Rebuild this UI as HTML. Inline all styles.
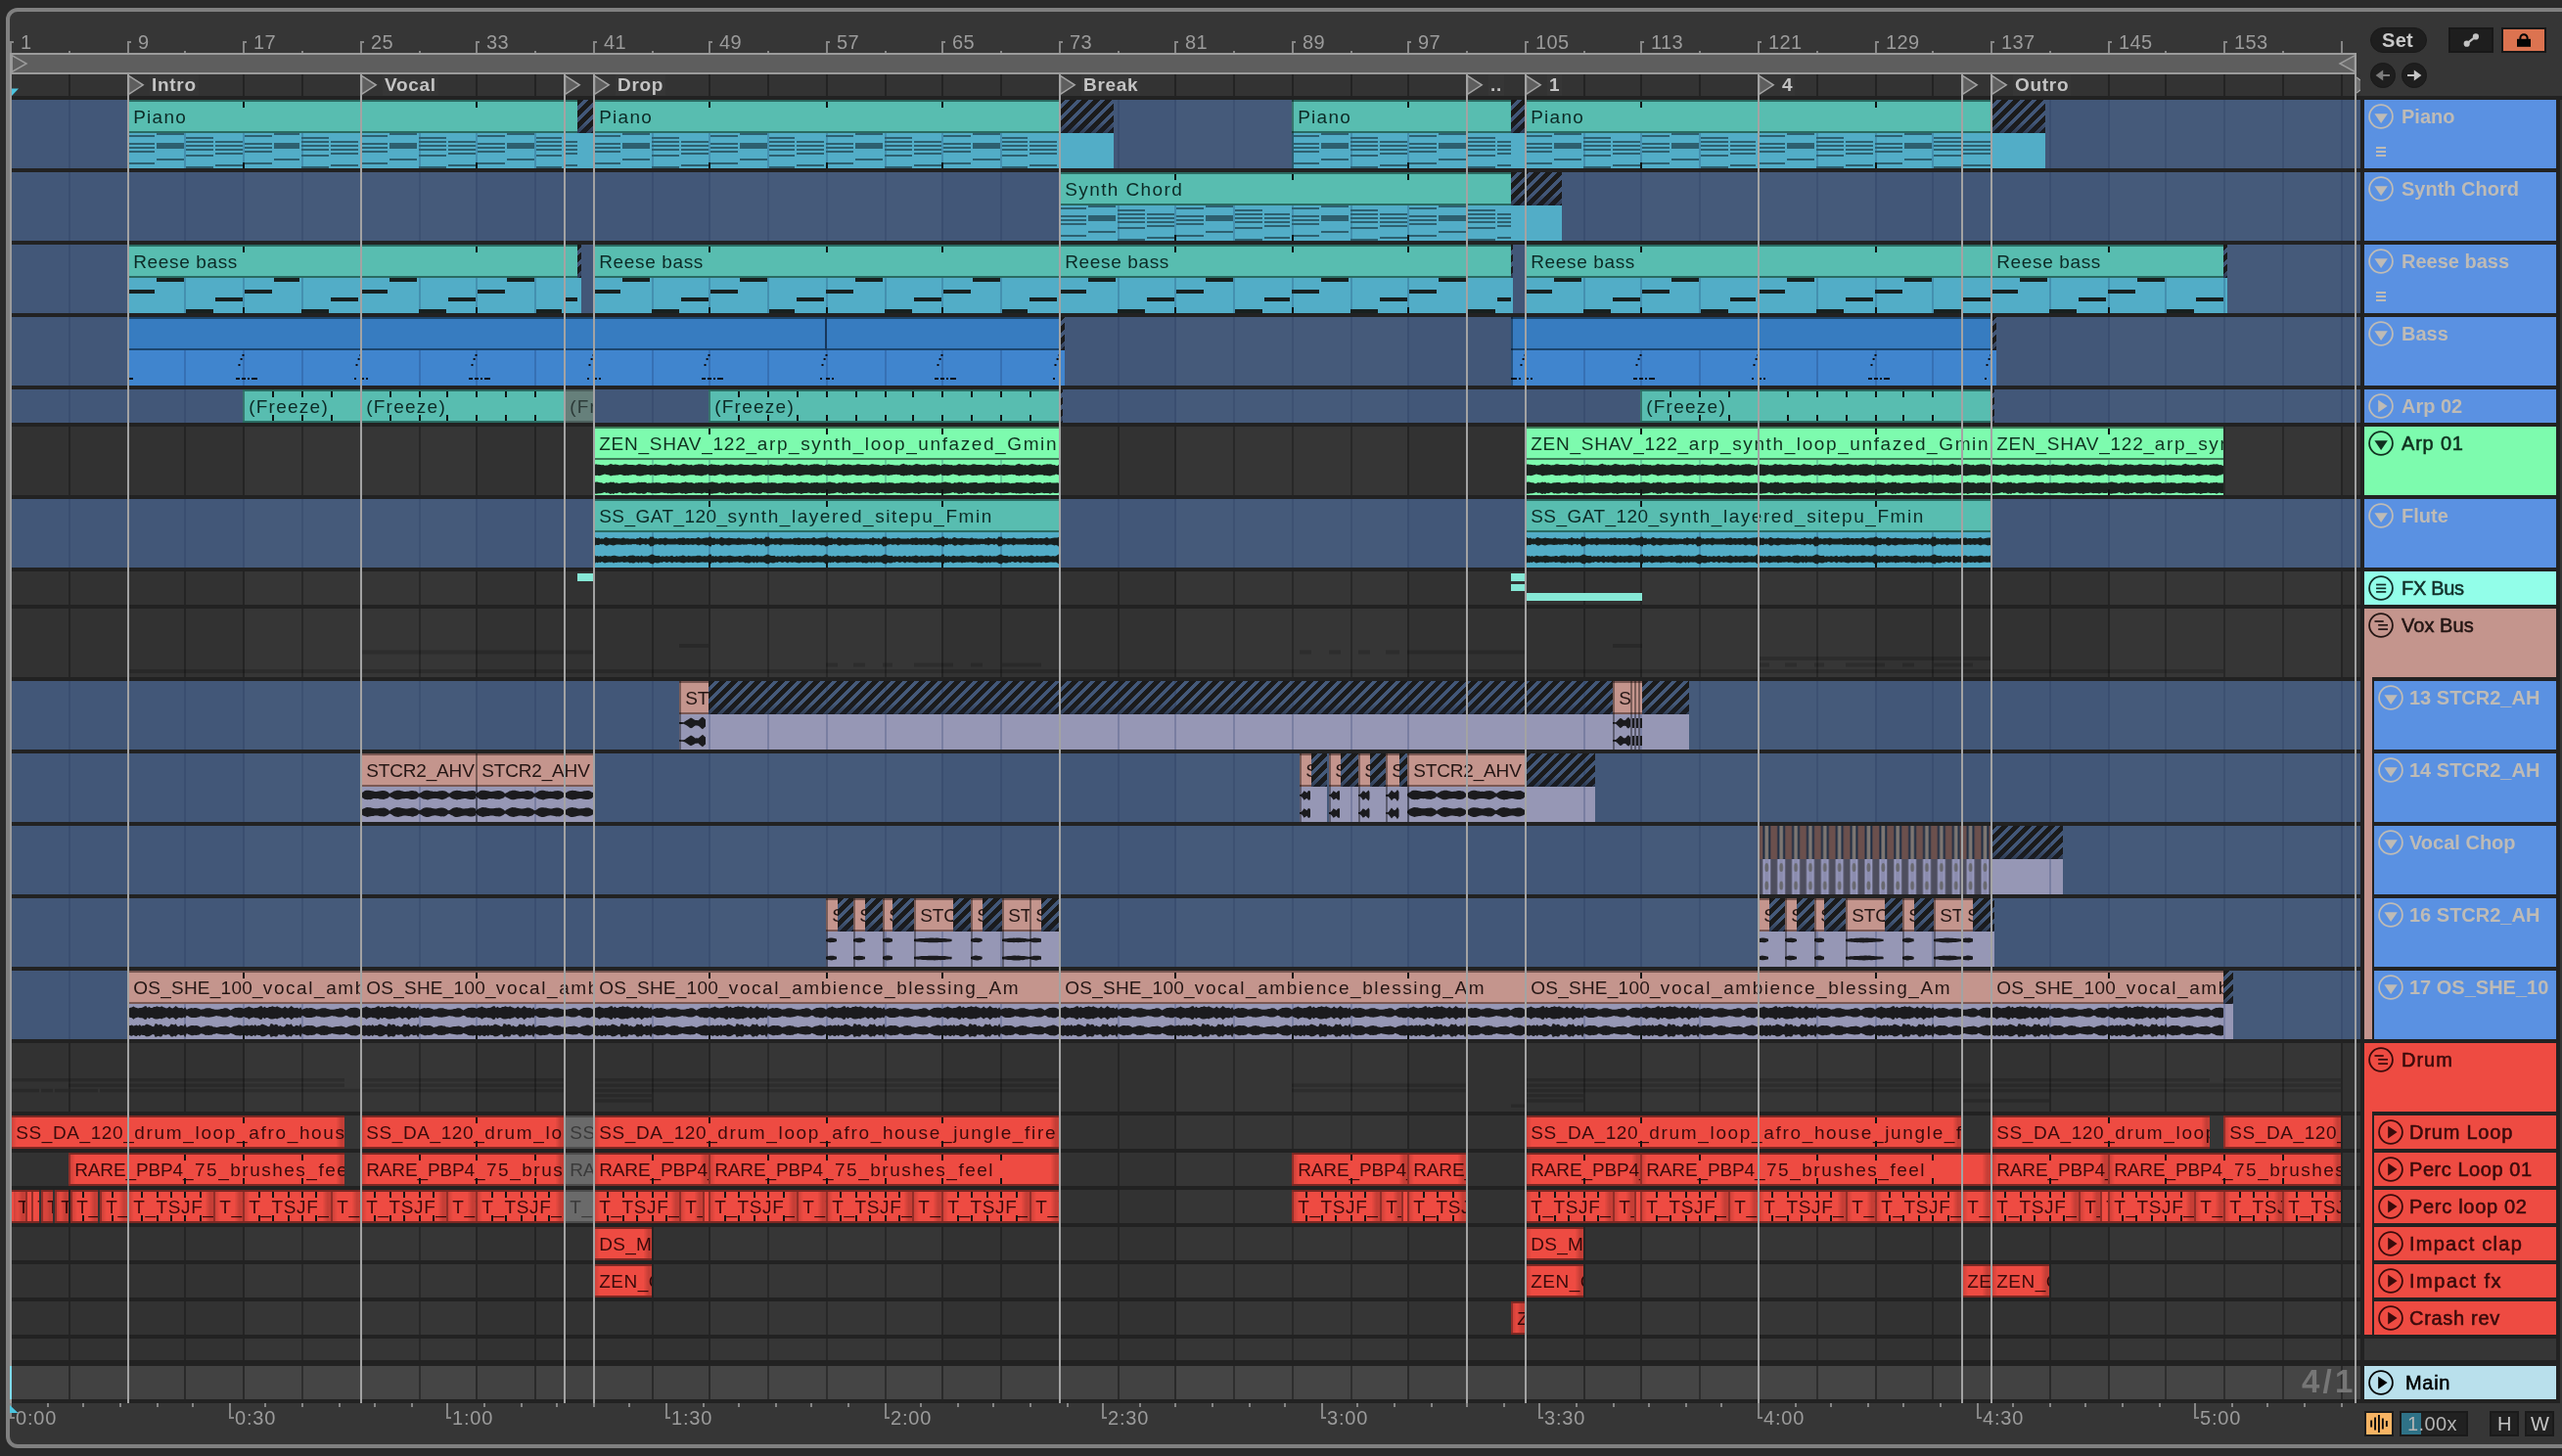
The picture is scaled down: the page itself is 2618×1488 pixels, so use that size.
<!DOCTYPE html><html><head><meta charset="utf-8"><title>Arrangement</title><style>
html,body{margin:0;padding:0}
body{width:2618px;height:1488px;background:#2a2a2a;position:relative;overflow:hidden;font-family:"Liberation Sans",sans-serif}
.a{position:absolute;box-sizing:border-box}
.t{position:absolute;white-space:nowrap}
.t,.n,.hn,.hu,.rl,.ll{will-change:transform}
.c{position:absolute;overflow:hidden;box-sizing:border-box}
.n{position:absolute;left:0;top:1px;white-space:nowrap;font-size:19px;line-height:34px;padding-left:6.2px}
.hn{position:absolute;white-space:nowrap;font-size:20px;font-weight:bold;line-height:34px}
.rl{position:absolute;white-space:nowrap;font-size:20px;line-height:22px;color:#9b9b9b;letter-spacing:.35px}
.hu{position:absolute;white-space:nowrap;font-size:20px;line-height:34px;-webkit-text-stroke:.55px currentColor}
.ll{position:absolute;white-space:nowrap;font-size:19px;font-weight:bold;line-height:22px;color:#c4c4c4;letter-spacing:.7px}
.k{position:absolute;width:2px;background:#0f1413}
svg{position:absolute;overflow:hidden}
</style></head><body>
<div class="a" style="left:6px;top:8px;width:2700px;height:1472px;border:4px solid #808080;border-radius:12px;background:#363636"></div>
<div class="a " style="left:12px;top:98px;width:2604px;height:1336px;background:#222;"></div>
<div class="a " style="left:12px;top:76px;width:2400px;height:22px;background:#333;"></div>
<svg width="0" height="0" style="left:0;top:0"><defs><g id="gl"><rect x="58" y="0" width="2" height="80"/><rect x="118" y="0" width="2" height="80"/><rect x="176" y="0" width="2" height="80"/><rect x="236" y="0" width="2" height="80"/><rect x="296" y="0" width="2" height="80"/><rect x="356" y="0" width="2" height="80"/><rect x="416" y="0" width="2" height="80"/><rect x="474" y="0" width="2" height="80"/><rect x="534" y="0" width="2" height="80"/><rect x="594" y="0" width="2" height="80"/><rect x="654" y="0" width="2" height="80"/><rect x="712" y="0" width="2" height="80"/><rect x="772" y="0" width="2" height="80"/><rect x="832" y="0" width="2" height="80"/><rect x="892" y="0" width="2" height="80"/><rect x="950" y="0" width="2" height="80"/><rect x="1010" y="0" width="2" height="80"/><rect x="1070" y="0" width="2" height="80"/><rect x="1130" y="0" width="2" height="80"/><rect x="1188" y="0" width="2" height="80"/><rect x="1248" y="0" width="2" height="80"/><rect x="1308" y="0" width="2" height="80"/><rect x="1368" y="0" width="2" height="80"/><rect x="1426" y="0" width="2" height="80"/><rect x="1486" y="0" width="2" height="80"/><rect x="1546" y="0" width="2" height="80"/><rect x="1606" y="0" width="2" height="80"/><rect x="1664" y="0" width="2" height="80"/><rect x="1724" y="0" width="2" height="80"/><rect x="1784" y="0" width="2" height="80"/><rect x="1844" y="0" width="2" height="80"/><rect x="1904" y="0" width="2" height="80"/><rect x="1962" y="0" width="2" height="80"/><rect x="2022" y="0" width="2" height="80"/><rect x="2082" y="0" width="2" height="80"/><rect x="2142" y="0" width="2" height="80"/><rect x="2200" y="0" width="2" height="80"/><rect x="2260" y="0" width="2" height="80"/><rect x="2320" y="0" width="2" height="80"/><rect x="2380" y="0" width="2" height="80"/></g></defs></svg>
<svg width="2400" height="1488" style="left:12px;top:0"><svg x="0" y="76" width="2400" height="22"><use href="#gl" fill="#232323"/></svg><rect x="0" y="102" width="2400" height="70" fill="#425778"/><svg x="0" y="102" width="2400" height="70"><use href="#gl" fill="#3a4e70"/></svg><rect x="0" y="176" width="2400" height="70" fill="#425778"/><svg x="0" y="176" width="2400" height="70"><use href="#gl" fill="#3a4e70"/></svg><rect x="0" y="250" width="2400" height="70" fill="#425778"/><svg x="0" y="250" width="2400" height="70"><use href="#gl" fill="#3a4e70"/></svg><rect x="0" y="324" width="2400" height="70" fill="#425778"/><svg x="0" y="324" width="2400" height="70"><use href="#gl" fill="#3a4e70"/></svg><rect x="0" y="398" width="2400" height="34" fill="#425778"/><svg x="0" y="398" width="2400" height="34"><use href="#gl" fill="#3a4e70"/></svg><rect x="0" y="436" width="2400" height="70" fill="#323232"/><svg x="0" y="436" width="2400" height="70"><use href="#gl" fill="#242424"/></svg><rect x="0" y="510" width="2400" height="70" fill="#425778"/><svg x="0" y="510" width="2400" height="70"><use href="#gl" fill="#3a4e70"/></svg><rect x="0" y="584" width="2400" height="34" fill="#323232"/><svg x="0" y="584" width="2400" height="34"><use href="#gl" fill="#242424"/></svg><rect x="0" y="622" width="2400" height="70" fill="#323232"/><svg x="0" y="622" width="2400" height="70"><use href="#gl" fill="#242424"/></svg><rect x="0" y="696" width="2400" height="70" fill="#425778"/><svg x="0" y="696" width="2400" height="70"><use href="#gl" fill="#3a4e70"/></svg><rect x="0" y="770" width="2400" height="70" fill="#425778"/><svg x="0" y="770" width="2400" height="70"><use href="#gl" fill="#3a4e70"/></svg><rect x="0" y="844" width="2400" height="70" fill="#425778"/><svg x="0" y="844" width="2400" height="70"><use href="#gl" fill="#3a4e70"/></svg><rect x="0" y="918" width="2400" height="70" fill="#425778"/><svg x="0" y="918" width="2400" height="70"><use href="#gl" fill="#3a4e70"/></svg><rect x="0" y="992" width="2400" height="70" fill="#425778"/><svg x="0" y="992" width="2400" height="70"><use href="#gl" fill="#3a4e70"/></svg><rect x="0" y="1066" width="2400" height="70" fill="#323232"/><svg x="0" y="1066" width="2400" height="70"><use href="#gl" fill="#242424"/></svg><rect x="0" y="1140" width="2400" height="34" fill="#323232"/><svg x="0" y="1140" width="2400" height="34"><use href="#gl" fill="#242424"/></svg><rect x="0" y="1178" width="2400" height="34" fill="#323232"/><svg x="0" y="1178" width="2400" height="34"><use href="#gl" fill="#242424"/></svg><rect x="0" y="1216" width="2400" height="34" fill="#323232"/><svg x="0" y="1216" width="2400" height="34"><use href="#gl" fill="#242424"/></svg><rect x="0" y="1254" width="2400" height="34" fill="#323232"/><svg x="0" y="1254" width="2400" height="34"><use href="#gl" fill="#242424"/></svg><rect x="0" y="1292" width="2400" height="34" fill="#323232"/><svg x="0" y="1292" width="2400" height="34"><use href="#gl" fill="#242424"/></svg><rect x="0" y="1330" width="2400" height="34" fill="#323232"/><svg x="0" y="1330" width="2400" height="34"><use href="#gl" fill="#242424"/></svg><rect x="0" y="1368" width="2400" height="22" fill="#323232"/><svg x="0" y="1368" width="2400" height="22"><use href="#gl" fill="#242424"/></svg><rect x="0" y="1396" width="2400" height="34" fill="#424242"/><svg x="0" y="1396" width="2400" height="34"><use href="#gl" fill="#2a2a2a"/></svg><rect x="238" y="102" width="236" height="70" fill="#fff" fill-opacity=".02"/><rect x="714" y="102" width="236" height="70" fill="#fff" fill-opacity=".02"/><rect x="1190" y="102" width="236" height="70" fill="#fff" fill-opacity=".02"/><rect x="1666" y="102" width="238" height="70" fill="#fff" fill-opacity=".02"/><rect x="2144" y="102" width="236" height="70" fill="#fff" fill-opacity=".02"/><rect x="238" y="176" width="236" height="70" fill="#fff" fill-opacity=".02"/><rect x="714" y="176" width="236" height="70" fill="#fff" fill-opacity=".02"/><rect x="1190" y="176" width="236" height="70" fill="#fff" fill-opacity=".02"/><rect x="1666" y="176" width="238" height="70" fill="#fff" fill-opacity=".02"/><rect x="2144" y="176" width="236" height="70" fill="#fff" fill-opacity=".02"/><rect x="238" y="250" width="236" height="70" fill="#fff" fill-opacity=".02"/><rect x="714" y="250" width="236" height="70" fill="#fff" fill-opacity=".02"/><rect x="1190" y="250" width="236" height="70" fill="#fff" fill-opacity=".02"/><rect x="1666" y="250" width="238" height="70" fill="#fff" fill-opacity=".02"/><rect x="2144" y="250" width="236" height="70" fill="#fff" fill-opacity=".02"/><rect x="238" y="324" width="236" height="70" fill="#fff" fill-opacity=".02"/><rect x="714" y="324" width="236" height="70" fill="#fff" fill-opacity=".02"/><rect x="1190" y="324" width="236" height="70" fill="#fff" fill-opacity=".02"/><rect x="1666" y="324" width="238" height="70" fill="#fff" fill-opacity=".02"/><rect x="2144" y="324" width="236" height="70" fill="#fff" fill-opacity=".02"/><rect x="238" y="398" width="236" height="34" fill="#fff" fill-opacity=".02"/><rect x="714" y="398" width="236" height="34" fill="#fff" fill-opacity=".02"/><rect x="1190" y="398" width="236" height="34" fill="#fff" fill-opacity=".02"/><rect x="1666" y="398" width="238" height="34" fill="#fff" fill-opacity=".02"/><rect x="2144" y="398" width="236" height="34" fill="#fff" fill-opacity=".02"/><rect x="238" y="436" width="236" height="70" fill="#fff" fill-opacity=".02"/><rect x="714" y="436" width="236" height="70" fill="#fff" fill-opacity=".02"/><rect x="1190" y="436" width="236" height="70" fill="#fff" fill-opacity=".02"/><rect x="1666" y="436" width="238" height="70" fill="#fff" fill-opacity=".02"/><rect x="2144" y="436" width="236" height="70" fill="#fff" fill-opacity=".02"/><rect x="238" y="510" width="236" height="70" fill="#fff" fill-opacity=".02"/><rect x="714" y="510" width="236" height="70" fill="#fff" fill-opacity=".02"/><rect x="1190" y="510" width="236" height="70" fill="#fff" fill-opacity=".02"/><rect x="1666" y="510" width="238" height="70" fill="#fff" fill-opacity=".02"/><rect x="2144" y="510" width="236" height="70" fill="#fff" fill-opacity=".02"/><rect x="238" y="584" width="236" height="34" fill="#fff" fill-opacity=".02"/><rect x="714" y="584" width="236" height="34" fill="#fff" fill-opacity=".02"/><rect x="1190" y="584" width="236" height="34" fill="#fff" fill-opacity=".02"/><rect x="1666" y="584" width="238" height="34" fill="#fff" fill-opacity=".02"/><rect x="2144" y="584" width="236" height="34" fill="#fff" fill-opacity=".02"/><rect x="238" y="622" width="236" height="70" fill="#fff" fill-opacity=".02"/><rect x="714" y="622" width="236" height="70" fill="#fff" fill-opacity=".02"/><rect x="1190" y="622" width="236" height="70" fill="#fff" fill-opacity=".02"/><rect x="1666" y="622" width="238" height="70" fill="#fff" fill-opacity=".02"/><rect x="2144" y="622" width="236" height="70" fill="#fff" fill-opacity=".02"/><rect x="238" y="696" width="236" height="70" fill="#fff" fill-opacity=".02"/><rect x="714" y="696" width="236" height="70" fill="#fff" fill-opacity=".02"/><rect x="1190" y="696" width="236" height="70" fill="#fff" fill-opacity=".02"/><rect x="1666" y="696" width="238" height="70" fill="#fff" fill-opacity=".02"/><rect x="2144" y="696" width="236" height="70" fill="#fff" fill-opacity=".02"/><rect x="238" y="770" width="236" height="70" fill="#fff" fill-opacity=".02"/><rect x="714" y="770" width="236" height="70" fill="#fff" fill-opacity=".02"/><rect x="1190" y="770" width="236" height="70" fill="#fff" fill-opacity=".02"/><rect x="1666" y="770" width="238" height="70" fill="#fff" fill-opacity=".02"/><rect x="2144" y="770" width="236" height="70" fill="#fff" fill-opacity=".02"/><rect x="238" y="844" width="236" height="70" fill="#fff" fill-opacity=".02"/><rect x="714" y="844" width="236" height="70" fill="#fff" fill-opacity=".02"/><rect x="1190" y="844" width="236" height="70" fill="#fff" fill-opacity=".02"/><rect x="1666" y="844" width="238" height="70" fill="#fff" fill-opacity=".02"/><rect x="2144" y="844" width="236" height="70" fill="#fff" fill-opacity=".02"/><rect x="238" y="918" width="236" height="70" fill="#fff" fill-opacity=".02"/><rect x="714" y="918" width="236" height="70" fill="#fff" fill-opacity=".02"/><rect x="1190" y="918" width="236" height="70" fill="#fff" fill-opacity=".02"/><rect x="1666" y="918" width="238" height="70" fill="#fff" fill-opacity=".02"/><rect x="2144" y="918" width="236" height="70" fill="#fff" fill-opacity=".02"/><rect x="238" y="992" width="236" height="70" fill="#fff" fill-opacity=".02"/><rect x="714" y="992" width="236" height="70" fill="#fff" fill-opacity=".02"/><rect x="1190" y="992" width="236" height="70" fill="#fff" fill-opacity=".02"/><rect x="1666" y="992" width="238" height="70" fill="#fff" fill-opacity=".02"/><rect x="2144" y="992" width="236" height="70" fill="#fff" fill-opacity=".02"/><rect x="238" y="1066" width="236" height="70" fill="#fff" fill-opacity=".02"/><rect x="714" y="1066" width="236" height="70" fill="#fff" fill-opacity=".02"/><rect x="1190" y="1066" width="236" height="70" fill="#fff" fill-opacity=".02"/><rect x="1666" y="1066" width="238" height="70" fill="#fff" fill-opacity=".02"/><rect x="2144" y="1066" width="236" height="70" fill="#fff" fill-opacity=".02"/><rect x="238" y="1140" width="236" height="34" fill="#fff" fill-opacity=".02"/><rect x="714" y="1140" width="236" height="34" fill="#fff" fill-opacity=".02"/><rect x="1190" y="1140" width="236" height="34" fill="#fff" fill-opacity=".02"/><rect x="1666" y="1140" width="238" height="34" fill="#fff" fill-opacity=".02"/><rect x="2144" y="1140" width="236" height="34" fill="#fff" fill-opacity=".02"/><rect x="238" y="1178" width="236" height="34" fill="#fff" fill-opacity=".02"/><rect x="714" y="1178" width="236" height="34" fill="#fff" fill-opacity=".02"/><rect x="1190" y="1178" width="236" height="34" fill="#fff" fill-opacity=".02"/><rect x="1666" y="1178" width="238" height="34" fill="#fff" fill-opacity=".02"/><rect x="2144" y="1178" width="236" height="34" fill="#fff" fill-opacity=".02"/><rect x="238" y="1216" width="236" height="34" fill="#fff" fill-opacity=".02"/><rect x="714" y="1216" width="236" height="34" fill="#fff" fill-opacity=".02"/><rect x="1190" y="1216" width="236" height="34" fill="#fff" fill-opacity=".02"/><rect x="1666" y="1216" width="238" height="34" fill="#fff" fill-opacity=".02"/><rect x="2144" y="1216" width="236" height="34" fill="#fff" fill-opacity=".02"/><rect x="238" y="1254" width="236" height="34" fill="#fff" fill-opacity=".02"/><rect x="714" y="1254" width="236" height="34" fill="#fff" fill-opacity=".02"/><rect x="1190" y="1254" width="236" height="34" fill="#fff" fill-opacity=".02"/><rect x="1666" y="1254" width="238" height="34" fill="#fff" fill-opacity=".02"/><rect x="2144" y="1254" width="236" height="34" fill="#fff" fill-opacity=".02"/><rect x="238" y="1292" width="236" height="34" fill="#fff" fill-opacity=".02"/><rect x="714" y="1292" width="236" height="34" fill="#fff" fill-opacity=".02"/><rect x="1190" y="1292" width="236" height="34" fill="#fff" fill-opacity=".02"/><rect x="1666" y="1292" width="238" height="34" fill="#fff" fill-opacity=".02"/><rect x="2144" y="1292" width="236" height="34" fill="#fff" fill-opacity=".02"/><rect x="238" y="1330" width="236" height="34" fill="#fff" fill-opacity=".02"/><rect x="714" y="1330" width="236" height="34" fill="#fff" fill-opacity=".02"/><rect x="1190" y="1330" width="236" height="34" fill="#fff" fill-opacity=".02"/><rect x="1666" y="1330" width="238" height="34" fill="#fff" fill-opacity=".02"/><rect x="2144" y="1330" width="236" height="34" fill="#fff" fill-opacity=".02"/><rect x="238" y="1368" width="236" height="22" fill="#fff" fill-opacity=".02"/><rect x="714" y="1368" width="236" height="22" fill="#fff" fill-opacity=".02"/><rect x="1190" y="1368" width="236" height="22" fill="#fff" fill-opacity=".02"/><rect x="1666" y="1368" width="238" height="22" fill="#fff" fill-opacity=".02"/><rect x="2144" y="1368" width="236" height="22" fill="#fff" fill-opacity=".02"/><rect x="238" y="1396" width="236" height="34" fill="#fff" fill-opacity=".02"/><rect x="714" y="1396" width="236" height="34" fill="#fff" fill-opacity=".02"/><rect x="1190" y="1396" width="236" height="34" fill="#fff" fill-opacity=".02"/><rect x="1666" y="1396" width="238" height="34" fill="#fff" fill-opacity=".02"/><rect x="2144" y="1396" width="236" height="34" fill="#fff" fill-opacity=".02"/></svg>
<svg width="0" height="0" style="left:0;top:0"><defs><g id="bsA" fill="#0d0d10"><rect x="-4.5" y="14.0" width="2.0" height="2.0"/><rect x="-2.4" y="8.0" width="2.0" height="2.0"/><rect x="-0.5" y="4.0" width="2.0" height="2.0"/><rect x="-7.0" y="28.0" width="4.0" height="2.0"/><rect x="-1.0" y="28.0" width="4.0" height="2.0"/><rect x="5.0" y="28.0" width="2.0" height="2.0"/><rect x="9.0" y="28.0" width="6.0" height="2.0"/></g><g id="bsB" fill="#0d0d10"><rect x="-4.5" y="14.0" width="2.0" height="2.0"/><rect x="-2.4" y="8.0" width="2.0" height="2.0"/><rect x="-0.5" y="4.0" width="2.0" height="2.0"/><rect x="-6.0" y="28.0" width="2.0" height="2.0"/><rect x="0.0" y="28.0" width="4.0" height="2.0"/><rect x="6.0" y="28.0" width="2.0" height="2.0"/></g><path id="wz" fill="#1a241f" d="M0.0 5.1L1.5 4.9L3.0 4.2L4.5 4.7L6.0 4.7L7.5 4.9L9.0 5.2L10.5 5.1L12.0 5.7L13.5 5.6L15.0 5.4L16.5 4.8L18.0 4.1L19.5 4.5L21.0 5.1L22.5 4.5L24.0 4.8L25.5 5.1L27.0 5.4L28.5 5.3L30.0 5.3L31.5 4.6L33.0 4.3L34.5 4.6L36.0 4.9L37.5 4.9L39.0 4.9L40.5 5.1L42.0 5.2L43.5 5.5L45.0 4.9L46.5 4.2L48.0 4.2L49.5 4.8L51.0 4.7L52.5 5.0L54.0 5.1L55.5 5.7L57.0 5.7L58.5 4.9L60.0 5.1L61.5 5.4L63.0 4.4L64.5 4.4L66.0 4.9L67.5 4.9L69.0 5.3L70.5 5.5L72.0 5.6L73.5 5.5L75.0 5.8L76.5 4.8L78.0 4.3L79.5 3.8L81.0 4.7L82.5 4.8L84.0 5.6L85.5 5.1L87.0 5.4L88.5 5.6L90.0 5.0L91.5 4.3L93.0 3.9L94.5 4.5L96.0 4.7L97.5 5.3L99.0 5.3L100.5 4.8L102.0 5.8L103.5 5.2L105.0 4.8L106.5 4.7L108.0 4.3L109.5 4.5L111.0 4.3L112.5 4.5L114.0 5.3L115.5 5.0L117.0 5.7L118.5 6.1L120.0 4.7L121.0 4.7L121.0 15.7L120.0 15.6L118.5 15.0L117.0 14.6L115.5 15.6L114.0 15.6L112.5 15.9L111.0 16.6L109.5 16.2L108.0 15.9L106.5 15.7L105.0 15.9L103.5 15.3L102.0 15.2L100.5 15.3L99.0 15.2L97.5 15.6L96.0 15.8L94.5 16.1L93.0 16.5L91.5 16.0L90.0 16.0L88.5 14.9L87.0 15.1L85.5 15.8L84.0 15.4L82.5 15.9L81.0 15.7L79.5 16.6L78.0 16.1L76.5 16.1L75.0 14.9L73.5 15.2L72.0 14.8L70.5 14.9L69.0 15.0L67.5 15.5L66.0 15.5L64.5 16.0L63.0 16.1L61.5 15.2L60.0 15.4L58.5 15.7L57.0 15.1L55.5 15.0L54.0 15.5L52.5 15.6L51.0 16.1L49.5 16.3L48.0 16.4L46.5 16.3L45.0 16.2L43.5 15.3L42.0 15.2L40.5 15.1L39.0 15.6L37.5 15.6L36.0 15.9L34.5 15.8L33.0 16.1L31.5 16.0L30.0 15.4L28.5 15.0L27.0 14.9L25.5 15.5L24.0 15.6L22.5 15.8L21.0 15.8L19.5 16.1L18.0 16.5L16.5 15.6L15.0 15.2L13.5 15.1L12.0 14.6L10.5 15.1L9.0 15.4L7.5 16.1L6.0 16.2L4.5 15.7L3.0 16.0L1.5 15.7L0.0 15.5ZM0.0 23.5L1.5 23.0L3.0 22.5L4.5 22.4L6.0 23.1L7.5 23.3L9.0 23.2L10.5 24.3L12.0 23.9L13.5 23.0L15.0 23.6L16.5 23.2L18.0 22.6L19.5 23.0L21.0 22.4L22.5 23.8L24.0 23.2L25.5 23.8L27.0 24.2L28.5 23.6L30.0 23.2L31.5 23.3L33.0 22.9L34.5 23.1L36.0 22.9L37.5 23.9L39.0 23.8L40.5 23.8L42.0 23.6L43.5 23.5L45.0 23.2L46.5 22.5L48.0 23.3L49.5 22.8L51.0 22.9L52.5 22.7L54.0 23.1L55.5 24.1L57.0 23.6L58.5 23.8L60.0 23.4L61.5 23.3L63.0 23.4L64.5 22.9L66.0 23.3L67.5 23.2L69.0 23.6L70.5 24.2L72.0 23.8L73.5 23.7L75.0 23.7L76.5 22.9L78.0 23.1L79.5 23.2L81.0 23.1L82.5 23.3L84.0 23.5L85.5 23.5L87.0 23.4L88.5 24.1L90.0 23.5L91.5 23.1L93.0 23.1L94.5 22.2L96.0 22.9L97.5 23.3L99.0 23.2L100.5 23.1L102.0 23.6L103.5 24.2L105.0 23.3L106.5 23.5L108.0 23.0L109.5 23.2L111.0 22.7L112.5 23.5L114.0 23.6L115.5 23.4L117.0 23.4L118.5 23.3L120.0 23.8L121.0 23.3L121.0 34.5L120.0 33.5L118.5 34.0L117.0 34.0L115.5 34.0L114.0 33.6L112.5 34.0L111.0 34.8L109.5 34.0L108.0 33.9L106.5 34.0L105.0 34.3L103.5 33.7L102.0 33.6L100.5 34.0L99.0 34.0L97.5 34.1L96.0 34.5L94.5 35.1L93.0 33.9L91.5 34.4L90.0 34.2L88.5 33.5L87.0 33.8L85.5 34.0L84.0 33.9L82.5 34.2L81.0 34.4L79.5 34.4L78.0 34.0L76.5 34.5L75.0 33.8L73.5 33.9L72.0 33.8L70.5 33.2L69.0 33.6L67.5 33.9L66.0 34.1L64.5 34.2L63.0 34.3L61.5 34.1L60.0 34.2L58.5 33.5L57.0 33.6L55.5 33.1L54.0 34.3L52.5 34.8L51.0 34.7L49.5 34.1L48.0 34.4L46.5 34.6L45.0 34.5L43.5 33.4L42.0 33.3L40.5 33.9L39.0 33.6L37.5 33.4L36.0 34.3L34.5 34.4L33.0 34.6L31.5 34.1L30.0 34.4L28.5 33.5L27.0 33.1L25.5 33.8L24.0 34.3L22.5 33.8L21.0 35.0L19.5 34.2L18.0 35.0L16.5 34.2L15.0 33.6L13.5 34.0L12.0 33.1L10.5 33.4L9.0 34.0L7.5 34.3L6.0 34.3L4.5 34.5L3.0 34.8L1.5 34.2L0.0 33.9Z"/><path id="wg" fill="#17201f" d="M0.0 5.0L1.5 4.2L3.0 5.7L4.5 5.9L6.0 5.6L7.5 6.8L9.0 6.2L10.5 6.7L12.0 5.5L13.5 5.1L15.0 5.7L16.5 6.2L18.0 6.3L19.5 6.0L21.0 5.4L22.5 5.9L24.0 5.9L25.5 6.2L27.0 6.2L28.5 6.4L30.0 5.8L31.5 5.6L33.0 6.4L34.5 6.3L36.0 6.2L37.5 6.7L39.0 6.4L40.5 6.4L42.0 6.4L43.5 6.9L45.0 6.1L46.5 6.3L48.0 5.1L49.5 6.1L51.0 6.3L52.5 6.4L54.0 5.8L55.5 6.7L57.0 6.5L58.5 4.4L60.0 4.7L61.5 4.4L63.0 6.4L64.5 6.1L66.0 6.7L67.5 6.3L69.0 6.0L70.5 6.2L72.0 6.2L73.5 5.6L75.0 5.7L76.5 6.6L78.0 6.6L79.5 6.4L81.0 6.6L82.5 6.4L84.0 6.0L85.5 6.9L87.0 6.0L88.5 5.7L90.0 5.9L91.5 5.6L93.0 5.6L94.5 6.6L96.0 5.9L97.5 6.1L99.0 6.4L100.5 6.1L102.0 6.0L103.5 6.2L105.0 6.3L106.5 5.5L108.0 5.1L109.5 6.3L111.0 6.4L112.5 6.1L114.0 5.8L115.5 5.6L117.0 5.5L118.5 5.5L120.0 4.7L121.0 4.7L121.0 14.1L120.0 14.7L118.5 13.4L117.0 13.1L115.5 13.4L114.0 12.9L112.5 12.6L111.0 12.4L109.5 12.7L108.0 13.5L106.5 13.1L105.0 12.2L103.5 12.5L102.0 12.9L100.5 12.6L99.0 12.4L97.5 12.9L96.0 12.5L94.5 12.4L93.0 13.1L91.5 13.1L90.0 12.5L88.5 13.0L87.0 12.4L85.5 12.3L84.0 12.6L82.5 12.6L81.0 12.5L79.5 12.6L78.0 12.4L76.5 12.3L75.0 12.7L73.5 13.4L72.0 12.5L70.5 12.3L69.0 12.7L67.5 12.7L66.0 12.0L64.5 12.4L63.0 12.4L61.5 14.1L60.0 14.3L58.5 14.4L57.0 12.6L55.5 12.1L54.0 12.9L52.5 12.2L51.0 12.1L49.5 12.5L48.0 13.6L46.5 12.4L45.0 12.8L43.5 12.1L42.0 12.2L40.5 12.0L39.0 12.8L37.5 12.4L36.0 12.8L34.5 12.2L33.0 12.8L31.5 12.8L30.0 12.9L28.5 12.7L27.0 12.6L25.5 12.5L24.0 12.5L22.5 13.0L21.0 13.6L19.5 13.2L18.0 12.7L16.5 12.6L15.0 13.4L13.5 13.8L12.0 13.0L10.5 12.0L9.0 12.6L7.5 11.9L6.0 13.1L4.5 13.0L3.0 12.8L1.5 14.3L0.0 13.8ZM0.0 22.8L1.5 22.8L3.0 24.4L4.5 24.1L6.0 24.8L7.5 24.1L9.0 24.7L10.5 24.6L12.0 23.7L13.5 24.0L15.0 24.6L16.5 24.3L18.0 24.4L19.5 23.9L21.0 23.7L22.5 23.7L24.0 24.2L25.5 24.5L27.0 24.7L28.5 24.4L30.0 24.5L31.5 24.0L33.0 24.0L34.5 24.9L36.0 24.3L37.5 23.7L39.0 23.7L40.5 23.5L42.0 23.7L43.5 24.4L45.0 24.2L46.5 24.0L48.0 24.8L49.5 23.4L51.0 24.4L52.5 24.6L54.0 24.3L55.5 24.5L57.0 24.0L58.5 23.3L60.0 22.4L61.5 22.8L63.0 23.8L64.5 24.1L66.0 23.9L67.5 23.7L69.0 25.1L70.5 24.2L72.0 24.5L73.5 24.8L75.0 23.9L76.5 24.5L78.0 24.8L79.5 24.0L81.0 23.8L82.5 24.9L84.0 24.8L85.5 23.9L87.0 24.8L88.5 24.3L90.0 24.2L91.5 23.6L93.0 23.8L94.5 24.6L96.0 24.7L97.5 23.8L99.0 24.2L100.5 24.4L102.0 24.3L103.5 24.3L105.0 24.2L106.5 23.7L108.0 23.7L109.5 23.8L111.0 24.4L112.5 24.6L114.0 24.1L115.5 24.4L117.0 24.2L118.5 23.3L120.0 22.3L121.0 23.1L121.0 31.6L120.0 32.5L118.5 31.3L117.0 30.6L115.5 30.8L114.0 30.8L112.5 30.4L111.0 30.6L109.5 30.8L108.0 31.0L106.5 31.3L105.0 30.6L103.5 30.6L102.0 31.2L100.5 30.6L99.0 30.8L97.5 31.1L96.0 30.4L94.5 30.7L93.0 31.4L91.5 31.2L90.0 31.0L88.5 30.6L87.0 30.6L85.5 31.0L84.0 30.4L82.5 30.2L81.0 31.4L79.5 30.8L78.0 30.0L76.5 30.7L75.0 30.9L73.5 30.2L72.0 30.1L70.5 31.0L69.0 30.5L67.5 31.2L66.0 31.4L64.5 31.2L63.0 30.8L61.5 32.5L60.0 32.3L58.5 31.8L57.0 30.8L55.5 30.5L54.0 30.8L52.5 30.4L51.0 30.4L49.5 31.4L48.0 30.2L46.5 31.4L45.0 30.4L43.5 30.4L42.0 31.4L40.5 31.5L39.0 31.0L37.5 31.5L36.0 30.4L34.5 30.4L33.0 30.7L31.5 31.0L30.0 30.3L28.5 30.6L27.0 30.7L25.5 30.5L24.0 31.0L22.5 30.8L21.0 31.4L19.5 30.6L18.0 30.8L16.5 30.6L15.0 30.7L13.5 31.1L12.0 31.4L10.5 30.8L9.0 30.0L7.5 31.0L6.0 30.4L4.5 31.3L3.0 30.5L1.5 32.6L0.0 31.9Z"/><path id="wo" fill="#1b1b1e" d="M0.0 6.0L1.6 4.4L3.2 3.8L4.8 3.5L6.4 2.4L8.0 3.5L9.6 3.9L11.2 4.4L12.8 4.1L14.4 3.9L16.0 3.4L17.6 2.5L19.2 2.1L20.8 3.9L22.4 2.8L24.0 4.0L25.6 3.9L27.2 3.0L28.8 3.0L30.4 2.2L32.0 3.0L33.6 3.2L35.2 2.2L36.8 3.3L38.4 3.7L40.0 4.6L41.6 4.0L43.2 2.6L44.8 4.1L46.4 4.4L48.0 3.4L49.6 2.1L51.2 3.2L52.8 4.3L54.4 3.9L56.0 3.7L57.6 4.9L59.2 3.3L60.8 6.0L62.4 5.1L64.0 4.6L65.6 3.9L67.2 4.4L68.8 4.0L70.4 4.0L72.0 4.5L73.6 5.0L75.2 5.8L76.8 5.6L78.4 5.3L80.0 4.6L81.6 4.2L83.2 4.3L84.8 4.3L86.4 4.9L88.0 5.2L89.6 5.8L91.2 5.7L92.8 5.7L94.4 5.5L96.0 5.1L97.6 5.1L99.2 4.3L100.8 4.2L102.4 4.6L104.0 5.4L105.6 6.5L107.2 5.4L108.8 4.8L110.4 4.1L112.0 4.1L113.6 3.7L115.2 3.7L116.8 4.1L118.4 4.5L120.0 5.7L121.0 6.4L121.0 11.7L120.0 12.5L118.4 13.3L116.8 14.2L115.2 14.2L113.6 14.3L112.0 13.6L110.4 13.8L108.8 13.4L107.2 12.2L105.6 11.8L104.0 12.6L102.4 13.3L100.8 13.4L99.2 13.4L97.6 13.4L96.0 13.1L94.4 12.5L92.8 12.5L91.2 12.0L89.6 12.4L88.0 12.9L86.4 13.3L84.8 13.5L83.2 13.8L81.6 13.6L80.0 13.5L78.4 12.8L76.8 12.7L75.2 12.2L73.6 13.2L72.0 13.6L70.4 14.0L68.8 14.1L67.2 13.9L65.6 14.1L64.0 13.5L62.4 12.6L60.8 11.7L59.2 14.4L57.6 13.4L56.0 14.5L54.4 14.2L52.8 13.7L51.2 14.9L49.6 16.2L48.0 14.6L46.4 13.7L44.8 14.2L43.2 15.6L41.6 14.3L40.0 13.2L38.4 14.3L36.8 14.5L35.2 15.4L33.6 14.7L32.0 15.3L30.4 15.6L28.8 15.4L27.2 15.1L25.6 14.0L24.0 14.1L22.4 15.3L20.8 13.8L19.2 15.9L17.6 15.7L16.0 14.4L14.4 14.2L12.8 14.3L11.2 13.5L9.6 14.1L8.0 14.6L6.4 15.7L4.8 14.2L3.2 13.9L1.6 13.3L0.0 11.9ZM0.0 22.9L1.6 22.3L3.2 21.9L4.8 21.5L6.4 22.4L8.0 21.9L9.6 21.4L11.2 22.4L12.8 21.1L14.4 22.7L16.0 22.0L17.6 22.3L19.2 20.7L20.8 20.8L22.4 21.4L24.0 21.9L25.6 23.0L27.2 23.3L28.8 20.0L30.4 20.6L32.0 21.8L33.6 20.8L35.2 21.0L36.8 22.9L38.4 22.1L40.0 22.9L41.6 23.5L43.2 22.7L44.8 20.4L46.4 21.0L48.0 21.5L49.6 20.3L51.2 22.7L52.8 23.2L54.4 21.8L56.0 22.1L57.6 22.8L59.2 20.1L60.8 24.1L62.4 23.3L64.0 22.5L65.6 22.1L67.2 22.1L68.8 22.3L70.4 22.1L72.0 22.2L73.6 23.0L75.2 23.9L76.8 23.6L78.4 23.3L80.0 22.6L81.6 22.3L83.2 22.1L84.8 22.6L86.4 22.6L88.0 23.5L89.6 23.6L91.2 24.0L92.8 23.8L94.4 23.2L96.0 23.1L97.6 23.0L99.2 22.8L100.8 22.5L102.4 23.0L104.0 23.5L105.6 24.3L107.2 23.6L108.8 22.8L110.4 22.4L112.0 22.2L113.6 21.6L115.2 21.6L116.8 22.2L118.4 22.7L120.0 23.8L121.0 24.6L121.0 29.9L120.0 30.6L118.4 31.5L116.8 32.2L115.2 32.4L113.6 32.3L112.0 32.2L110.4 32.0L108.8 31.0L107.2 30.4L105.6 29.7L104.0 30.9L102.4 31.2L100.8 31.3L99.2 31.5L97.6 31.2L96.0 31.1L94.4 30.7L92.8 30.6L91.2 30.1L89.6 30.8L88.0 30.7L86.4 31.7L84.8 31.7L83.2 32.0L81.6 31.8L80.0 32.0L78.4 30.9L76.8 30.5L75.2 30.3L73.6 31.4L72.0 31.7L70.4 32.0L68.8 31.8L67.2 32.2L65.6 32.2L64.0 31.4L62.4 30.9L60.8 30.1L59.2 34.2L57.6 31.6L56.0 32.1L54.4 32.2L52.8 31.0L51.2 31.6L49.6 33.5L48.0 32.4L46.4 33.6L44.8 33.6L43.2 31.4L41.6 31.1L40.0 31.7L38.4 31.8L36.8 31.0L35.2 33.2L33.6 33.4L32.0 32.7L30.4 33.3L28.8 33.9L27.2 30.9L25.6 31.3L24.0 32.2L22.4 32.9L20.8 33.3L19.2 33.3L17.6 32.0L16.0 32.0L14.4 31.4L12.8 33.0L11.2 31.8L9.6 33.0L8.0 32.7L6.4 31.8L4.8 32.8L3.2 32.4L1.6 31.5L0.0 30.8Z"/><path id="ws" fill="#1b1b1e" d="M0.0 7.6L1.5 6.1L3.0 5.4L4.5 4.3L6.0 3.8L7.5 3.7L9.0 3.8L10.5 4.1L12.0 4.2L13.5 4.6L15.0 5.0L16.5 4.9L18.0 4.7L19.5 4.5L21.0 4.2L22.5 4.0L24.0 3.9L25.5 4.3L27.0 4.8L28.5 5.6L30.0 7.0L31.5 6.2L33.0 5.5L34.5 4.4L36.0 4.2L37.5 3.8L39.0 3.7L40.5 3.7L42.0 4.3L43.5 4.6L45.0 5.0L46.5 5.1L48.0 4.7L49.5 4.8L51.0 4.2L52.5 4.1L54.0 4.1L55.5 4.4L57.0 4.6L58.5 5.5L60.0 6.9L61.5 6.3L63.0 5.5L64.5 4.6L66.0 4.1L67.5 3.7L69.0 3.7L70.5 3.9L72.0 4.4L73.5 4.5L75.0 5.0L76.5 4.8L78.0 5.0L79.5 4.8L81.0 4.2L82.5 4.2L84.0 4.1L85.5 4.3L87.0 4.6L88.5 5.3L90.0 6.6L91.5 6.8L93.0 5.7L94.5 4.7L96.0 4.3L97.5 3.9L99.0 3.8L100.5 4.0L102.0 4.0L103.5 4.4L105.0 4.7L106.5 4.9L108.0 4.9L109.5 4.8L111.0 4.2L112.5 4.2L114.0 3.9L115.5 4.0L117.0 4.5L118.5 5.4L120.0 6.1L121.0 7.3L121.0 9.7L120.0 10.5L118.5 11.9L117.0 12.5L115.5 12.9L114.0 13.1L112.5 13.0L111.0 12.8L109.5 12.5L108.0 11.9L106.5 12.1L105.0 12.2L103.5 12.4L102.0 12.9L100.5 13.0L99.0 13.5L97.5 13.1L96.0 12.8L94.5 12.2L93.0 11.5L91.5 10.3L90.0 10.5L88.5 11.5L87.0 12.3L85.5 12.8L84.0 13.2L82.5 12.9L81.0 12.5L79.5 12.2L78.0 11.9L76.5 12.0L75.0 11.9L73.5 12.3L72.0 12.6L70.5 12.9L69.0 13.5L67.5 13.1L66.0 12.8L64.5 12.5L63.0 11.7L61.5 10.7L60.0 10.2L58.5 11.6L57.0 12.4L55.5 12.8L54.0 13.0L52.5 12.9L51.0 12.8L49.5 12.3L48.0 12.0L46.5 12.0L45.0 12.2L43.5 12.2L42.0 12.6L40.5 12.9L39.0 13.2L37.5 13.3L36.0 13.1L34.5 12.3L33.0 11.6L31.5 10.7L30.0 10.0L28.5 11.4L27.0 12.1L25.5 12.6L24.0 13.1L22.5 12.8L21.0 12.7L19.5 12.5L18.0 12.0L16.5 12.2L15.0 12.1L13.5 12.1L12.0 12.8L10.5 13.2L9.0 13.1L7.5 13.2L6.0 13.0L4.5 12.7L3.0 11.8L1.5 10.8L0.0 9.3ZM0.0 24.9L1.5 23.4L3.0 22.5L4.5 22.1L6.0 21.3L7.5 21.1L9.0 21.3L10.5 21.3L12.0 21.7L13.5 22.1L15.0 22.3L16.5 22.3L18.0 22.3L19.5 21.9L21.0 21.7L22.5 21.7L24.0 21.5L25.5 21.7L27.0 22.6L28.5 23.2L30.0 24.7L31.5 23.6L33.0 22.8L34.5 21.9L36.0 21.6L37.5 21.0L39.0 21.3L40.5 21.3L42.0 21.8L43.5 22.1L45.0 22.3L46.5 22.6L48.0 22.4L49.5 22.2L51.0 21.9L52.5 21.5L54.0 21.5L55.5 21.7L57.0 22.4L58.5 23.1L60.0 24.2L61.5 24.1L63.0 23.0L64.5 22.0L66.0 21.5L67.5 21.3L69.0 21.2L70.5 21.5L72.0 21.6L73.5 22.1L75.0 22.3L76.5 22.4L78.0 22.6L79.5 22.0L81.0 21.7L82.5 21.5L84.0 21.4L85.5 21.7L87.0 22.3L88.5 23.0L90.0 24.2L91.5 24.0L93.0 23.0L94.5 22.1L96.0 21.6L97.5 21.2L99.0 21.1L100.5 21.5L102.0 21.6L103.5 22.0L105.0 22.4L106.5 22.5L108.0 22.3L109.5 22.3L111.0 21.9L112.5 21.4L114.0 21.5L115.5 21.5L117.0 22.1L118.5 22.9L120.0 23.7L121.0 25.1L121.0 27.2L120.0 28.3L118.5 29.2L117.0 29.7L115.5 30.3L114.0 30.5L112.5 30.6L111.0 30.2L109.5 29.7L108.0 29.6L106.5 29.5L105.0 29.8L103.5 30.1L102.0 30.4L100.5 30.7L99.0 31.0L97.5 30.9L96.0 30.4L94.5 29.6L93.0 29.0L91.5 28.0L90.0 27.8L88.5 29.0L87.0 29.9L85.5 30.5L84.0 30.3L82.5 30.4L81.0 30.1L79.5 29.7L78.0 29.5L76.5 29.3L75.0 29.5L73.5 29.7L72.0 30.3L70.5 30.8L69.0 31.0L67.5 30.9L66.0 30.5L64.5 29.9L63.0 29.1L61.5 28.2L60.0 27.6L58.5 29.0L57.0 29.7L55.5 30.0L54.0 30.7L52.5 30.4L51.0 30.1L49.5 30.1L48.0 29.8L46.5 29.6L45.0 29.4L43.5 29.7L42.0 30.3L40.5 30.6L39.0 30.9L37.5 30.7L36.0 30.5L34.5 29.9L33.0 29.1L31.5 28.1L30.0 27.6L28.5 28.7L27.0 29.5L25.5 30.2L24.0 30.5L22.5 30.3L21.0 30.3L19.5 30.1L18.0 29.6L16.5 29.4L15.0 29.6L13.5 29.9L12.0 30.0L10.5 30.3L9.0 30.6L7.5 31.0L6.0 30.6L4.5 29.9L3.0 29.4L1.5 28.3L0.0 26.8Z"/></defs></svg>
<div class="c" style="left:130px;top:102px;width:460px;height:70px"><div class="a" style="left:0;top:0;width:100%;height:34px;background:#58bdb0;border-top:2px solid #2a6b62;border-bottom:2px solid #2a6b62"></div><div class="a" style="left:0;top:34px;width:100%;height:36px;background:#52adc7"></div><svg width="460" height="36" style="left:0;top:34px"><use href="#gl" x="-118" fill="rgba(20,40,90,.22)"/></svg><svg width="460" height="36" style="left:0;top:34px" fill="#2d6070"><rect x="2" y="2" width="26" height="2"/><rect x="2" y="10" width="26" height="2"/><rect x="2" y="14" width="26" height="2"/><rect x="2" y="18" width="26" height="2"/><rect x="2" y="30" width="26" height="2"/><rect x="30" y="0" width="28" height="2"/><rect x="30" y="26" width="28" height="2"/><rect x="30" y="10" width="28" height="6"/><rect x="60" y="4" width="28" height="2"/><rect x="60" y="8" width="28" height="2"/><rect x="60" y="12" width="28" height="2"/><rect x="60" y="16" width="28" height="2"/><rect x="60" y="22" width="28" height="2"/><rect x="60" y="34" width="28" height="2"/><rect x="90" y="8" width="28" height="2"/><rect x="90" y="12" width="28" height="2"/><rect x="90" y="16" width="28" height="2"/><rect x="90" y="20" width="28" height="2"/><rect x="90" y="32" width="28" height="2"/><rect x="120" y="2" width="28" height="2"/><rect x="120" y="10" width="28" height="2"/><rect x="120" y="14" width="28" height="2"/><rect x="120" y="18" width="28" height="2"/><rect x="120" y="30" width="28" height="2"/><rect x="150" y="0" width="26" height="2"/><rect x="150" y="26" width="26" height="2"/><rect x="150" y="10" width="26" height="6"/><rect x="178" y="4" width="28" height="2"/><rect x="178" y="8" width="28" height="2"/><rect x="178" y="12" width="28" height="2"/><rect x="178" y="16" width="28" height="2"/><rect x="178" y="22" width="28" height="2"/><rect x="178" y="34" width="28" height="2"/><rect x="208" y="8" width="28" height="2"/><rect x="208" y="12" width="28" height="2"/><rect x="208" y="16" width="28" height="2"/><rect x="208" y="20" width="28" height="2"/><rect x="208" y="32" width="28" height="2"/><rect x="238" y="2" width="28" height="2"/><rect x="238" y="10" width="28" height="2"/><rect x="238" y="14" width="28" height="2"/><rect x="238" y="18" width="28" height="2"/><rect x="238" y="30" width="28" height="2"/><rect x="268" y="0" width="28" height="2"/><rect x="268" y="26" width="28" height="2"/><rect x="268" y="10" width="28" height="6"/><rect x="298" y="4" width="28" height="2"/><rect x="298" y="8" width="28" height="2"/><rect x="298" y="12" width="28" height="2"/><rect x="298" y="16" width="28" height="2"/><rect x="298" y="22" width="28" height="2"/><rect x="298" y="34" width="28" height="2"/><rect x="328" y="8" width="28" height="2"/><rect x="328" y="12" width="28" height="2"/><rect x="328" y="16" width="28" height="2"/><rect x="328" y="20" width="28" height="2"/><rect x="328" y="32" width="28" height="2"/><rect x="358" y="2" width="28" height="2"/><rect x="358" y="10" width="28" height="2"/><rect x="358" y="14" width="28" height="2"/><rect x="358" y="18" width="28" height="2"/><rect x="358" y="30" width="28" height="2"/><rect x="388" y="0" width="28" height="2"/><rect x="388" y="26" width="28" height="2"/><rect x="388" y="10" width="28" height="6"/><rect x="418" y="4" width="26" height="2"/><rect x="418" y="8" width="26" height="2"/><rect x="418" y="12" width="26" height="2"/><rect x="418" y="16" width="26" height="2"/><rect x="418" y="22" width="26" height="2"/><rect x="418" y="34" width="26" height="2"/><rect x="446" y="8" width="28" height="2"/><rect x="446" y="12" width="28" height="2"/><rect x="446" y="16" width="28" height="2"/><rect x="446" y="20" width="28" height="2"/><rect x="446" y="32" width="28" height="2"/></svg><div class="n" style="color:#0c2a26"><span style="letter-spacing:1.25px">Piano</span></div><div class="k" style="left:118px;top:2px;height:6px"></div><div class="k" style="left:118px;top:64px;height:6px"></div><div class="k" style="left:238px;top:2px;height:6px"></div><div class="k" style="left:238px;top:64px;height:6px"></div><div class="k" style="left:356px;top:2px;height:6px"></div><div class="k" style="left:356px;top:64px;height:6px"></div><div class="a" style="left:0;top:0;width:2px;height:70px;background:rgba(0,0,0,.38)"></div></div>
<div class="c" style="left:590px;top:102px;width:16px;height:70px"><div class="a" style="left:0;top:0;width:100%;height:23.5px;background:repeating-linear-gradient(135deg,#1b1b1b 0,#1b1b1b 4.75px,transparent 4.75px,transparent 8.485px)"></div><div class="a" style="left:0;top:23.5px;width:100%;height:10.5px;background:repeating-linear-gradient(135deg,#1b1b1b 0,#1b1b1b 4.75px,transparent 4.75px,transparent 8.485px)"></div><div class="a" style="left:0;top:23.5px;width:100%;height:10.5px;background:linear-gradient(rgba(25,30,45,.05),rgba(25,30,45,.5))"></div><div class="a" style="left:0;top:34px;width:100%;height:36px;background:#52adc7"></div><svg width="16" height="36" style="left:0;top:34px"><use href="#gl" x="-578" fill="rgba(20,40,90,.22)"/></svg></div>
<div class="c" style="left:606px;top:102px;width:476px;height:70px"><div class="a" style="left:0;top:0;width:100%;height:34px;background:#58bdb0;border-top:2px solid #2a6b62;border-bottom:2px solid #2a6b62"></div><div class="a" style="left:0;top:34px;width:100%;height:36px;background:#52adc7"></div><svg width="476" height="36" style="left:0;top:34px"><use href="#gl" x="-594" fill="rgba(20,40,90,.22)"/></svg><svg width="476" height="36" style="left:0;top:34px" fill="#2d6070"><rect x="2" y="2" width="26" height="2"/><rect x="2" y="10" width="26" height="2"/><rect x="2" y="14" width="26" height="2"/><rect x="2" y="18" width="26" height="2"/><rect x="2" y="30" width="26" height="2"/><rect x="30" y="0" width="28" height="2"/><rect x="30" y="26" width="28" height="2"/><rect x="30" y="10" width="28" height="6"/><rect x="60" y="4" width="28" height="2"/><rect x="60" y="8" width="28" height="2"/><rect x="60" y="12" width="28" height="2"/><rect x="60" y="16" width="28" height="2"/><rect x="60" y="22" width="28" height="2"/><rect x="60" y="34" width="28" height="2"/><rect x="90" y="8" width="28" height="2"/><rect x="90" y="12" width="28" height="2"/><rect x="90" y="16" width="28" height="2"/><rect x="90" y="20" width="28" height="2"/><rect x="90" y="32" width="28" height="2"/><rect x="120" y="2" width="28" height="2"/><rect x="120" y="10" width="28" height="2"/><rect x="120" y="14" width="28" height="2"/><rect x="120" y="18" width="28" height="2"/><rect x="120" y="30" width="28" height="2"/><rect x="150" y="0" width="28" height="2"/><rect x="150" y="26" width="28" height="2"/><rect x="150" y="10" width="28" height="6"/><rect x="180" y="4" width="26" height="2"/><rect x="180" y="8" width="26" height="2"/><rect x="180" y="12" width="26" height="2"/><rect x="180" y="16" width="26" height="2"/><rect x="180" y="22" width="26" height="2"/><rect x="180" y="34" width="26" height="2"/><rect x="208" y="8" width="28" height="2"/><rect x="208" y="12" width="28" height="2"/><rect x="208" y="16" width="28" height="2"/><rect x="208" y="20" width="28" height="2"/><rect x="208" y="32" width="28" height="2"/><rect x="238" y="2" width="28" height="2"/><rect x="238" y="10" width="28" height="2"/><rect x="238" y="14" width="28" height="2"/><rect x="238" y="18" width="28" height="2"/><rect x="238" y="30" width="28" height="2"/><rect x="268" y="0" width="28" height="2"/><rect x="268" y="26" width="28" height="2"/><rect x="268" y="10" width="28" height="6"/><rect x="298" y="4" width="28" height="2"/><rect x="298" y="8" width="28" height="2"/><rect x="298" y="12" width="28" height="2"/><rect x="298" y="16" width="28" height="2"/><rect x="298" y="22" width="28" height="2"/><rect x="298" y="34" width="28" height="2"/><rect x="328" y="8" width="28" height="2"/><rect x="328" y="12" width="28" height="2"/><rect x="328" y="16" width="28" height="2"/><rect x="328" y="20" width="28" height="2"/><rect x="328" y="32" width="28" height="2"/><rect x="358" y="2" width="28" height="2"/><rect x="358" y="10" width="28" height="2"/><rect x="358" y="14" width="28" height="2"/><rect x="358" y="18" width="28" height="2"/><rect x="358" y="30" width="28" height="2"/><rect x="388" y="0" width="28" height="2"/><rect x="388" y="26" width="28" height="2"/><rect x="388" y="10" width="28" height="6"/><rect x="418" y="4" width="26" height="2"/><rect x="418" y="8" width="26" height="2"/><rect x="418" y="12" width="26" height="2"/><rect x="418" y="16" width="26" height="2"/><rect x="418" y="22" width="26" height="2"/><rect x="418" y="34" width="26" height="2"/><rect x="446" y="8" width="28" height="2"/><rect x="446" y="12" width="28" height="2"/><rect x="446" y="16" width="28" height="2"/><rect x="446" y="20" width="28" height="2"/><rect x="446" y="32" width="28" height="2"/></svg><div class="n" style="color:#0c2a26"><span style="letter-spacing:1.25px">Piano</span></div><div class="k" style="left:118px;top:2px;height:6px"></div><div class="k" style="left:118px;top:64px;height:6px"></div><div class="k" style="left:238px;top:2px;height:6px"></div><div class="k" style="left:238px;top:64px;height:6px"></div><div class="k" style="left:356px;top:2px;height:6px"></div><div class="k" style="left:356px;top:64px;height:6px"></div><div class="a" style="left:0;top:0;width:2px;height:70px;background:rgba(0,0,0,.38)"></div></div>
<div class="c" style="left:1082px;top:102px;width:56px;height:70px"><div class="a" style="left:0;top:0;width:100%;height:23.5px;background:repeating-linear-gradient(135deg,#1b1b1b 0,#1b1b1b 4.75px,transparent 4.75px,transparent 8.485px)"></div><div class="a" style="left:0;top:23.5px;width:100%;height:10.5px;background:repeating-linear-gradient(135deg,#1b1b1b 0,#1b1b1b 4.75px,transparent 4.75px,transparent 8.485px)"></div><div class="a" style="left:0;top:23.5px;width:100%;height:10.5px;background:linear-gradient(rgba(25,30,45,.05),rgba(25,30,45,.5))"></div><div class="a" style="left:0;top:34px;width:100%;height:36px;background:#52adc7"></div><svg width="56" height="36" style="left:0;top:34px"><use href="#gl" x="-1070" fill="rgba(20,40,90,.22)"/></svg></div>
<div class="c" style="left:1320px;top:102px;width:224px;height:70px"><div class="a" style="left:0;top:0;width:100%;height:34px;background:#58bdb0;border-top:2px solid #2a6b62;border-bottom:2px solid #2a6b62"></div><div class="a" style="left:0;top:34px;width:100%;height:36px;background:#52adc7"></div><svg width="224" height="36" style="left:0;top:34px"><use href="#gl" x="-1308" fill="rgba(20,40,90,.22)"/></svg><svg width="224" height="36" style="left:0;top:34px" fill="#2d6070"><rect x="2" y="2" width="26" height="2"/><rect x="2" y="10" width="26" height="2"/><rect x="2" y="14" width="26" height="2"/><rect x="2" y="18" width="26" height="2"/><rect x="2" y="30" width="26" height="2"/><rect x="30" y="0" width="28" height="2"/><rect x="30" y="26" width="28" height="2"/><rect x="30" y="10" width="28" height="6"/><rect x="60" y="4" width="28" height="2"/><rect x="60" y="8" width="28" height="2"/><rect x="60" y="12" width="28" height="2"/><rect x="60" y="16" width="28" height="2"/><rect x="60" y="22" width="28" height="2"/><rect x="60" y="34" width="28" height="2"/><rect x="90" y="8" width="28" height="2"/><rect x="90" y="12" width="28" height="2"/><rect x="90" y="16" width="28" height="2"/><rect x="90" y="20" width="28" height="2"/><rect x="90" y="32" width="28" height="2"/><rect x="120" y="2" width="28" height="2"/><rect x="120" y="10" width="28" height="2"/><rect x="120" y="14" width="28" height="2"/><rect x="120" y="18" width="28" height="2"/><rect x="120" y="30" width="28" height="2"/><rect x="150" y="0" width="28" height="2"/><rect x="150" y="26" width="28" height="2"/><rect x="150" y="10" width="28" height="6"/><rect x="180" y="4" width="28" height="2"/><rect x="180" y="8" width="28" height="2"/><rect x="180" y="12" width="28" height="2"/><rect x="180" y="16" width="28" height="2"/><rect x="180" y="22" width="28" height="2"/><rect x="180" y="34" width="28" height="2"/><rect x="210" y="8" width="26" height="2"/><rect x="210" y="12" width="26" height="2"/><rect x="210" y="16" width="26" height="2"/><rect x="210" y="20" width="26" height="2"/><rect x="210" y="32" width="26" height="2"/></svg><div class="n" style="color:#0c2a26"><span style="letter-spacing:1.25px">Piano</span></div><div class="k" style="left:118px;top:2px;height:6px"></div><div class="k" style="left:118px;top:64px;height:6px"></div><div class="a" style="left:0;top:0;width:2px;height:70px;background:rgba(0,0,0,.38)"></div></div>
<div class="c" style="left:1544px;top:102px;width:14px;height:70px"><div class="a" style="left:0;top:0;width:100%;height:23.5px;background:repeating-linear-gradient(135deg,#1b1b1b 0,#1b1b1b 4.75px,transparent 4.75px,transparent 8.485px)"></div><div class="a" style="left:0;top:23.5px;width:100%;height:10.5px;background:repeating-linear-gradient(135deg,#1b1b1b 0,#1b1b1b 4.75px,transparent 4.75px,transparent 8.485px)"></div><div class="a" style="left:0;top:23.5px;width:100%;height:10.5px;background:linear-gradient(rgba(25,30,45,.05),rgba(25,30,45,.5))"></div><div class="a" style="left:0;top:34px;width:100%;height:36px;background:#52adc7"></div><svg width="14" height="36" style="left:0;top:34px"><use href="#gl" x="-1532" fill="rgba(20,40,90,.22)"/></svg></div>
<div class="c" style="left:1558px;top:102px;width:476px;height:70px"><div class="a" style="left:0;top:0;width:100%;height:34px;background:#58bdb0;border-top:2px solid #2a6b62;border-bottom:2px solid #2a6b62"></div><div class="a" style="left:0;top:34px;width:100%;height:36px;background:#52adc7"></div><svg width="476" height="36" style="left:0;top:34px"><use href="#gl" x="-1546" fill="rgba(20,40,90,.22)"/></svg><svg width="476" height="36" style="left:0;top:34px" fill="#2d6070"><rect x="2" y="2" width="26" height="2"/><rect x="2" y="10" width="26" height="2"/><rect x="2" y="14" width="26" height="2"/><rect x="2" y="18" width="26" height="2"/><rect x="2" y="30" width="26" height="2"/><rect x="30" y="0" width="28" height="2"/><rect x="30" y="26" width="28" height="2"/><rect x="30" y="10" width="28" height="6"/><rect x="60" y="4" width="28" height="2"/><rect x="60" y="8" width="28" height="2"/><rect x="60" y="12" width="28" height="2"/><rect x="60" y="16" width="28" height="2"/><rect x="60" y="22" width="28" height="2"/><rect x="60" y="34" width="28" height="2"/><rect x="90" y="8" width="28" height="2"/><rect x="90" y="12" width="28" height="2"/><rect x="90" y="16" width="28" height="2"/><rect x="90" y="20" width="28" height="2"/><rect x="90" y="32" width="28" height="2"/><rect x="120" y="2" width="28" height="2"/><rect x="120" y="10" width="28" height="2"/><rect x="120" y="14" width="28" height="2"/><rect x="120" y="18" width="28" height="2"/><rect x="120" y="30" width="28" height="2"/><rect x="150" y="0" width="28" height="2"/><rect x="150" y="26" width="28" height="2"/><rect x="150" y="10" width="28" height="6"/><rect x="180" y="4" width="28" height="2"/><rect x="180" y="8" width="28" height="2"/><rect x="180" y="12" width="28" height="2"/><rect x="180" y="16" width="28" height="2"/><rect x="180" y="22" width="28" height="2"/><rect x="180" y="34" width="28" height="2"/><rect x="210" y="8" width="26" height="2"/><rect x="210" y="12" width="26" height="2"/><rect x="210" y="16" width="26" height="2"/><rect x="210" y="20" width="26" height="2"/><rect x="210" y="32" width="26" height="2"/><rect x="238" y="2" width="28" height="2"/><rect x="238" y="10" width="28" height="2"/><rect x="238" y="14" width="28" height="2"/><rect x="238" y="18" width="28" height="2"/><rect x="238" y="30" width="28" height="2"/><rect x="268" y="0" width="28" height="2"/><rect x="268" y="26" width="28" height="2"/><rect x="268" y="10" width="28" height="6"/><rect x="298" y="4" width="28" height="2"/><rect x="298" y="8" width="28" height="2"/><rect x="298" y="12" width="28" height="2"/><rect x="298" y="16" width="28" height="2"/><rect x="298" y="22" width="28" height="2"/><rect x="298" y="34" width="28" height="2"/><rect x="328" y="8" width="28" height="2"/><rect x="328" y="12" width="28" height="2"/><rect x="328" y="16" width="28" height="2"/><rect x="328" y="20" width="28" height="2"/><rect x="328" y="32" width="28" height="2"/><rect x="358" y="2" width="28" height="2"/><rect x="358" y="10" width="28" height="2"/><rect x="358" y="14" width="28" height="2"/><rect x="358" y="18" width="28" height="2"/><rect x="358" y="30" width="28" height="2"/><rect x="388" y="0" width="28" height="2"/><rect x="388" y="26" width="28" height="2"/><rect x="388" y="10" width="28" height="6"/><rect x="418" y="4" width="28" height="2"/><rect x="418" y="8" width="28" height="2"/><rect x="418" y="12" width="28" height="2"/><rect x="418" y="16" width="28" height="2"/><rect x="418" y="22" width="28" height="2"/><rect x="418" y="34" width="28" height="2"/><rect x="448" y="8" width="28" height="2"/><rect x="448" y="12" width="28" height="2"/><rect x="448" y="16" width="28" height="2"/><rect x="448" y="20" width="28" height="2"/><rect x="448" y="32" width="28" height="2"/></svg><div class="n" style="color:#0c2a26"><span style="letter-spacing:1.25px">Piano</span></div><div class="k" style="left:118px;top:2px;height:6px"></div><div class="k" style="left:118px;top:64px;height:6px"></div><div class="k" style="left:238px;top:2px;height:6px"></div><div class="k" style="left:238px;top:64px;height:6px"></div><div class="k" style="left:358px;top:2px;height:6px"></div><div class="k" style="left:358px;top:64px;height:6px"></div><div class="a" style="left:0;top:0;width:2px;height:70px;background:rgba(0,0,0,.38)"></div></div>
<div class="c" style="left:2034px;top:102px;width:56px;height:70px"><div class="a" style="left:0;top:0;width:100%;height:23.5px;background:repeating-linear-gradient(135deg,#1b1b1b 0,#1b1b1b 4.75px,transparent 4.75px,transparent 8.485px)"></div><div class="a" style="left:0;top:23.5px;width:100%;height:10.5px;background:repeating-linear-gradient(135deg,#1b1b1b 0,#1b1b1b 4.75px,transparent 4.75px,transparent 8.485px)"></div><div class="a" style="left:0;top:23.5px;width:100%;height:10.5px;background:linear-gradient(rgba(25,30,45,.05),rgba(25,30,45,.5))"></div><div class="a" style="left:0;top:34px;width:100%;height:36px;background:#52adc7"></div><svg width="56" height="36" style="left:0;top:34px"><use href="#gl" x="-2022" fill="rgba(20,40,90,.22)"/></svg></div>
<div class="c" style="left:1082px;top:176px;width:462px;height:70px"><div class="a" style="left:0;top:0;width:100%;height:34px;background:#58bdb0;border-top:2px solid #2a6b62;border-bottom:2px solid #2a6b62"></div><div class="a" style="left:0;top:34px;width:100%;height:36px;background:#52adc7"></div><svg width="462" height="36" style="left:0;top:34px"><use href="#gl" x="-1070" fill="rgba(20,40,90,.22)"/></svg><svg width="462" height="36" style="left:0;top:34px" fill="#2d6070"><rect x="2" y="2" width="26" height="2"/><rect x="2" y="10" width="26" height="2"/><rect x="2" y="14" width="26" height="2"/><rect x="2" y="18" width="26" height="2"/><rect x="2" y="30" width="26" height="2"/><rect x="30" y="0" width="28" height="2"/><rect x="30" y="26" width="28" height="2"/><rect x="30" y="10" width="28" height="6"/><rect x="60" y="4" width="28" height="2"/><rect x="60" y="8" width="28" height="2"/><rect x="60" y="12" width="28" height="2"/><rect x="60" y="16" width="28" height="2"/><rect x="60" y="22" width="28" height="2"/><rect x="60" y="34" width="28" height="2"/><rect x="90" y="8" width="28" height="2"/><rect x="90" y="12" width="28" height="2"/><rect x="90" y="16" width="28" height="2"/><rect x="90" y="20" width="28" height="2"/><rect x="90" y="32" width="28" height="2"/><rect x="120" y="2" width="28" height="2"/><rect x="120" y="10" width="28" height="2"/><rect x="120" y="14" width="28" height="2"/><rect x="120" y="18" width="28" height="2"/><rect x="120" y="30" width="28" height="2"/><rect x="150" y="0" width="28" height="2"/><rect x="150" y="26" width="28" height="2"/><rect x="150" y="10" width="28" height="6"/><rect x="180" y="4" width="28" height="2"/><rect x="180" y="8" width="28" height="2"/><rect x="180" y="12" width="28" height="2"/><rect x="180" y="16" width="28" height="2"/><rect x="180" y="22" width="28" height="2"/><rect x="180" y="34" width="28" height="2"/><rect x="210" y="8" width="26" height="2"/><rect x="210" y="12" width="26" height="2"/><rect x="210" y="16" width="26" height="2"/><rect x="210" y="20" width="26" height="2"/><rect x="210" y="32" width="26" height="2"/><rect x="238" y="2" width="28" height="2"/><rect x="238" y="10" width="28" height="2"/><rect x="238" y="14" width="28" height="2"/><rect x="238" y="18" width="28" height="2"/><rect x="238" y="30" width="28" height="2"/><rect x="268" y="0" width="28" height="2"/><rect x="268" y="26" width="28" height="2"/><rect x="268" y="10" width="28" height="6"/><rect x="298" y="4" width="28" height="2"/><rect x="298" y="8" width="28" height="2"/><rect x="298" y="12" width="28" height="2"/><rect x="298" y="16" width="28" height="2"/><rect x="298" y="22" width="28" height="2"/><rect x="298" y="34" width="28" height="2"/><rect x="328" y="8" width="28" height="2"/><rect x="328" y="12" width="28" height="2"/><rect x="328" y="16" width="28" height="2"/><rect x="328" y="20" width="28" height="2"/><rect x="328" y="32" width="28" height="2"/><rect x="358" y="2" width="28" height="2"/><rect x="358" y="10" width="28" height="2"/><rect x="358" y="14" width="28" height="2"/><rect x="358" y="18" width="28" height="2"/><rect x="358" y="30" width="28" height="2"/><rect x="388" y="0" width="28" height="2"/><rect x="388" y="26" width="28" height="2"/><rect x="388" y="10" width="28" height="6"/><rect x="418" y="4" width="28" height="2"/><rect x="418" y="8" width="28" height="2"/><rect x="418" y="12" width="28" height="2"/><rect x="418" y="16" width="28" height="2"/><rect x="418" y="22" width="28" height="2"/><rect x="418" y="34" width="28" height="2"/><rect x="448" y="8" width="26" height="2"/><rect x="448" y="12" width="26" height="2"/><rect x="448" y="16" width="26" height="2"/><rect x="448" y="20" width="26" height="2"/><rect x="448" y="32" width="26" height="2"/></svg><div class="n" style="color:#0c2a26"><span style="letter-spacing:1.4px">Synth Chord</span></div><div class="k" style="left:118px;top:2px;height:6px"></div><div class="k" style="left:118px;top:64px;height:6px"></div><div class="k" style="left:238px;top:2px;height:6px"></div><div class="k" style="left:238px;top:64px;height:6px"></div><div class="k" style="left:356px;top:2px;height:6px"></div><div class="k" style="left:356px;top:64px;height:6px"></div><div class="a" style="left:0;top:0;width:2px;height:70px;background:rgba(0,0,0,.38)"></div></div>
<div class="c" style="left:1544px;top:176px;width:52px;height:70px"><div class="a" style="left:0;top:0;width:100%;height:23.5px;background:repeating-linear-gradient(135deg,#1b1b1b 0,#1b1b1b 4.75px,transparent 4.75px,transparent 8.485px)"></div><div class="a" style="left:0;top:23.5px;width:100%;height:10.5px;background:repeating-linear-gradient(135deg,#1b1b1b 0,#1b1b1b 4.75px,transparent 4.75px,transparent 8.485px)"></div><div class="a" style="left:0;top:23.5px;width:100%;height:10.5px;background:linear-gradient(rgba(25,30,45,.05),rgba(25,30,45,.5))"></div><div class="a" style="left:0;top:34px;width:100%;height:36px;background:#52adc7"></div><svg width="52" height="36" style="left:0;top:34px"><use href="#gl" x="-1532" fill="rgba(20,40,90,.22)"/></svg></div>
<div class="c" style="left:130px;top:250px;width:460px;height:70px"><div class="a" style="left:0;top:0;width:100%;height:34px;background:#58bdb0;border-top:2px solid #2a6b62;border-bottom:2px solid #2a6b62"></div><div class="a" style="left:0;top:34px;width:100%;height:36px;background:#52adc7"></div><svg width="460" height="36" style="left:0;top:34px"><use href="#gl" x="-118" fill="rgba(20,40,90,.22)"/></svg><svg width="460" height="36" style="left:0;top:34px" fill="#17201f"><rect x="2" y="12" width="26" height="4"/><rect x="30" y="0" width="28" height="4"/><rect x="60" y="32" width="28" height="4"/><rect x="90" y="20" width="28" height="4"/><rect x="120" y="12" width="28" height="4"/><rect x="150" y="0" width="26" height="4"/><rect x="178" y="32" width="28" height="4"/><rect x="208" y="20" width="28" height="4"/><rect x="238" y="12" width="28" height="4"/><rect x="268" y="0" width="28" height="4"/><rect x="298" y="32" width="28" height="4"/><rect x="328" y="20" width="28" height="4"/><rect x="358" y="12" width="28" height="4"/><rect x="388" y="0" width="28" height="4"/><rect x="418" y="32" width="26" height="4"/><rect x="446" y="20" width="28" height="4"/></svg><div class="n" style="color:#0c2a26"><span style="letter-spacing:0.65px">Reese bass</span></div><div class="k" style="left:118px;top:2px;height:6px"></div><div class="k" style="left:118px;top:64px;height:6px"></div><div class="k" style="left:238px;top:2px;height:6px"></div><div class="k" style="left:238px;top:64px;height:6px"></div><div class="k" style="left:356px;top:2px;height:6px"></div><div class="k" style="left:356px;top:64px;height:6px"></div><div class="a" style="left:0;top:0;width:2px;height:70px;background:rgba(0,0,0,.38)"></div></div>
<div class="c" style="left:590px;top:250px;width:4px;height:70px"><div class="a" style="left:0;top:0;width:100%;height:23.5px;background:repeating-linear-gradient(135deg,#1b1b1b 0,#1b1b1b 4.75px,transparent 4.75px,transparent 8.485px)"></div><div class="a" style="left:0;top:23.5px;width:100%;height:10.5px;background:repeating-linear-gradient(135deg,#1b1b1b 0,#1b1b1b 4.75px,transparent 4.75px,transparent 8.485px)"></div><div class="a" style="left:0;top:23.5px;width:100%;height:10.5px;background:linear-gradient(rgba(25,30,45,.05),rgba(25,30,45,.5))"></div><div class="a" style="left:0;top:34px;width:100%;height:36px;background:#52adc7"></div><svg width="4" height="36" style="left:0;top:34px"><use href="#gl" x="-578" fill="rgba(20,40,90,.22)"/></svg></div>
<div class="c" style="left:606px;top:250px;width:476px;height:70px"><div class="a" style="left:0;top:0;width:100%;height:34px;background:#58bdb0;border-top:2px solid #2a6b62;border-bottom:2px solid #2a6b62"></div><div class="a" style="left:0;top:34px;width:100%;height:36px;background:#52adc7"></div><svg width="476" height="36" style="left:0;top:34px"><use href="#gl" x="-594" fill="rgba(20,40,90,.22)"/></svg><svg width="476" height="36" style="left:0;top:34px" fill="#17201f"><rect x="2" y="12" width="26" height="4"/><rect x="30" y="0" width="28" height="4"/><rect x="60" y="32" width="28" height="4"/><rect x="90" y="20" width="28" height="4"/><rect x="120" y="12" width="28" height="4"/><rect x="150" y="0" width="28" height="4"/><rect x="180" y="32" width="26" height="4"/><rect x="208" y="20" width="28" height="4"/><rect x="238" y="12" width="28" height="4"/><rect x="268" y="0" width="28" height="4"/><rect x="298" y="32" width="28" height="4"/><rect x="328" y="20" width="28" height="4"/><rect x="358" y="12" width="28" height="4"/><rect x="388" y="0" width="28" height="4"/><rect x="418" y="32" width="26" height="4"/><rect x="446" y="20" width="28" height="4"/></svg><div class="n" style="color:#0c2a26"><span style="letter-spacing:0.65px">Reese bass</span></div><div class="k" style="left:118px;top:2px;height:6px"></div><div class="k" style="left:118px;top:64px;height:6px"></div><div class="k" style="left:238px;top:2px;height:6px"></div><div class="k" style="left:238px;top:64px;height:6px"></div><div class="k" style="left:356px;top:2px;height:6px"></div><div class="k" style="left:356px;top:64px;height:6px"></div><div class="a" style="left:0;top:0;width:2px;height:70px;background:rgba(0,0,0,.38)"></div></div>
<div class="c" style="left:1082px;top:250px;width:462px;height:70px"><div class="a" style="left:0;top:0;width:100%;height:34px;background:#58bdb0;border-top:2px solid #2a6b62;border-bottom:2px solid #2a6b62"></div><div class="a" style="left:0;top:34px;width:100%;height:36px;background:#52adc7"></div><svg width="462" height="36" style="left:0;top:34px"><use href="#gl" x="-1070" fill="rgba(20,40,90,.22)"/></svg><svg width="462" height="36" style="left:0;top:34px" fill="#17201f"><rect x="2" y="12" width="26" height="4"/><rect x="30" y="0" width="28" height="4"/><rect x="60" y="32" width="28" height="4"/><rect x="90" y="20" width="28" height="4"/><rect x="120" y="12" width="28" height="4"/><rect x="150" y="0" width="28" height="4"/><rect x="180" y="32" width="28" height="4"/><rect x="210" y="20" width="26" height="4"/><rect x="238" y="12" width="28" height="4"/><rect x="268" y="0" width="28" height="4"/><rect x="298" y="32" width="28" height="4"/><rect x="328" y="20" width="28" height="4"/><rect x="358" y="12" width="28" height="4"/><rect x="388" y="0" width="28" height="4"/><rect x="418" y="32" width="28" height="4"/><rect x="448" y="20" width="26" height="4"/></svg><div class="n" style="color:#0c2a26"><span style="letter-spacing:0.65px">Reese bass</span></div><div class="k" style="left:118px;top:2px;height:6px"></div><div class="k" style="left:118px;top:64px;height:6px"></div><div class="k" style="left:238px;top:2px;height:6px"></div><div class="k" style="left:238px;top:64px;height:6px"></div><div class="k" style="left:356px;top:2px;height:6px"></div><div class="k" style="left:356px;top:64px;height:6px"></div><div class="a" style="left:0;top:0;width:2px;height:70px;background:rgba(0,0,0,.38)"></div></div>
<div class="c" style="left:1544px;top:250px;width:2px;height:70px"><div class="a" style="left:0;top:0;width:100%;height:23.5px;background:repeating-linear-gradient(135deg,#1b1b1b 0,#1b1b1b 4.75px,transparent 4.75px,transparent 8.485px)"></div><div class="a" style="left:0;top:23.5px;width:100%;height:10.5px;background:repeating-linear-gradient(135deg,#1b1b1b 0,#1b1b1b 4.75px,transparent 4.75px,transparent 8.485px)"></div><div class="a" style="left:0;top:23.5px;width:100%;height:10.5px;background:linear-gradient(rgba(25,30,45,.05),rgba(25,30,45,.5))"></div><div class="a" style="left:0;top:34px;width:100%;height:36px;background:#52adc7"></div><svg width="2" height="36" style="left:0;top:34px"><use href="#gl" x="-1532" fill="rgba(20,40,90,.22)"/></svg></div>
<div class="c" style="left:1558px;top:250px;width:476px;height:70px"><div class="a" style="left:0;top:0;width:100%;height:34px;background:#58bdb0;border-top:2px solid #2a6b62;border-bottom:2px solid #2a6b62"></div><div class="a" style="left:0;top:34px;width:100%;height:36px;background:#52adc7"></div><svg width="476" height="36" style="left:0;top:34px"><use href="#gl" x="-1546" fill="rgba(20,40,90,.22)"/></svg><svg width="476" height="36" style="left:0;top:34px" fill="#17201f"><rect x="2" y="12" width="26" height="4"/><rect x="30" y="0" width="28" height="4"/><rect x="60" y="32" width="28" height="4"/><rect x="90" y="20" width="28" height="4"/><rect x="120" y="12" width="28" height="4"/><rect x="150" y="0" width="28" height="4"/><rect x="180" y="32" width="28" height="4"/><rect x="210" y="20" width="26" height="4"/><rect x="238" y="12" width="28" height="4"/><rect x="268" y="0" width="28" height="4"/><rect x="298" y="32" width="28" height="4"/><rect x="328" y="20" width="28" height="4"/><rect x="358" y="12" width="28" height="4"/><rect x="388" y="0" width="28" height="4"/><rect x="418" y="32" width="28" height="4"/><rect x="448" y="20" width="28" height="4"/></svg><div class="n" style="color:#0c2a26"><span style="letter-spacing:0.65px">Reese bass</span></div><div class="k" style="left:118px;top:2px;height:6px"></div><div class="k" style="left:118px;top:64px;height:6px"></div><div class="k" style="left:238px;top:2px;height:6px"></div><div class="k" style="left:238px;top:64px;height:6px"></div><div class="k" style="left:358px;top:2px;height:6px"></div><div class="k" style="left:358px;top:64px;height:6px"></div><div class="a" style="left:0;top:0;width:2px;height:70px;background:rgba(0,0,0,.38)"></div></div>
<div class="c" style="left:2034px;top:250px;width:238px;height:70px"><div class="a" style="left:0;top:0;width:100%;height:34px;background:#58bdb0;border-top:2px solid #2a6b62;border-bottom:2px solid #2a6b62"></div><div class="a" style="left:0;top:34px;width:100%;height:36px;background:#52adc7"></div><svg width="238" height="36" style="left:0;top:34px"><use href="#gl" x="-2022" fill="rgba(20,40,90,.22)"/></svg><svg width="238" height="36" style="left:0;top:34px" fill="#17201f"><rect x="2" y="12" width="26" height="4"/><rect x="30" y="0" width="28" height="4"/><rect x="60" y="32" width="28" height="4"/><rect x="90" y="20" width="28" height="4"/><rect x="120" y="12" width="28" height="4"/><rect x="150" y="0" width="28" height="4"/><rect x="180" y="32" width="28" height="4"/><rect x="210" y="20" width="28" height="4"/></svg><div class="n" style="color:#0c2a26"><span style="letter-spacing:0.65px">Reese bass</span></div><div class="k" style="left:120px;top:2px;height:6px"></div><div class="k" style="left:120px;top:64px;height:6px"></div><div class="a" style="left:0;top:0;width:2px;height:70px;background:rgba(0,0,0,.38)"></div></div>
<div class="c" style="left:2272px;top:250px;width:4px;height:70px"><div class="a" style="left:0;top:0;width:100%;height:23.5px;background:repeating-linear-gradient(135deg,#1b1b1b 0,#1b1b1b 4.75px,transparent 4.75px,transparent 8.485px)"></div><div class="a" style="left:0;top:23.5px;width:100%;height:10.5px;background:repeating-linear-gradient(135deg,#1b1b1b 0,#1b1b1b 4.75px,transparent 4.75px,transparent 8.485px)"></div><div class="a" style="left:0;top:23.5px;width:100%;height:10.5px;background:linear-gradient(rgba(25,30,45,.05),rgba(25,30,45,.5))"></div><div class="a" style="left:0;top:34px;width:100%;height:36px;background:#52adc7"></div><svg width="4" height="36" style="left:0;top:34px"><use href="#gl" x="-2260" fill="rgba(20,40,90,.22)"/></svg></div>
<div class="c" style="left:130px;top:324px;width:952px;height:70px"><div class="a" style="left:0;top:0;width:100%;height:34px;background:#377cc0;border-top:2px solid #1b456e;border-bottom:2px solid #1b456e"></div><div class="a" style="left:0;top:34px;width:100%;height:36px;background:#4085ce"></div><svg width="952" height="36" style="left:0;top:34px"><use href="#gl" x="-118" fill="rgba(20,40,90,.22)"/></svg><svg width="952.0" height="36" style="left:0;top:34px"><rect x="0.0" y="28.0" width="6.0" height="2.0" fill="#0d0d10"/><use href="#bsA" x="118.00"/><use href="#bsB" x="238.00"/><use href="#bsA" x="356.00"/><use href="#bsB" x="476.00"/><use href="#bsA" x="594.00"/><use href="#bsB" x="714.00"/><use href="#bsA" x="832.00"/><use href="#bsB" x="952.00"/></svg><div class="a" style="left:713.0px;top:0;width:2px;height:34px;background:#17375c"></div><div class="a" style="left:0;top:0;width:2px;height:70px;background:rgba(0,0,0,.38)"></div></div>
<div class="c" style="left:1082px;top:324px;width:6px;height:70px"><div class="a" style="left:0;top:0;width:100%;height:23.5px;background:repeating-linear-gradient(135deg,#1b1b1b 0,#1b1b1b 4.75px,transparent 4.75px,transparent 8.485px)"></div><div class="a" style="left:0;top:23.5px;width:100%;height:10.5px;background:repeating-linear-gradient(135deg,#1b1b1b 0,#1b1b1b 4.75px,transparent 4.75px,transparent 8.485px)"></div><div class="a" style="left:0;top:23.5px;width:100%;height:10.5px;background:linear-gradient(rgba(25,30,45,.05),rgba(25,30,45,.5))"></div><div class="a" style="left:0;top:34px;width:100%;height:36px;background:#4085ce"></div><svg width="6" height="36" style="left:0;top:34px"><use href="#gl" x="-1070" fill="rgba(20,40,90,.22)"/></svg></div>
<div class="c" style="left:1544px;top:324px;width:490px;height:70px"><div class="a" style="left:0;top:0;width:100%;height:34px;background:#377cc0;border-top:2px solid #1b456e;border-bottom:2px solid #1b456e"></div><div class="a" style="left:0;top:34px;width:100%;height:36px;background:#4085ce"></div><svg width="490" height="36" style="left:0;top:34px"><use href="#gl" x="-1532" fill="rgba(20,40,90,.22)"/></svg><svg width="490.0" height="36" style="left:0;top:34px"><rect x="0.0" y="28.0" width="6.0" height="2.0" fill="#0d0d10"/><use href="#bsB" x="14.00"/><use href="#bsA" x="132.00"/><use href="#bsB" x="252.00"/><use href="#bsA" x="372.00"/><use href="#bsB" x="490.00"/></svg><div class="a" style="left:0;top:0;width:2px;height:70px;background:rgba(0,0,0,.38)"></div></div>
<div class="c" style="left:2034px;top:324px;width:6px;height:70px"><div class="a" style="left:0;top:0;width:100%;height:23.5px;background:repeating-linear-gradient(135deg,#1b1b1b 0,#1b1b1b 4.75px,transparent 4.75px,transparent 8.485px)"></div><div class="a" style="left:0;top:23.5px;width:100%;height:10.5px;background:repeating-linear-gradient(135deg,#1b1b1b 0,#1b1b1b 4.75px,transparent 4.75px,transparent 8.485px)"></div><div class="a" style="left:0;top:23.5px;width:100%;height:10.5px;background:linear-gradient(rgba(25,30,45,.05),rgba(25,30,45,.5))"></div><div class="a" style="left:0;top:34px;width:100%;height:36px;background:#4085ce"></div><svg width="6" height="36" style="left:0;top:34px"><use href="#gl" x="-2022" fill="rgba(20,40,90,.22)"/></svg></div>
<div class="c" style="left:248px;top:398px;width:120px;height:34px;background:#58bdb0;border-top:2px solid #2a6b62;border-bottom:2px solid #2a6b62"><div class="a" style="left:0;top:-2px;width:100%;height:34px"><div class="n" style="color:#0c2a26"><span style="letter-spacing:1.25px">(Freeze)</span></div><div class="k" style="left:30px;top:2px;height:6px"></div><div class="k" style="left:30px;top:26px;height:6px"></div><div class="k" style="left:60px;top:2px;height:6px"></div><div class="k" style="left:60px;top:26px;height:6px"></div><div class="k" style="left:90px;top:2px;height:6px"></div><div class="k" style="left:90px;top:26px;height:6px"></div><div class="a" style="left:0;top:0;width:2px;height:34px;background:rgba(0,0,0,.38)"></div></div></div>
<div class="c" style="left:368px;top:398px;width:208px;height:34px;background:#58bdb0;border-top:2px solid #2a6b62;border-bottom:2px solid #2a6b62"><div class="a" style="left:0;top:-2px;width:100%;height:34px"><div class="n" style="color:#0c2a26"><span style="letter-spacing:1.25px">(Freeze)</span></div><div class="k" style="left:30px;top:2px;height:6px"></div><div class="k" style="left:30px;top:26px;height:6px"></div><div class="k" style="left:60px;top:2px;height:6px"></div><div class="k" style="left:60px;top:26px;height:6px"></div><div class="k" style="left:88px;top:2px;height:6px"></div><div class="k" style="left:88px;top:26px;height:6px"></div><div class="k" style="left:118px;top:2px;height:6px"></div><div class="k" style="left:118px;top:26px;height:6px"></div><div class="k" style="left:148px;top:2px;height:6px"></div><div class="k" style="left:148px;top:26px;height:6px"></div><div class="k" style="left:178px;top:2px;height:6px"></div><div class="k" style="left:178px;top:26px;height:6px"></div><div class="a" style="left:0;top:0;width:2px;height:34px;background:rgba(0,0,0,.38)"></div></div></div>
<div class="c" style="left:576px;top:398px;width:30px;height:34px;background:#66807b;border-top:2px solid #4c5f5c;border-bottom:2px solid #4c5f5c"><div class="a" style="left:0;top:-2px;width:100%;height:34px"><div class="n" style="color:#2c3a38"><span style="letter-spacing:1.25px">(Freeze)</span></div><div class="a" style="left:0;top:0;width:2px;height:34px;background:rgba(0,0,0,.38)"></div></div></div>
<div class="c" style="left:724px;top:398px;width:358px;height:34px;background:#58bdb0;border-top:2px solid #2a6b62;border-bottom:2px solid #2a6b62"><div class="a" style="left:0;top:-2px;width:100%;height:34px"><div class="n" style="color:#0c2a26"><span style="letter-spacing:1.25px">(Freeze)</span></div><div class="k" style="left:30px;top:2px;height:6px"></div><div class="k" style="left:30px;top:26px;height:6px"></div><div class="k" style="left:60px;top:2px;height:6px"></div><div class="k" style="left:60px;top:26px;height:6px"></div><div class="k" style="left:90px;top:2px;height:6px"></div><div class="k" style="left:90px;top:26px;height:6px"></div><div class="k" style="left:120px;top:2px;height:6px"></div><div class="k" style="left:120px;top:26px;height:6px"></div><div class="k" style="left:150px;top:2px;height:6px"></div><div class="k" style="left:150px;top:26px;height:6px"></div><div class="k" style="left:180px;top:2px;height:6px"></div><div class="k" style="left:180px;top:26px;height:6px"></div><div class="k" style="left:208px;top:2px;height:6px"></div><div class="k" style="left:208px;top:26px;height:6px"></div><div class="k" style="left:238px;top:2px;height:6px"></div><div class="k" style="left:238px;top:26px;height:6px"></div><div class="k" style="left:268px;top:2px;height:6px"></div><div class="k" style="left:268px;top:26px;height:6px"></div><div class="k" style="left:298px;top:2px;height:6px"></div><div class="k" style="left:298px;top:26px;height:6px"></div><div class="k" style="left:328px;top:2px;height:6px"></div><div class="k" style="left:328px;top:26px;height:6px"></div><div class="a" style="left:0;top:0;width:2px;height:34px;background:rgba(0,0,0,.38)"></div></div></div>
<div class="c" style="left:1082px;top:398px;width:4px;height:34px"><div class="a" style="left:0;top:0;width:100%;height:23.5px;background:repeating-linear-gradient(135deg,#1b1b1b 0,#1b1b1b 4.75px,transparent 4.75px,transparent 8.485px)"></div><div class="a" style="left:0;top:23.5px;width:100%;height:10.5px;background:repeating-linear-gradient(135deg,#1b1b1b 0,#1b1b1b 4.75px,transparent 4.75px,transparent 8.485px)"></div><div class="a" style="left:0;top:23.5px;width:100%;height:10.5px;background:linear-gradient(rgba(25,30,45,.05),rgba(25,30,45,.5))"></div></div>
<div class="c" style="left:1676px;top:398px;width:358px;height:34px;background:#58bdb0;border-top:2px solid #2a6b62;border-bottom:2px solid #2a6b62"><div class="a" style="left:0;top:-2px;width:100%;height:34px"><div class="n" style="color:#0c2a26"><span style="letter-spacing:1.25px">(Freeze)</span></div><div class="k" style="left:30px;top:2px;height:6px"></div><div class="k" style="left:30px;top:26px;height:6px"></div><div class="k" style="left:60px;top:2px;height:6px"></div><div class="k" style="left:60px;top:26px;height:6px"></div><div class="k" style="left:90px;top:2px;height:6px"></div><div class="k" style="left:90px;top:26px;height:6px"></div><div class="k" style="left:120px;top:2px;height:6px"></div><div class="k" style="left:120px;top:26px;height:6px"></div><div class="k" style="left:150px;top:2px;height:6px"></div><div class="k" style="left:150px;top:26px;height:6px"></div><div class="k" style="left:180px;top:2px;height:6px"></div><div class="k" style="left:180px;top:26px;height:6px"></div><div class="k" style="left:210px;top:2px;height:6px"></div><div class="k" style="left:210px;top:26px;height:6px"></div><div class="k" style="left:240px;top:2px;height:6px"></div><div class="k" style="left:240px;top:26px;height:6px"></div><div class="k" style="left:268px;top:2px;height:6px"></div><div class="k" style="left:268px;top:26px;height:6px"></div><div class="k" style="left:298px;top:2px;height:6px"></div><div class="k" style="left:298px;top:26px;height:6px"></div><div class="k" style="left:328px;top:2px;height:6px"></div><div class="k" style="left:328px;top:26px;height:6px"></div><div class="a" style="left:0;top:0;width:2px;height:34px;background:rgba(0,0,0,.38)"></div></div></div>
<div class="c" style="left:2034px;top:398px;width:4px;height:34px"><div class="a" style="left:0;top:0;width:100%;height:23.5px;background:repeating-linear-gradient(135deg,#1b1b1b 0,#1b1b1b 4.75px,transparent 4.75px,transparent 8.485px)"></div><div class="a" style="left:0;top:23.5px;width:100%;height:10.5px;background:repeating-linear-gradient(135deg,#1b1b1b 0,#1b1b1b 4.75px,transparent 4.75px,transparent 8.485px)"></div><div class="a" style="left:0;top:23.5px;width:100%;height:10.5px;background:linear-gradient(rgba(25,30,45,.05),rgba(25,30,45,.5))"></div></div>
<div class="c" style="left:606px;top:436px;width:476px;height:70px"><div class="a" style="left:0;top:0;width:100%;height:34px;background:#7dfbae;border-top:2px solid #3d7d58;border-bottom:2px solid #3d7d58"></div><div class="a" style="left:0;top:34px;width:100%;height:36px;background:#7dfbae"></div><svg width="476" height="36" style="left:0;top:34px"><use href="#gl" x="-594" fill="rgba(20,40,90,.22)"/></svg><svg width="476.0" height="36" style="left:0;top:34px"><use href="#wz" x="0.00"/><use href="#wz" x="118.00"/><use href="#wz" x="238.00"/><use href="#wz" x="356.00"/></svg><div class="n" style="color:#10311f"><span style="letter-spacing:0.76px">ZEN_SHAV_122_</span><span style="letter-spacing:1.6px">arp_synth_loop_unfazed_Gmin</span></div><div class="k" style="left:118px;top:2px;height:6px"></div><div class="k" style="left:118px;top:64px;height:6px"></div><div class="k" style="left:238px;top:2px;height:6px"></div><div class="k" style="left:238px;top:64px;height:6px"></div><div class="k" style="left:356px;top:2px;height:6px"></div><div class="k" style="left:356px;top:64px;height:6px"></div><div class="a" style="left:0;top:0;width:2px;height:70px;background:rgba(0,0,0,.38)"></div></div>
<div class="c" style="left:1558px;top:436px;width:476px;height:70px"><div class="a" style="left:0;top:0;width:100%;height:34px;background:#7dfbae;border-top:2px solid #3d7d58;border-bottom:2px solid #3d7d58"></div><div class="a" style="left:0;top:34px;width:100%;height:36px;background:#7dfbae"></div><svg width="476" height="36" style="left:0;top:34px"><use href="#gl" x="-1546" fill="rgba(20,40,90,.22)"/></svg><svg width="476.0" height="36" style="left:0;top:34px"><use href="#wz" x="0.00"/><use href="#wz" x="118.00"/><use href="#wz" x="238.00"/><use href="#wz" x="358.00"/></svg><div class="n" style="color:#10311f"><span style="letter-spacing:0.76px">ZEN_SHAV_122_</span><span style="letter-spacing:1.6px">arp_synth_loop_unfazed_Gmin</span></div><div class="k" style="left:118px;top:2px;height:6px"></div><div class="k" style="left:118px;top:64px;height:6px"></div><div class="k" style="left:238px;top:2px;height:6px"></div><div class="k" style="left:238px;top:64px;height:6px"></div><div class="k" style="left:358px;top:2px;height:6px"></div><div class="k" style="left:358px;top:64px;height:6px"></div><div class="a" style="left:0;top:0;width:2px;height:70px;background:rgba(0,0,0,.38)"></div></div>
<div class="c" style="left:2034px;top:436px;width:238px;height:70px"><div class="a" style="left:0;top:0;width:100%;height:34px;background:#7dfbae;border-top:2px solid #3d7d58;border-bottom:2px solid #3d7d58"></div><div class="a" style="left:0;top:34px;width:100%;height:36px;background:#7dfbae"></div><svg width="238" height="36" style="left:0;top:34px"><use href="#gl" x="-2022" fill="rgba(20,40,90,.22)"/></svg><svg width="238.0" height="36" style="left:0;top:34px"><use href="#wz" x="0.00"/><use href="#wz" x="120.00"/></svg><div class="n" style="color:#10311f"><span style="letter-spacing:0.76px">ZEN_SHAV_122_</span><span style="letter-spacing:1.6px">arp_synth_loop_unfazed_Gmin</span></div><div class="k" style="left:120px;top:2px;height:6px"></div><div class="k" style="left:120px;top:64px;height:6px"></div><div class="a" style="left:0;top:0;width:2px;height:70px;background:rgba(0,0,0,.38)"></div></div>
<div class="c" style="left:606px;top:510px;width:476px;height:70px"><div class="a" style="left:0;top:0;width:100%;height:34px;background:#58bdb0;border-top:2px solid #2a6b62;border-bottom:2px solid #2a6b62"></div><div class="a" style="left:0;top:34px;width:100%;height:36px;background:#52adc7"></div><svg width="476" height="36" style="left:0;top:34px"><use href="#gl" x="-594" fill="rgba(20,40,90,.22)"/></svg><svg width="476.0" height="36" style="left:0;top:34px"><use href="#wg" x="0.00"/><use href="#wg" x="118.00"/><use href="#wg" x="238.00"/><use href="#wg" x="356.00"/></svg><div class="n" style="color:#0c2a26"><span style="letter-spacing:0.45px">SS_GAT_120_</span><span style="letter-spacing:1.56px">synth_layered_sitepu_Fmin</span></div><div class="k" style="left:118px;top:2px;height:6px"></div><div class="k" style="left:118px;top:64px;height:6px"></div><div class="k" style="left:238px;top:2px;height:6px"></div><div class="k" style="left:238px;top:64px;height:6px"></div><div class="k" style="left:356px;top:2px;height:6px"></div><div class="k" style="left:356px;top:64px;height:6px"></div><div class="a" style="left:0;top:0;width:2px;height:70px;background:rgba(0,0,0,.38)"></div></div>
<div class="c" style="left:1558px;top:510px;width:476px;height:70px"><div class="a" style="left:0;top:0;width:100%;height:34px;background:#58bdb0;border-top:2px solid #2a6b62;border-bottom:2px solid #2a6b62"></div><div class="a" style="left:0;top:34px;width:100%;height:36px;background:#52adc7"></div><svg width="476" height="36" style="left:0;top:34px"><use href="#gl" x="-1546" fill="rgba(20,40,90,.22)"/></svg><svg width="476.0" height="36" style="left:0;top:34px"><use href="#wg" x="0.00"/><use href="#wg" x="118.00"/><use href="#wg" x="238.00"/><use href="#wg" x="358.00"/></svg><div class="n" style="color:#0c2a26"><span style="letter-spacing:0.45px">SS_GAT_120_</span><span style="letter-spacing:1.56px">synth_layered_sitepu_Fmin</span></div><div class="k" style="left:118px;top:2px;height:6px"></div><div class="k" style="left:118px;top:64px;height:6px"></div><div class="k" style="left:238px;top:2px;height:6px"></div><div class="k" style="left:238px;top:64px;height:6px"></div><div class="k" style="left:358px;top:2px;height:6px"></div><div class="k" style="left:358px;top:64px;height:6px"></div><div class="a" style="left:0;top:0;width:2px;height:70px;background:rgba(0,0,0,.38)"></div></div>
<div class="a " style="left:590px;top:586px;width:16px;height:8px;background:#86e8d6;"></div>
<div class="a " style="left:1544px;top:586px;width:14px;height:7.5px;background:#86e8d6;"></div>
<div class="a " style="left:1544px;top:596.5px;width:14px;height:7.5px;background:#86e8d6;"></div>
<div class="a " style="left:1558px;top:606px;width:120px;height:8px;background:#86e8d6;"></div>
<div class="c" style="left:694px;top:696px;width:30px;height:70px"><div class="a" style="left:0;top:0;width:100%;height:34px;background:#c4958d;border-top:2px solid #7a5853;border-bottom:2px solid #7a5853"></div><div class="a" style="left:0;top:34px;width:100%;height:36px;background:#9697b5"></div><svg width="30" height="36" style="left:0;top:34px"><use href="#gl" x="-682" fill="rgba(20,40,90,.22)"/></svg><svg width="27.0" height="36" style="left:0;top:34px"><path fill="#1b1b1e" d="M0.0 8.0L1.5 8.0L3.0 8.0L4.5 8.2L6.0 7.3L7.5 6.3L9.0 5.5L10.5 4.4L12.0 3.6L13.5 4.3L15.0 5.2L16.5 6.1L18.0 6.1L19.5 6.3L21.0 5.1L22.5 3.5L24.0 2.8L25.5 4.1L27.0 5.5L27.0 5.4L27.0 12.5L27.0 12.5L25.5 13.8L24.0 15.2L22.5 14.2L21.0 12.7L19.5 11.8L18.0 11.5L16.5 11.5L15.0 12.4L13.5 13.7L12.0 14.3L10.5 13.4L9.0 12.3L7.5 11.2L6.0 10.4L4.5 9.7L3.0 9.9L1.5 9.9L0.0 9.8ZM0.0 26.0L1.5 26.2L3.0 26.3L4.5 26.2L6.0 25.7L7.5 24.6L9.0 23.5L10.5 22.6L12.0 21.5L13.5 22.2L15.0 23.3L16.5 24.4L18.0 24.3L19.5 24.4L21.0 23.2L22.5 21.9L24.0 20.7L25.5 22.2L27.0 23.5L27.0 23.6L27.0 30.6L27.0 30.6L25.5 31.8L24.0 33.3L22.5 32.3L21.0 31.0L19.5 29.6L18.0 29.8L16.5 29.8L15.0 30.8L13.5 31.5L12.0 32.3L10.5 31.4L9.0 30.4L7.5 29.4L6.0 28.5L4.5 27.9L3.0 27.7L1.5 27.7L0.0 27.8Z"/></svg><div class="n" style="color:#241614"><span style="letter-spacing:-0.16px">STCR2_AHV</span></div><div class="a" style="left:0;top:0;width:2px;height:70px;background:rgba(0,0,0,.38)"></div></div>
<div class="c" style="left:724px;top:696px;width:924px;height:70px"><div class="a" style="left:0;top:0;width:100%;height:23.5px;background:repeating-linear-gradient(135deg,#1b1b1b 0,#1b1b1b 4.75px,transparent 4.75px,transparent 8.485px)"></div><div class="a" style="left:0;top:23.5px;width:100%;height:10.5px;background:repeating-linear-gradient(135deg,#1b1b1b 0,#1b1b1b 4.75px,transparent 4.75px,transparent 8.485px)"></div><div class="a" style="left:0;top:23.5px;width:100%;height:10.5px;background:linear-gradient(rgba(25,30,45,.05),rgba(25,30,45,.5))"></div><div class="a" style="left:0;top:34px;width:100%;height:36px;background:#9697b5"></div><svg width="924" height="36" style="left:0;top:34px"><use href="#gl" x="-712" fill="rgba(20,40,90,.22)"/></svg></div>
<div class="c" style="left:1648px;top:696px;width:18px;height:70px"><div class="a" style="left:0;top:0;width:100%;height:34px;background:#c4958d;border-top:2px solid #7a5853;border-bottom:2px solid #7a5853"></div><div class="a" style="left:0;top:34px;width:100%;height:36px;background:#9697b5"></div><svg width="18" height="36" style="left:0;top:34px"><use href="#gl" x="-1636" fill="rgba(20,40,90,.22)"/></svg><svg width="18.0" height="36" style="left:0;top:34px"><path fill="#1b1b1e" d="M0.0 8.0L1.5 8.1L3.0 8.2L4.5 7.0L6.0 5.5L7.5 4.0L9.0 4.2L10.5 5.7L12.0 6.2L13.5 5.6L15.0 3.6L16.5 3.3L18.0 5.5L18.0 5.3L18.0 12.4L18.0 12.5L16.5 14.3L15.0 14.2L13.5 12.1L12.0 11.7L10.5 12.1L9.0 13.5L7.5 13.9L6.0 12.4L4.5 10.9L3.0 9.8L1.5 9.7L0.0 9.8ZM0.0 26.3L1.5 26.1L3.0 26.0L4.5 25.1L6.0 23.6L7.5 21.9L9.0 22.3L10.5 23.8L12.0 24.4L13.5 23.7L15.0 21.7L16.5 21.4L18.0 23.6L18.0 23.6L18.0 30.4L18.0 30.5L16.5 32.5L15.0 32.1L13.5 30.2L12.0 29.7L10.5 30.3L9.0 31.7L7.5 32.0L6.0 30.6L4.5 29.0L3.0 27.9L1.5 27.8L0.0 27.8Z"/></svg><div class="n" style="color:#241614"><span style="letter-spacing:-0.16px">STCR2_AHV</span></div><div class="a" style="left:0;top:0;width:2px;height:70px;background:rgba(0,0,0,.38)"></div></div>
<div class="c" style="left:1666px;top:696px;width:4px;height:70px"><div class="a" style="left:0;top:0;width:100%;height:34px;background:#c4958d;border-top:2px solid #7a5853;border-bottom:2px solid #7a5853"></div><div class="a" style="left:0;top:34px;width:100%;height:36px;background:#9697b5"></div><svg width="4" height="36" style="left:0;top:34px"><use href="#gl" x="-1654" fill="rgba(20,40,90,.22)"/></svg><div class="a" style="left:2px;top:38px;width:3px;height:10px;background:#1b1b1e"></div><div class="a" style="left:2px;top:56px;width:3px;height:10px;background:#1b1b1e"></div><div class="a" style="left:0;top:0;width:2px;height:70px;background:rgba(0,0,0,.38)"></div></div>
<div class="c" style="left:1670px;top:696px;width:4px;height:70px"><div class="a" style="left:0;top:0;width:100%;height:34px;background:#c4958d;border-top:2px solid #7a5853;border-bottom:2px solid #7a5853"></div><div class="a" style="left:0;top:34px;width:100%;height:36px;background:#9697b5"></div><svg width="4" height="36" style="left:0;top:34px"><use href="#gl" x="-1658" fill="rgba(20,40,90,.22)"/></svg><div class="a" style="left:2px;top:38px;width:3px;height:10px;background:#1b1b1e"></div><div class="a" style="left:2px;top:56px;width:3px;height:10px;background:#1b1b1e"></div><div class="a" style="left:0;top:0;width:2px;height:70px;background:rgba(0,0,0,.38)"></div></div>
<div class="c" style="left:1674px;top:696px;width:4px;height:70px"><div class="a" style="left:0;top:0;width:100%;height:34px;background:#c4958d;border-top:2px solid #7a5853;border-bottom:2px solid #7a5853"></div><div class="a" style="left:0;top:34px;width:100%;height:36px;background:#9697b5"></div><svg width="4" height="36" style="left:0;top:34px"><use href="#gl" x="-1662" fill="rgba(20,40,90,.22)"/></svg><div class="a" style="left:2px;top:38px;width:3px;height:10px;background:#1b1b1e"></div><div class="a" style="left:2px;top:56px;width:3px;height:10px;background:#1b1b1e"></div><div class="a" style="left:0;top:0;width:2px;height:70px;background:rgba(0,0,0,.38)"></div></div>
<div class="c" style="left:1678px;top:696px;width:48px;height:70px"><div class="a" style="left:0;top:0;width:100%;height:23.5px;background:repeating-linear-gradient(135deg,#1b1b1b 0,#1b1b1b 4.75px,transparent 4.75px,transparent 8.485px)"></div><div class="a" style="left:0;top:23.5px;width:100%;height:10.5px;background:repeating-linear-gradient(135deg,#1b1b1b 0,#1b1b1b 4.75px,transparent 4.75px,transparent 8.485px)"></div><div class="a" style="left:0;top:23.5px;width:100%;height:10.5px;background:linear-gradient(rgba(25,30,45,.05),rgba(25,30,45,.5))"></div><div class="a" style="left:0;top:34px;width:100%;height:36px;background:#9697b5"></div><svg width="48" height="36" style="left:0;top:34px"><use href="#gl" x="-1666" fill="rgba(20,40,90,.22)"/></svg></div>
<div class="c" style="left:368px;top:770px;width:118px;height:70px"><div class="a" style="left:0;top:0;width:100%;height:34px;background:#c4958d;border-top:2px solid #7a5853;border-bottom:2px solid #7a5853"></div><div class="a" style="left:0;top:34px;width:100%;height:36px;background:#9697b5"></div><svg width="118" height="36" style="left:0;top:34px"><use href="#gl" x="-356" fill="rgba(20,40,90,.22)"/></svg><svg width="118.0" height="36" style="left:0;top:34px"><use href="#ws"/></svg><div class="n" style="color:#241614"><span style="letter-spacing:-0.16px">STCR2_AHV</span></div><div class="a" style="left:0;top:0;width:2px;height:70px;background:rgba(0,0,0,.38)"></div></div>
<div class="c" style="left:486px;top:770px;width:120px;height:70px"><div class="a" style="left:0;top:0;width:100%;height:34px;background:#c4958d;border-top:2px solid #7a5853;border-bottom:2px solid #7a5853"></div><div class="a" style="left:0;top:34px;width:100%;height:36px;background:#9697b5"></div><svg width="120" height="36" style="left:0;top:34px"><use href="#gl" x="-474" fill="rgba(20,40,90,.22)"/></svg><svg width="120.0" height="36" style="left:0;top:34px"><use href="#ws"/></svg><div class="n" style="color:#241614"><span style="letter-spacing:-0.16px">STCR2_AHV</span></div><div class="a" style="left:0;top:0;width:2px;height:70px;background:rgba(0,0,0,.38)"></div></div>
<div class="c" style="left:1328px;top:770px;width:12px;height:70px"><div class="a" style="left:0;top:0;width:100%;height:34px;background:#c4958d;border-top:2px solid #7a5853;border-bottom:2px solid #7a5853"></div><div class="a" style="left:0;top:34px;width:100%;height:36px;background:#9697b5"></div><svg width="12" height="36" style="left:0;top:34px"><use href="#gl" x="-1316" fill="rgba(20,40,90,.22)"/></svg><svg width="11.0" height="36" style="left:0;top:34px"><path fill="#1b1b1e" d="M0.0 8.1L1.5 8.1L3.0 6.5L4.5 4.2L6.0 5.1L7.5 6.3L9.0 4.1L10.5 4.2L11.0 5.3L11.0 12.3L10.5 13.4L9.0 13.8L7.5 11.7L6.0 12.8L4.5 13.8L3.0 11.3L1.5 9.8L0.0 9.6ZM0.0 26.0L1.5 26.1L3.0 24.6L4.5 22.2L6.0 23.3L7.5 24.3L9.0 22.0L10.5 22.4L11.0 23.4L11.0 30.5L10.5 31.5L9.0 32.0L7.5 29.7L6.0 30.8L4.5 31.7L3.0 29.3L1.5 27.8L0.0 27.9Z"/></svg><div class="n" style="color:#241614"><span style="letter-spacing:-0.16px">STCR2_AHV</span></div><div class="a" style="left:0;top:0;width:2px;height:70px;background:rgba(0,0,0,.38)"></div></div>
<div class="c" style="left:1340px;top:770px;width:16px;height:70px"><div class="a" style="left:0;top:0;width:100%;height:23.5px;background:repeating-linear-gradient(135deg,#1b1b1b 0,#1b1b1b 4.75px,transparent 4.75px,transparent 8.485px)"></div><div class="a" style="left:0;top:23.5px;width:100%;height:10.5px;background:repeating-linear-gradient(135deg,#1b1b1b 0,#1b1b1b 4.75px,transparent 4.75px,transparent 8.485px)"></div><div class="a" style="left:0;top:23.5px;width:100%;height:10.5px;background:linear-gradient(rgba(25,30,45,.05),rgba(25,30,45,.5))"></div><div class="a" style="left:0;top:34px;width:100%;height:36px;background:#9697b5"></div><svg width="16" height="36" style="left:0;top:34px"><use href="#gl" x="-1328" fill="rgba(20,40,90,.22)"/></svg></div>
<div class="c" style="left:1358px;top:770px;width:12px;height:70px"><div class="a" style="left:0;top:0;width:100%;height:34px;background:#c4958d;border-top:2px solid #7a5853;border-bottom:2px solid #7a5853"></div><div class="a" style="left:0;top:34px;width:100%;height:36px;background:#9697b5"></div><svg width="12" height="36" style="left:0;top:34px"><use href="#gl" x="-1346" fill="rgba(20,40,90,.22)"/></svg><svg width="11.2" height="36" style="left:0;top:34px"><path fill="#1b1b1e" d="M0.0 8.2L1.5 8.0L3.0 6.5L4.5 4.2L6.0 5.0L7.5 6.2L9.0 4.4L10.5 3.9L11.2 5.4L11.2 12.4L10.5 13.8L9.0 13.5L7.5 11.8L6.0 12.8L4.5 13.5L3.0 11.3L1.5 9.8L0.0 9.6ZM0.0 26.1L1.5 26.0L3.0 24.7L4.5 22.3L6.0 22.9L7.5 24.3L9.0 22.6L10.5 22.0L11.2 23.5L11.2 30.4L10.5 32.1L9.0 31.6L7.5 29.8L6.0 30.9L4.5 31.8L3.0 29.4L1.5 27.9L0.0 28.0Z"/></svg><div class="n" style="color:#241614"><span style="letter-spacing:-0.16px">STCR2_AHV</span></div><div class="a" style="left:0;top:0;width:2px;height:70px;background:rgba(0,0,0,.38)"></div></div>
<div class="c" style="left:1370px;top:770px;width:18px;height:70px"><div class="a" style="left:0;top:0;width:100%;height:23.5px;background:repeating-linear-gradient(135deg,#1b1b1b 0,#1b1b1b 4.75px,transparent 4.75px,transparent 8.485px)"></div><div class="a" style="left:0;top:23.5px;width:100%;height:10.5px;background:repeating-linear-gradient(135deg,#1b1b1b 0,#1b1b1b 4.75px,transparent 4.75px,transparent 8.485px)"></div><div class="a" style="left:0;top:23.5px;width:100%;height:10.5px;background:linear-gradient(rgba(25,30,45,.05),rgba(25,30,45,.5))"></div><div class="a" style="left:0;top:34px;width:100%;height:36px;background:#9697b5"></div><svg width="18" height="36" style="left:0;top:34px"><use href="#gl" x="-1358" fill="rgba(20,40,90,.22)"/></svg></div>
<div class="c" style="left:1388px;top:770px;width:12px;height:70px"><div class="a" style="left:0;top:0;width:100%;height:34px;background:#c4958d;border-top:2px solid #7a5853;border-bottom:2px solid #7a5853"></div><div class="a" style="left:0;top:34px;width:100%;height:36px;background:#9697b5"></div><svg width="12" height="36" style="left:0;top:34px"><use href="#gl" x="-1376" fill="rgba(20,40,90,.22)"/></svg><svg width="11.5" height="36" style="left:0;top:34px"><path fill="#1b1b1e" d="M0.0 8.0L1.5 7.9L3.0 6.7L4.5 4.4L6.0 4.5L7.5 6.2L9.0 5.0L10.5 3.4L11.5 5.5L11.5 12.3L10.5 14.4L9.0 13.0L7.5 11.6L6.0 13.3L4.5 13.5L3.0 10.9L1.5 9.7L0.0 9.8ZM0.0 26.1L1.5 26.1L3.0 24.7L4.5 22.6L6.0 22.7L7.5 24.2L9.0 23.1L10.5 21.4L11.5 23.4L11.5 30.4L10.5 32.4L9.0 31.0L7.5 29.7L6.0 31.3L4.5 31.6L3.0 29.2L1.5 27.9L0.0 27.8Z"/></svg><div class="n" style="color:#241614"><span style="letter-spacing:-0.16px">STCR2_AHV</span></div><div class="a" style="left:0;top:0;width:2px;height:70px;background:rgba(0,0,0,.38)"></div></div>
<div class="c" style="left:1400px;top:770px;width:16px;height:70px"><div class="a" style="left:0;top:0;width:100%;height:23.5px;background:repeating-linear-gradient(135deg,#1b1b1b 0,#1b1b1b 4.75px,transparent 4.75px,transparent 8.485px)"></div><div class="a" style="left:0;top:23.5px;width:100%;height:10.5px;background:repeating-linear-gradient(135deg,#1b1b1b 0,#1b1b1b 4.75px,transparent 4.75px,transparent 8.485px)"></div><div class="a" style="left:0;top:23.5px;width:100%;height:10.5px;background:linear-gradient(rgba(25,30,45,.05),rgba(25,30,45,.5))"></div><div class="a" style="left:0;top:34px;width:100%;height:36px;background:#9697b5"></div><svg width="16" height="36" style="left:0;top:34px"><use href="#gl" x="-1388" fill="rgba(20,40,90,.22)"/></svg></div>
<div class="c" style="left:1416px;top:770px;width:14px;height:70px"><div class="a" style="left:0;top:0;width:100%;height:34px;background:#c4958d;border-top:2px solid #7a5853;border-bottom:2px solid #7a5853"></div><div class="a" style="left:0;top:34px;width:100%;height:36px;background:#9697b5"></div><svg width="14" height="36" style="left:0;top:34px"><use href="#gl" x="-1404" fill="rgba(20,40,90,.22)"/></svg><svg width="13.5" height="36" style="left:0;top:34px"><path fill="#1b1b1e" d="M0.0 8.2L1.5 8.1L3.0 7.4L4.5 5.4L6.0 3.4L7.5 5.1L9.0 6.0L10.5 5.1L12.0 2.9L13.5 5.3L13.5 5.4L13.5 12.3L13.5 12.3L12.0 14.9L10.5 12.7L9.0 11.7L7.5 12.5L6.0 14.2L4.5 12.2L3.0 10.3L1.5 9.9L0.0 9.8ZM0.0 26.3L1.5 26.2L3.0 25.7L4.5 23.5L6.0 21.5L7.5 23.3L9.0 24.2L10.5 23.2L12.0 20.7L13.5 23.6L13.5 23.6L13.5 30.5L13.5 30.6L12.0 33.2L10.5 31.0L9.0 29.7L7.5 30.7L6.0 32.5L4.5 30.6L3.0 28.4L1.5 27.8L0.0 27.7Z"/></svg><div class="n" style="color:#241614"><span style="letter-spacing:-0.16px">STCR2_AHV</span></div><div class="a" style="left:0;top:0;width:2px;height:70px;background:rgba(0,0,0,.38)"></div></div>
<div class="c" style="left:1430px;top:770px;width:10px;height:70px"><div class="a" style="left:0;top:0;width:100%;height:23.5px;background:repeating-linear-gradient(135deg,#1b1b1b 0,#1b1b1b 4.75px,transparent 4.75px,transparent 8.485px)"></div><div class="a" style="left:0;top:23.5px;width:100%;height:10.5px;background:repeating-linear-gradient(135deg,#1b1b1b 0,#1b1b1b 4.75px,transparent 4.75px,transparent 8.485px)"></div><div class="a" style="left:0;top:23.5px;width:100%;height:10.5px;background:linear-gradient(rgba(25,30,45,.05),rgba(25,30,45,.5))"></div><div class="a" style="left:0;top:34px;width:100%;height:36px;background:#9697b5"></div><svg width="10" height="36" style="left:0;top:34px"><use href="#gl" x="-1418" fill="rgba(20,40,90,.22)"/></svg></div>
<div class="c" style="left:1438px;top:770px;width:120px;height:70px"><div class="a" style="left:0;top:0;width:100%;height:34px;background:#c4958d;border-top:2px solid #7a5853;border-bottom:2px solid #7a5853"></div><div class="a" style="left:0;top:34px;width:100%;height:36px;background:#9697b5"></div><svg width="120" height="36" style="left:0;top:34px"><use href="#gl" x="-1426" fill="rgba(20,40,90,.22)"/></svg><svg width="120.0" height="36" style="left:0;top:34px"><use href="#ws"/></svg><div class="n" style="color:#241614"><span style="letter-spacing:-0.16px">STCR2_AHV</span></div><div class="a" style="left:0;top:0;width:2px;height:70px;background:rgba(0,0,0,.38)"></div></div>
<div class="c" style="left:1558px;top:770px;width:72px;height:70px"><div class="a" style="left:0;top:0;width:100%;height:23.5px;background:repeating-linear-gradient(135deg,#1b1b1b 0,#1b1b1b 4.75px,transparent 4.75px,transparent 8.485px)"></div><div class="a" style="left:0;top:23.5px;width:100%;height:10.5px;background:repeating-linear-gradient(135deg,#1b1b1b 0,#1b1b1b 4.75px,transparent 4.75px,transparent 8.485px)"></div><div class="a" style="left:0;top:23.5px;width:100%;height:10.5px;background:linear-gradient(rgba(25,30,45,.05),rgba(25,30,45,.5))"></div><div class="a" style="left:0;top:34px;width:100%;height:36px;background:#9697b5"></div><svg width="72" height="36" style="left:0;top:34px"><use href="#gl" x="-1546" fill="rgba(20,40,90,.22)"/></svg></div>
<svg width="238.0" height="70" style="left:1796.0px;top:844px"><defs><pattern id="vc" x="0" y="0" width="14.88" height="70" patternUnits="userSpaceOnUse"><rect x="0" y="0" width="14.88" height="34" fill="#6b504d"/><rect x="5.4" y="0" width="7.8" height="34" fill="#1c2b42"/><rect x="7.4" y="0" width="3.8" height="34" fill="#7d7672"/><rect x="0" y="34" width="14.88" height="36" fill="#4e4e5e"/><rect x="5.4" y="34" width="7.8" height="36" fill="#9a9bc0"/><rect x="7.2" y="34" width="4.2" height="36" fill="#8b8cae"/><ellipse cx="9.3" cy="42.5" rx="1.9" ry="4.6" fill="#68686e"/><ellipse cx="9.3" cy="61" rx="1.9" ry="4.6" fill="#68686e"/></pattern></defs><rect width="238.0" height="70" fill="url(#vc)"/></svg>
<div class="c" style="left:2034.0px;top:844px;width:73.8px;height:70px"><div class="a" style="left:0;top:0;width:100%;height:23.5px;background:repeating-linear-gradient(135deg,#1b1b1b 0,#1b1b1b 4.75px,transparent 4.75px,transparent 8.485px)"></div><div class="a" style="left:0;top:23.5px;width:100%;height:10.5px;background:repeating-linear-gradient(135deg,#1b1b1b 0,#1b1b1b 4.75px,transparent 4.75px,transparent 8.485px)"></div><div class="a" style="left:0;top:23.5px;width:100%;height:10.5px;background:linear-gradient(rgba(25,30,45,.05),rgba(25,30,45,.5))"></div><div class="a" style="left:0;top:34px;width:100%;height:36px;background:#9697b5"></div><svg width="73.8" height="36" style="left:0;top:34px"><use href="#gl" x="-2022" fill="rgba(20,40,90,.22)"/></svg></div>
<div class="c" style="left:844px;top:918px;width:12px;height:70px"><div class="a" style="left:0;top:0;width:100%;height:34px;background:#c4958d;border-top:2px solid #7a5853;border-bottom:2px solid #7a5853"></div><div class="a" style="left:0;top:34px;width:100%;height:36px;background:#9697b5"></div><svg width="12" height="36" style="left:0;top:34px"><use href="#gl" x="-832" fill="rgba(20,40,90,.22)"/></svg><svg width="11.0" height="36" style="left:0;top:34px"><path fill="#1b1b1e" d="M0.0 7.9L1.5 7.4L3.0 6.7L4.5 6.5L6.0 6.4L7.5 6.7L9.0 7.1L10.5 7.4L11.0 7.7L11.0 10.1L10.5 10.3L9.0 10.7L7.5 11.1L6.0 11.1L4.5 11.2L3.0 10.9L1.5 10.6L0.0 10.1ZM0.0 25.8L1.5 25.3L3.0 25.1L4.5 24.8L6.0 24.7L7.5 24.8L9.0 25.2L10.5 25.5L11.0 25.9L11.0 28.1L10.5 28.4L9.0 28.7L7.5 29.1L6.0 29.4L4.5 29.3L3.0 29.1L1.5 28.7L0.0 28.2Z"/></svg><div class="n" style="color:#241614"><span style="letter-spacing:-0.16px">STCR2_AHV</span></div><div class="a" style="left:0;top:0;width:2px;height:70px;background:rgba(0,0,0,.38)"></div></div>
<div class="c" style="left:856px;top:918px;width:16px;height:70px"><div class="a" style="left:0;top:0;width:100%;height:23.5px;background:repeating-linear-gradient(135deg,#1b1b1b 0,#1b1b1b 4.75px,transparent 4.75px,transparent 8.485px)"></div><div class="a" style="left:0;top:23.5px;width:100%;height:10.5px;background:repeating-linear-gradient(135deg,#1b1b1b 0,#1b1b1b 4.75px,transparent 4.75px,transparent 8.485px)"></div><div class="a" style="left:0;top:23.5px;width:100%;height:10.5px;background:linear-gradient(rgba(25,30,45,.05),rgba(25,30,45,.5))"></div><div class="a" style="left:0;top:34px;width:100%;height:36px;background:#9697b5"></div><svg width="16" height="36" style="left:0;top:34px"><use href="#gl" x="-844" fill="rgba(20,40,90,.22)"/></svg></div>
<div class="c" style="left:872px;top:918px;width:12px;height:70px"><div class="a" style="left:0;top:0;width:100%;height:34px;background:#c4958d;border-top:2px solid #7a5853;border-bottom:2px solid #7a5853"></div><div class="a" style="left:0;top:34px;width:100%;height:36px;background:#9697b5"></div><svg width="12" height="36" style="left:0;top:34px"><use href="#gl" x="-860" fill="rgba(20,40,90,.22)"/></svg><svg width="12.0" height="36" style="left:0;top:34px"><path fill="#1b1b1e" d="M0.0 7.7L1.5 7.4L3.0 6.8L4.5 6.7L6.0 6.5L7.5 6.6L9.0 6.8L10.5 7.3L12.0 7.7L12.0 7.9L12.0 10.2L12.0 10.1L10.5 10.6L9.0 10.8L7.5 11.2L6.0 11.3L4.5 11.2L3.0 10.8L1.5 10.4L0.0 10.2ZM0.0 26.0L1.5 25.5L3.0 24.9L4.5 24.9L6.0 24.7L7.5 24.9L9.0 24.9L10.5 25.4L12.0 25.8L12.0 25.8L12.0 28.1L12.0 28.3L10.5 28.5L9.0 29.0L7.5 29.1L6.0 29.3L4.5 29.2L3.0 29.0L1.5 28.6L0.0 28.2Z"/></svg><div class="n" style="color:#241614"><span style="letter-spacing:-0.16px">STCR2_AHV</span></div><div class="a" style="left:0;top:0;width:2px;height:70px;background:rgba(0,0,0,.38)"></div></div>
<div class="c" style="left:884px;top:918px;width:18px;height:70px"><div class="a" style="left:0;top:0;width:100%;height:23.5px;background:repeating-linear-gradient(135deg,#1b1b1b 0,#1b1b1b 4.75px,transparent 4.75px,transparent 8.485px)"></div><div class="a" style="left:0;top:23.5px;width:100%;height:10.5px;background:repeating-linear-gradient(135deg,#1b1b1b 0,#1b1b1b 4.75px,transparent 4.75px,transparent 8.485px)"></div><div class="a" style="left:0;top:23.5px;width:100%;height:10.5px;background:linear-gradient(rgba(25,30,45,.05),rgba(25,30,45,.5))"></div><div class="a" style="left:0;top:34px;width:100%;height:36px;background:#9697b5"></div><svg width="18" height="36" style="left:0;top:34px"><use href="#gl" x="-872" fill="rgba(20,40,90,.22)"/></svg></div>
<div class="c" style="left:902px;top:918px;width:10px;height:70px"><div class="a" style="left:0;top:0;width:100%;height:34px;background:#c4958d;border-top:2px solid #7a5853;border-bottom:2px solid #7a5853"></div><div class="a" style="left:0;top:34px;width:100%;height:36px;background:#9697b5"></div><svg width="10" height="36" style="left:0;top:34px"><use href="#gl" x="-890" fill="rgba(20,40,90,.22)"/></svg><svg width="10.5" height="36" style="left:0;top:34px"><path fill="#1b1b1e" d="M0.0 7.6L1.5 7.3L3.0 6.7L4.5 6.4L6.0 6.5L7.5 6.8L9.0 7.3L10.5 7.6L10.5 7.6L10.5 10.1L10.5 10.1L9.0 10.4L7.5 11.0L6.0 11.3L4.5 11.3L3.0 11.1L1.5 10.5L0.0 10.0ZM0.0 25.8L1.5 25.2L3.0 24.8L4.5 24.6L6.0 24.6L7.5 24.8L9.0 25.3L10.5 25.7L10.5 25.8L10.5 28.1L10.5 28.2L9.0 28.8L7.5 29.1L6.0 29.3L4.5 29.4L3.0 29.2L1.5 28.7L0.0 28.0Z"/></svg><div class="n" style="color:#241614"><span style="letter-spacing:-0.16px">STCR2_AHV</span></div><div class="a" style="left:0;top:0;width:2px;height:70px;background:rgba(0,0,0,.38)"></div></div>
<div class="c" style="left:912px;top:918px;width:22px;height:70px"><div class="a" style="left:0;top:0;width:100%;height:23.5px;background:repeating-linear-gradient(135deg,#1b1b1b 0,#1b1b1b 4.75px,transparent 4.75px,transparent 8.485px)"></div><div class="a" style="left:0;top:23.5px;width:100%;height:10.5px;background:repeating-linear-gradient(135deg,#1b1b1b 0,#1b1b1b 4.75px,transparent 4.75px,transparent 8.485px)"></div><div class="a" style="left:0;top:23.5px;width:100%;height:10.5px;background:linear-gradient(rgba(25,30,45,.05),rgba(25,30,45,.5))"></div><div class="a" style="left:0;top:34px;width:100%;height:36px;background:#9697b5"></div><svg width="22" height="36" style="left:0;top:34px"><use href="#gl" x="-900" fill="rgba(20,40,90,.22)"/></svg></div>
<div class="c" style="left:934px;top:918px;width:40px;height:70px"><div class="a" style="left:0;top:0;width:100%;height:34px;background:#c4958d;border-top:2px solid #7a5853;border-bottom:2px solid #7a5853"></div><div class="a" style="left:0;top:34px;width:100%;height:36px;background:#9697b5"></div><svg width="40" height="36" style="left:0;top:34px"><use href="#gl" x="-922" fill="rgba(20,40,90,.22)"/></svg><svg width="38.6" height="36" style="left:0;top:34px"><path fill="#1b1b1e" d="M0.0 7.7L1.5 7.5L3.0 7.5L4.5 7.2L6.0 7.1L7.5 7.0L9.0 7.0L10.5 6.9L12.0 6.8L13.5 6.8L15.0 6.8L16.5 6.5L18.0 6.6L19.5 6.6L21.0 6.7L22.5 6.5L24.0 6.6L25.5 6.8L27.0 6.9L28.5 7.0L30.0 7.1L31.5 7.0L33.0 7.3L34.5 7.4L36.0 7.6L37.5 7.7L38.6 7.7L38.6 9.9L37.5 10.3L36.0 10.4L34.5 10.6L33.0 10.7L31.5 10.8L30.0 10.8L28.5 11.0L27.0 10.9L25.5 11.1L24.0 11.2L22.5 11.2L21.0 11.3L19.5 11.3L18.0 11.2L16.5 11.3L15.0 11.3L13.5 11.0L12.0 11.1L10.5 10.9L9.0 10.7L7.5 10.8L6.0 10.6L4.5 10.6L3.0 10.4L1.5 10.2L0.0 9.9ZM0.0 25.8L1.5 25.7L3.0 25.6L4.5 25.4L6.0 25.3L7.5 25.1L9.0 25.1L10.5 24.9L12.0 24.9L13.5 24.9L15.0 24.8L16.5 24.8L18.0 24.7L19.5 24.8L21.0 24.8L22.5 24.7L24.0 24.8L25.5 24.9L27.0 24.9L28.5 24.9L30.0 25.1L31.5 25.1L33.0 25.3L34.5 25.5L36.0 25.7L37.5 25.8L38.6 25.7L38.6 28.1L37.5 28.4L36.0 28.3L34.5 28.5L33.0 28.6L31.5 28.9L30.0 29.0L28.5 29.0L27.0 29.2L25.5 29.1L24.0 29.3L22.5 29.2L21.0 29.4L19.5 29.3L18.0 29.3L16.5 29.2L15.0 29.3L13.5 29.2L12.0 29.1L10.5 29.1L9.0 28.9L7.5 28.8L6.0 28.6L4.5 28.7L3.0 28.5L1.5 28.3L0.0 28.2Z"/></svg><div class="n" style="color:#241614"><span style="letter-spacing:-0.16px">STCR2_AHV</span></div><div class="a" style="left:0;top:0;width:2px;height:70px;background:rgba(0,0,0,.38)"></div></div>
<div class="c" style="left:974px;top:918px;width:18px;height:70px"><div class="a" style="left:0;top:0;width:100%;height:23.5px;background:repeating-linear-gradient(135deg,#1b1b1b 0,#1b1b1b 4.75px,transparent 4.75px,transparent 8.485px)"></div><div class="a" style="left:0;top:23.5px;width:100%;height:10.5px;background:repeating-linear-gradient(135deg,#1b1b1b 0,#1b1b1b 4.75px,transparent 4.75px,transparent 8.485px)"></div><div class="a" style="left:0;top:23.5px;width:100%;height:10.5px;background:linear-gradient(rgba(25,30,45,.05),rgba(25,30,45,.5))"></div><div class="a" style="left:0;top:34px;width:100%;height:36px;background:#9697b5"></div><svg width="18" height="36" style="left:0;top:34px"><use href="#gl" x="-962" fill="rgba(20,40,90,.22)"/></svg></div>
<div class="c" style="left:992px;top:918px;width:12px;height:70px"><div class="a" style="left:0;top:0;width:100%;height:34px;background:#c4958d;border-top:2px solid #7a5853;border-bottom:2px solid #7a5853"></div><div class="a" style="left:0;top:34px;width:100%;height:36px;background:#9697b5"></div><svg width="12" height="36" style="left:0;top:34px"><use href="#gl" x="-980" fill="rgba(20,40,90,.22)"/></svg><svg width="11.7" height="36" style="left:0;top:34px"><path fill="#1b1b1e" d="M0.0 7.8L1.5 7.3L3.0 6.9L4.5 6.6L6.0 6.4L7.5 6.8L9.0 6.8L10.5 7.3L11.7 7.8L11.7 10.0L10.5 10.3L9.0 11.0L7.5 11.2L6.0 11.1L4.5 11.1L3.0 10.9L1.5 10.4L0.0 9.9ZM0.0 25.9L1.5 25.4L3.0 25.0L4.5 24.6L6.0 24.6L7.5 24.9L9.0 25.0L10.5 25.5L11.7 25.8L11.7 28.1L10.5 28.7L9.0 28.9L7.5 29.4L6.0 29.4L4.5 29.2L3.0 29.1L1.5 28.6L0.0 28.1Z"/></svg><div class="n" style="color:#241614"><span style="letter-spacing:-0.16px">STCR2_AHV</span></div><div class="a" style="left:0;top:0;width:2px;height:70px;background:rgba(0,0,0,.38)"></div></div>
<div class="c" style="left:1004px;top:918px;width:20px;height:70px"><div class="a" style="left:0;top:0;width:100%;height:23.5px;background:repeating-linear-gradient(135deg,#1b1b1b 0,#1b1b1b 4.75px,transparent 4.75px,transparent 8.485px)"></div><div class="a" style="left:0;top:23.5px;width:100%;height:10.5px;background:repeating-linear-gradient(135deg,#1b1b1b 0,#1b1b1b 4.75px,transparent 4.75px,transparent 8.485px)"></div><div class="a" style="left:0;top:23.5px;width:100%;height:10.5px;background:linear-gradient(rgba(25,30,45,.05),rgba(25,30,45,.5))"></div><div class="a" style="left:0;top:34px;width:100%;height:36px;background:#9697b5"></div><svg width="20" height="36" style="left:0;top:34px"><use href="#gl" x="-992" fill="rgba(20,40,90,.22)"/></svg></div>
<div class="c" style="left:1024px;top:918px;width:28px;height:70px"><div class="a" style="left:0;top:0;width:100%;height:34px;background:#c4958d;border-top:2px solid #7a5853;border-bottom:2px solid #7a5853"></div><div class="a" style="left:0;top:34px;width:100%;height:36px;background:#9697b5"></div><svg width="28" height="36" style="left:0;top:34px"><use href="#gl" x="-1012" fill="rgba(20,40,90,.22)"/></svg><svg width="28.5" height="36" style="left:0;top:34px"><path fill="#1b1b1e" d="M0.0 7.7L1.5 7.5L3.0 7.3L4.5 7.2L6.0 7.0L7.5 6.8L9.0 6.8L10.5 6.7L12.0 6.5L13.5 6.7L15.0 6.5L16.5 6.5L18.0 6.5L19.5 6.8L21.0 6.8L22.5 7.0L24.0 7.0L25.5 7.4L27.0 7.5L28.5 7.7L28.5 7.9L28.5 10.1L28.5 9.9L27.0 10.4L25.5 10.5L24.0 10.6L22.5 10.9L21.0 10.8L19.5 11.0L18.0 11.1L16.5 11.2L15.0 11.1L13.5 11.1L12.0 11.2L10.5 11.0L9.0 10.9L7.5 11.0L6.0 10.9L4.5 10.5L3.0 10.5L1.5 10.1L0.0 10.0ZM0.0 25.8L1.5 25.7L3.0 25.4L4.5 25.2L6.0 25.0L7.5 25.0L9.0 24.9L10.5 24.7L12.0 24.6L13.5 24.6L15.0 24.7L16.5 24.6L18.0 24.7L19.5 24.9L21.0 25.1L22.5 25.0L24.0 25.3L25.5 25.4L27.0 25.7L28.5 25.8L28.5 25.9L28.5 28.0L28.5 28.0L27.0 28.3L25.5 28.4L24.0 28.6L22.5 28.9L21.0 29.2L19.5 29.1L18.0 29.4L16.5 29.4L15.0 29.4L13.5 29.4L12.0 29.4L10.5 29.3L9.0 29.0L7.5 29.0L6.0 29.0L4.5 28.7L3.0 28.6L1.5 28.5L0.0 28.2Z"/></svg><div class="n" style="color:#241614"><span style="letter-spacing:-0.16px">STCR2_AHV</span></div><div class="a" style="left:0;top:0;width:2px;height:70px;background:rgba(0,0,0,.38)"></div></div>
<div class="c" style="left:1052px;top:918px;width:12px;height:70px"><div class="a" style="left:0;top:0;width:100%;height:34px;background:#c4958d;border-top:2px solid #7a5853;border-bottom:2px solid #7a5853"></div><div class="a" style="left:0;top:34px;width:100%;height:36px;background:#9697b5"></div><svg width="12" height="36" style="left:0;top:34px"><use href="#gl" x="-1040" fill="rgba(20,40,90,.22)"/></svg><svg width="13.5" height="36" style="left:0;top:34px"><path fill="#1b1b1e" d="M0.0 7.7L1.5 7.3L3.0 7.0L4.5 6.6L6.0 6.5L7.5 6.7L9.0 6.7L10.5 6.9L12.0 7.4L13.5 7.9L13.5 7.8L13.5 9.9L13.5 10.0L12.0 10.5L10.5 11.0L9.0 11.1L7.5 11.3L6.0 11.3L4.5 11.2L3.0 10.9L1.5 10.5L0.0 10.1ZM0.0 26.0L1.5 25.4L3.0 25.2L4.5 24.7L6.0 24.7L7.5 24.7L9.0 24.8L10.5 25.0L12.0 25.6L13.5 26.0L13.5 26.0L13.5 28.2L13.5 28.1L12.0 28.7L10.5 28.8L9.0 29.1L7.5 29.4L6.0 29.5L4.5 29.1L3.0 28.9L1.5 28.6L0.0 28.0Z"/></svg><div class="n" style="color:#241614"><span style="letter-spacing:-0.16px">STCR2_AHV</span></div><div class="a" style="left:0;top:0;width:2px;height:70px;background:rgba(0,0,0,.38)"></div></div>
<div class="c" style="left:1064px;top:918px;width:18px;height:70px"><div class="a" style="left:0;top:0;width:100%;height:23.5px;background:repeating-linear-gradient(135deg,#1b1b1b 0,#1b1b1b 4.75px,transparent 4.75px,transparent 8.485px)"></div><div class="a" style="left:0;top:23.5px;width:100%;height:10.5px;background:repeating-linear-gradient(135deg,#1b1b1b 0,#1b1b1b 4.75px,transparent 4.75px,transparent 8.485px)"></div><div class="a" style="left:0;top:23.5px;width:100%;height:10.5px;background:linear-gradient(rgba(25,30,45,.05),rgba(25,30,45,.5))"></div><div class="a" style="left:0;top:34px;width:100%;height:36px;background:#9697b5"></div><svg width="18" height="36" style="left:0;top:34px"><use href="#gl" x="-1052" fill="rgba(20,40,90,.22)"/></svg></div>
<div class="c" style="left:1796px;top:918px;width:12px;height:70px"><div class="a" style="left:0;top:0;width:100%;height:34px;background:#c4958d;border-top:2px solid #7a5853;border-bottom:2px solid #7a5853"></div><div class="a" style="left:0;top:34px;width:100%;height:36px;background:#9697b5"></div><svg width="12" height="36" style="left:0;top:34px"><use href="#gl" x="-1784" fill="rgba(20,40,90,.22)"/></svg><svg width="11.0" height="36" style="left:0;top:34px"><path fill="#1b1b1e" d="M0.0 7.9L1.5 7.3L3.0 6.8L4.5 6.5L6.0 6.5L7.5 6.7L9.0 7.0L10.5 7.5L11.0 7.8L11.0 10.2L10.5 10.1L9.0 10.7L7.5 11.2L6.0 11.2L4.5 11.1L3.0 11.0L1.5 10.7L0.0 10.1ZM0.0 25.8L1.5 25.4L3.0 25.0L4.5 24.6L6.0 24.7L7.5 24.9L9.0 25.3L10.5 25.7L11.0 25.7L11.0 28.0L10.5 28.4L9.0 28.7L7.5 29.1L6.0 29.2L4.5 29.3L3.0 28.9L1.5 28.6L0.0 28.1Z"/></svg><div class="n" style="color:#241614"><span style="letter-spacing:-0.16px">STCR2_AHV</span></div><div class="a" style="left:0;top:0;width:2px;height:70px;background:rgba(0,0,0,.38)"></div></div>
<div class="c" style="left:1808px;top:918px;width:16px;height:70px"><div class="a" style="left:0;top:0;width:100%;height:23.5px;background:repeating-linear-gradient(135deg,#1b1b1b 0,#1b1b1b 4.75px,transparent 4.75px,transparent 8.485px)"></div><div class="a" style="left:0;top:23.5px;width:100%;height:10.5px;background:repeating-linear-gradient(135deg,#1b1b1b 0,#1b1b1b 4.75px,transparent 4.75px,transparent 8.485px)"></div><div class="a" style="left:0;top:23.5px;width:100%;height:10.5px;background:linear-gradient(rgba(25,30,45,.05),rgba(25,30,45,.5))"></div><div class="a" style="left:0;top:34px;width:100%;height:36px;background:#9697b5"></div><svg width="16" height="36" style="left:0;top:34px"><use href="#gl" x="-1796" fill="rgba(20,40,90,.22)"/></svg></div>
<div class="c" style="left:1824px;top:918px;width:12px;height:70px"><div class="a" style="left:0;top:0;width:100%;height:34px;background:#c4958d;border-top:2px solid #7a5853;border-bottom:2px solid #7a5853"></div><div class="a" style="left:0;top:34px;width:100%;height:36px;background:#9697b5"></div><svg width="12" height="36" style="left:0;top:34px"><use href="#gl" x="-1812" fill="rgba(20,40,90,.22)"/></svg><svg width="12.0" height="36" style="left:0;top:34px"><path fill="#1b1b1e" d="M0.0 7.8L1.5 7.1L3.0 6.8L4.5 6.7L6.0 6.6L7.5 6.7L9.0 6.9L10.5 7.3L12.0 7.9L12.0 7.7L12.0 9.9L12.0 10.0L10.5 10.5L9.0 11.0L7.5 11.3L6.0 11.1L4.5 11.0L3.0 11.0L1.5 10.4L0.0 10.1ZM0.0 25.8L1.5 25.4L3.0 25.0L4.5 24.6L6.0 24.7L7.5 24.8L9.0 25.0L10.5 25.4L12.0 25.8L12.0 25.9L12.0 28.2L12.0 28.2L10.5 28.6L9.0 29.1L7.5 29.1L6.0 29.5L4.5 29.2L3.0 29.1L1.5 28.6L0.0 28.3Z"/></svg><div class="n" style="color:#241614"><span style="letter-spacing:-0.16px">STCR2_AHV</span></div><div class="a" style="left:0;top:0;width:2px;height:70px;background:rgba(0,0,0,.38)"></div></div>
<div class="c" style="left:1836px;top:918px;width:18px;height:70px"><div class="a" style="left:0;top:0;width:100%;height:23.5px;background:repeating-linear-gradient(135deg,#1b1b1b 0,#1b1b1b 4.75px,transparent 4.75px,transparent 8.485px)"></div><div class="a" style="left:0;top:23.5px;width:100%;height:10.5px;background:repeating-linear-gradient(135deg,#1b1b1b 0,#1b1b1b 4.75px,transparent 4.75px,transparent 8.485px)"></div><div class="a" style="left:0;top:23.5px;width:100%;height:10.5px;background:linear-gradient(rgba(25,30,45,.05),rgba(25,30,45,.5))"></div><div class="a" style="left:0;top:34px;width:100%;height:36px;background:#9697b5"></div><svg width="18" height="36" style="left:0;top:34px"><use href="#gl" x="-1824" fill="rgba(20,40,90,.22)"/></svg></div>
<div class="c" style="left:1854px;top:918px;width:10px;height:70px"><div class="a" style="left:0;top:0;width:100%;height:34px;background:#c4958d;border-top:2px solid #7a5853;border-bottom:2px solid #7a5853"></div><div class="a" style="left:0;top:34px;width:100%;height:36px;background:#9697b5"></div><svg width="10" height="36" style="left:0;top:34px"><use href="#gl" x="-1842" fill="rgba(20,40,90,.22)"/></svg><svg width="10.5" height="36" style="left:0;top:34px"><path fill="#1b1b1e" d="M0.0 7.6L1.5 7.1L3.0 6.8L4.5 6.7L6.0 6.4L7.5 6.8L9.0 7.2L10.5 7.9L10.5 7.7L10.5 10.1L10.5 10.2L9.0 10.6L7.5 10.9L6.0 11.1L4.5 11.3L3.0 11.0L1.5 10.4L0.0 10.0ZM0.0 26.0L1.5 25.4L3.0 24.8L4.5 24.6L6.0 24.6L7.5 25.1L9.0 25.5L10.5 25.8L10.5 26.0L10.5 28.2L10.5 28.3L9.0 28.7L7.5 29.2L6.0 29.3L4.5 29.2L3.0 29.0L1.5 28.8L0.0 28.1Z"/></svg><div class="n" style="color:#241614"><span style="letter-spacing:-0.16px">STCR2_AHV</span></div><div class="a" style="left:0;top:0;width:2px;height:70px;background:rgba(0,0,0,.38)"></div></div>
<div class="c" style="left:1864px;top:918px;width:22px;height:70px"><div class="a" style="left:0;top:0;width:100%;height:23.5px;background:repeating-linear-gradient(135deg,#1b1b1b 0,#1b1b1b 4.75px,transparent 4.75px,transparent 8.485px)"></div><div class="a" style="left:0;top:23.5px;width:100%;height:10.5px;background:repeating-linear-gradient(135deg,#1b1b1b 0,#1b1b1b 4.75px,transparent 4.75px,transparent 8.485px)"></div><div class="a" style="left:0;top:23.5px;width:100%;height:10.5px;background:linear-gradient(rgba(25,30,45,.05),rgba(25,30,45,.5))"></div><div class="a" style="left:0;top:34px;width:100%;height:36px;background:#9697b5"></div><svg width="22" height="36" style="left:0;top:34px"><use href="#gl" x="-1852" fill="rgba(20,40,90,.22)"/></svg></div>
<div class="c" style="left:1886px;top:918px;width:40px;height:70px"><div class="a" style="left:0;top:0;width:100%;height:34px;background:#c4958d;border-top:2px solid #7a5853;border-bottom:2px solid #7a5853"></div><div class="a" style="left:0;top:34px;width:100%;height:36px;background:#9697b5"></div><svg width="40" height="36" style="left:0;top:34px"><use href="#gl" x="-1874" fill="rgba(20,40,90,.22)"/></svg><svg width="38.6" height="36" style="left:0;top:34px"><path fill="#1b1b1e" d="M0.0 7.7L1.5 7.7L3.0 7.4L4.5 7.2L6.0 7.1L7.5 7.2L9.0 6.9L10.5 6.7L12.0 6.7L13.5 6.8L15.0 6.6L16.5 6.4L18.0 6.5L19.5 6.7L21.0 6.4L22.5 6.5L24.0 6.8L25.5 6.8L27.0 6.8L28.5 6.8L30.0 7.1L31.5 7.2L33.0 7.2L34.5 7.3L36.0 7.6L37.5 7.7L38.6 7.8L38.6 10.0L37.5 10.1L36.0 10.3L34.5 10.6L33.0 10.6L31.5 10.6L30.0 10.8L28.5 10.8L27.0 10.9L25.5 11.0L24.0 11.1L22.5 11.2L21.0 11.3L19.5 11.2L18.0 11.4L16.5 11.3L15.0 11.2L13.5 11.0L12.0 11.2L10.5 11.0L9.0 10.9L7.5 10.8L6.0 10.7L4.5 10.4L3.0 10.4L1.5 10.3L0.0 10.1ZM0.0 25.9L1.5 25.6L3.0 25.7L4.5 25.3L6.0 25.3L7.5 25.3L9.0 24.9L10.5 24.9L12.0 24.9L13.5 24.9L15.0 24.7L16.5 24.8L18.0 24.8L19.5 24.5L21.0 24.6L22.5 24.7L24.0 24.6L25.5 24.7L27.0 25.0L28.5 25.0L30.0 25.2L31.5 25.2L33.0 25.4L34.5 25.4L36.0 25.6L37.5 25.6L38.6 25.9L38.6 28.3L37.5 28.3L36.0 28.3L34.5 28.6L33.0 28.6L31.5 28.8L30.0 28.9L28.5 29.1L27.0 29.2L25.5 29.3L24.0 29.1L22.5 29.2L21.0 29.3L19.5 29.4L18.0 29.4L16.5 29.2L15.0 29.3L13.5 29.3L12.0 29.1L10.5 29.1L9.0 29.0L7.5 28.7L6.0 28.6L4.5 28.7L3.0 28.4L1.5 28.4L0.0 28.2Z"/></svg><div class="n" style="color:#241614"><span style="letter-spacing:-0.16px">STCR2_AHV</span></div><div class="a" style="left:0;top:0;width:2px;height:70px;background:rgba(0,0,0,.38)"></div></div>
<div class="c" style="left:1926px;top:918px;width:18px;height:70px"><div class="a" style="left:0;top:0;width:100%;height:23.5px;background:repeating-linear-gradient(135deg,#1b1b1b 0,#1b1b1b 4.75px,transparent 4.75px,transparent 8.485px)"></div><div class="a" style="left:0;top:23.5px;width:100%;height:10.5px;background:repeating-linear-gradient(135deg,#1b1b1b 0,#1b1b1b 4.75px,transparent 4.75px,transparent 8.485px)"></div><div class="a" style="left:0;top:23.5px;width:100%;height:10.5px;background:linear-gradient(rgba(25,30,45,.05),rgba(25,30,45,.5))"></div><div class="a" style="left:0;top:34px;width:100%;height:36px;background:#9697b5"></div><svg width="18" height="36" style="left:0;top:34px"><use href="#gl" x="-1914" fill="rgba(20,40,90,.22)"/></svg></div>
<div class="c" style="left:1944px;top:918px;width:12px;height:70px"><div class="a" style="left:0;top:0;width:100%;height:34px;background:#c4958d;border-top:2px solid #7a5853;border-bottom:2px solid #7a5853"></div><div class="a" style="left:0;top:34px;width:100%;height:36px;background:#9697b5"></div><svg width="12" height="36" style="left:0;top:34px"><use href="#gl" x="-1932" fill="rgba(20,40,90,.22)"/></svg><svg width="11.7" height="36" style="left:0;top:34px"><path fill="#1b1b1e" d="M0.0 7.7L1.5 7.3L3.0 6.8L4.5 6.5L6.0 6.6L7.5 6.6L9.0 7.1L10.5 7.2L11.7 7.6L11.7 10.2L10.5 10.3L9.0 10.7L7.5 11.1L6.0 11.4L4.5 11.3L3.0 11.0L1.5 10.6L0.0 10.1ZM0.0 25.8L1.5 25.4L3.0 25.1L4.5 24.8L6.0 24.7L7.5 24.9L9.0 25.0L10.5 25.5L11.7 26.0L11.7 28.3L10.5 28.7L9.0 29.0L7.5 29.1L6.0 29.4L4.5 29.4L3.0 29.0L1.5 28.7L0.0 28.0Z"/></svg><div class="n" style="color:#241614"><span style="letter-spacing:-0.16px">STCR2_AHV</span></div><div class="a" style="left:0;top:0;width:2px;height:70px;background:rgba(0,0,0,.38)"></div></div>
<div class="c" style="left:1956px;top:918px;width:20px;height:70px"><div class="a" style="left:0;top:0;width:100%;height:23.5px;background:repeating-linear-gradient(135deg,#1b1b1b 0,#1b1b1b 4.75px,transparent 4.75px,transparent 8.485px)"></div><div class="a" style="left:0;top:23.5px;width:100%;height:10.5px;background:repeating-linear-gradient(135deg,#1b1b1b 0,#1b1b1b 4.75px,transparent 4.75px,transparent 8.485px)"></div><div class="a" style="left:0;top:23.5px;width:100%;height:10.5px;background:linear-gradient(rgba(25,30,45,.05),rgba(25,30,45,.5))"></div><div class="a" style="left:0;top:34px;width:100%;height:36px;background:#9697b5"></div><svg width="20" height="36" style="left:0;top:34px"><use href="#gl" x="-1944" fill="rgba(20,40,90,.22)"/></svg></div>
<div class="c" style="left:1976px;top:918px;width:28px;height:70px"><div class="a" style="left:0;top:0;width:100%;height:34px;background:#c4958d;border-top:2px solid #7a5853;border-bottom:2px solid #7a5853"></div><div class="a" style="left:0;top:34px;width:100%;height:36px;background:#9697b5"></div><svg width="28" height="36" style="left:0;top:34px"><use href="#gl" x="-1964" fill="rgba(20,40,90,.22)"/></svg><svg width="28.5" height="36" style="left:0;top:34px"><path fill="#1b1b1e" d="M0.0 7.7L1.5 7.7L3.0 7.3L4.5 7.2L6.0 7.0L7.5 7.0L9.0 6.9L10.5 6.7L12.0 6.5L13.5 6.6L15.0 6.5L16.5 6.7L18.0 6.8L19.5 6.7L21.0 6.9L22.5 6.9L24.0 7.3L25.5 7.2L27.0 7.6L28.5 7.8L28.5 7.6L28.5 10.1L28.5 10.0L27.0 10.3L25.5 10.5L24.0 10.7L22.5 10.9L21.0 11.1L19.5 11.1L18.0 11.2L16.5 11.2L15.0 11.4L13.5 11.4L12.0 11.3L10.5 11.2L9.0 11.2L7.5 10.9L6.0 10.7L4.5 10.5L3.0 10.4L1.5 10.2L0.0 10.0ZM0.0 25.7L1.5 25.7L3.0 25.6L4.5 25.3L6.0 25.0L7.5 25.0L9.0 24.7L10.5 24.6L12.0 24.7L13.5 24.8L15.0 24.8L16.5 24.6L18.0 24.8L19.5 24.7L21.0 24.8L22.5 25.1L24.0 25.4L25.5 25.5L27.0 25.5L28.5 25.9L28.5 26.0L28.5 28.0L28.5 28.0L27.0 28.4L25.5 28.5L24.0 28.7L22.5 28.9L21.0 29.0L19.5 29.2L18.0 29.2L16.5 29.4L15.0 29.4L13.5 29.4L12.0 29.2L10.5 29.2L9.0 29.0L7.5 29.1L6.0 28.9L4.5 28.6L3.0 28.5L1.5 28.4L0.0 28.1Z"/></svg><div class="n" style="color:#241614"><span style="letter-spacing:-0.16px">STCR2_AHV</span></div><div class="a" style="left:0;top:0;width:2px;height:70px;background:rgba(0,0,0,.38)"></div></div>
<div class="c" style="left:2004px;top:918px;width:12px;height:70px"><div class="a" style="left:0;top:0;width:100%;height:34px;background:#c4958d;border-top:2px solid #7a5853;border-bottom:2px solid #7a5853"></div><div class="a" style="left:0;top:34px;width:100%;height:36px;background:#9697b5"></div><svg width="12" height="36" style="left:0;top:34px"><use href="#gl" x="-1992" fill="rgba(20,40,90,.22)"/></svg><svg width="13.5" height="36" style="left:0;top:34px"><path fill="#1b1b1e" d="M0.0 7.7L1.5 7.3L3.0 6.9L4.5 6.6L6.0 6.7L7.5 6.4L9.0 6.6L10.5 7.0L12.0 7.2L13.5 7.9L13.5 7.7L13.5 10.0L13.5 10.1L12.0 10.4L10.5 10.7L9.0 11.2L7.5 11.4L6.0 11.2L4.5 11.2L3.0 10.9L1.5 10.5L0.0 10.1ZM0.0 25.8L1.5 25.6L3.0 25.2L4.5 24.9L6.0 24.6L7.5 24.6L9.0 24.8L10.5 25.1L12.0 25.5L13.5 25.8L13.5 25.9L13.5 28.1L13.5 28.0L12.0 28.6L10.5 28.9L9.0 29.1L7.5 29.4L6.0 29.3L4.5 29.3L3.0 29.1L1.5 28.6L0.0 28.0Z"/></svg><div class="n" style="color:#241614"><span style="letter-spacing:-0.16px">STCR2_AHV</span></div><div class="a" style="left:0;top:0;width:2px;height:70px;background:rgba(0,0,0,.38)"></div></div>
<div class="c" style="left:2016px;top:918px;width:22px;height:70px"><div class="a" style="left:0;top:0;width:100%;height:23.5px;background:repeating-linear-gradient(135deg,#1b1b1b 0,#1b1b1b 4.75px,transparent 4.75px,transparent 8.485px)"></div><div class="a" style="left:0;top:23.5px;width:100%;height:10.5px;background:repeating-linear-gradient(135deg,#1b1b1b 0,#1b1b1b 4.75px,transparent 4.75px,transparent 8.485px)"></div><div class="a" style="left:0;top:23.5px;width:100%;height:10.5px;background:linear-gradient(rgba(25,30,45,.05),rgba(25,30,45,.5))"></div><div class="a" style="left:0;top:34px;width:100%;height:36px;background:#9697b5"></div><svg width="22" height="36" style="left:0;top:34px"><use href="#gl" x="-2004" fill="rgba(20,40,90,.22)"/></svg></div>
<div class="c" style="left:130px;top:992px;width:238px;height:70px"><div class="a" style="left:0;top:0;width:100%;height:34px;background:#c4958d;border-top:2px solid #7a5853;border-bottom:2px solid #7a5853"></div><div class="a" style="left:0;top:34px;width:100%;height:36px;background:#9697b5"></div><svg width="238" height="36" style="left:0;top:34px"><use href="#gl" x="-118" fill="rgba(20,40,90,.22)"/></svg><svg width="238.0" height="36" style="left:0;top:34px"><use href="#wo" x="0.00"/><use href="#wo" x="118.00"/></svg><div class="n" style="color:#241614"><span style="letter-spacing:0.25px">OS_SHE_100_</span><span style="letter-spacing:1.56px">vocal_ambience_blessing_Am</span></div><div class="k" style="left:118px;top:2px;height:6px"></div><div class="k" style="left:118px;top:64px;height:6px"></div><div class="a" style="left:0;top:0;width:2px;height:70px;background:rgba(0,0,0,.38)"></div></div>
<div class="c" style="left:368px;top:992px;width:238px;height:70px"><div class="a" style="left:0;top:0;width:100%;height:34px;background:#c4958d;border-top:2px solid #7a5853;border-bottom:2px solid #7a5853"></div><div class="a" style="left:0;top:34px;width:100%;height:36px;background:#9697b5"></div><svg width="238" height="36" style="left:0;top:34px"><use href="#gl" x="-356" fill="rgba(20,40,90,.22)"/></svg><svg width="238.0" height="36" style="left:0;top:34px"><use href="#wo" x="0.00"/><use href="#wo" x="118.00"/></svg><div class="n" style="color:#241614"><span style="letter-spacing:0.25px">OS_SHE_100_</span><span style="letter-spacing:1.56px">vocal_ambience_blessing_Am</span></div><div class="k" style="left:118px;top:2px;height:6px"></div><div class="k" style="left:118px;top:64px;height:6px"></div><div class="a" style="left:0;top:0;width:2px;height:70px;background:rgba(0,0,0,.38)"></div></div>
<div class="c" style="left:606px;top:992px;width:476px;height:70px"><div class="a" style="left:0;top:0;width:100%;height:34px;background:#c4958d;border-top:2px solid #7a5853;border-bottom:2px solid #7a5853"></div><div class="a" style="left:0;top:34px;width:100%;height:36px;background:#9697b5"></div><svg width="476" height="36" style="left:0;top:34px"><use href="#gl" x="-594" fill="rgba(20,40,90,.22)"/></svg><svg width="476.0" height="36" style="left:0;top:34px"><use href="#wo" x="0.00"/><use href="#wo" x="118.00"/><use href="#wo" x="238.00"/><use href="#wo" x="356.00"/></svg><div class="n" style="color:#241614"><span style="letter-spacing:0.25px">OS_SHE_100_</span><span style="letter-spacing:1.56px">vocal_ambience_blessing_Am</span></div><div class="k" style="left:118px;top:2px;height:6px"></div><div class="k" style="left:118px;top:64px;height:6px"></div><div class="k" style="left:238px;top:2px;height:6px"></div><div class="k" style="left:238px;top:64px;height:6px"></div><div class="k" style="left:356px;top:2px;height:6px"></div><div class="k" style="left:356px;top:64px;height:6px"></div><div class="a" style="left:0;top:0;width:2px;height:70px;background:rgba(0,0,0,.38)"></div></div>
<div class="c" style="left:1082px;top:992px;width:476px;height:70px"><div class="a" style="left:0;top:0;width:100%;height:34px;background:#c4958d;border-top:2px solid #7a5853;border-bottom:2px solid #7a5853"></div><div class="a" style="left:0;top:34px;width:100%;height:36px;background:#9697b5"></div><svg width="476" height="36" style="left:0;top:34px"><use href="#gl" x="-1070" fill="rgba(20,40,90,.22)"/></svg><svg width="476.0" height="36" style="left:0;top:34px"><use href="#wo" x="0.00"/><use href="#wo" x="118.00"/><use href="#wo" x="238.00"/><use href="#wo" x="356.00"/></svg><div class="n" style="color:#241614"><span style="letter-spacing:0.25px">OS_SHE_100_</span><span style="letter-spacing:1.56px">vocal_ambience_blessing_Am</span></div><div class="k" style="left:118px;top:2px;height:6px"></div><div class="k" style="left:118px;top:64px;height:6px"></div><div class="k" style="left:238px;top:2px;height:6px"></div><div class="k" style="left:238px;top:64px;height:6px"></div><div class="k" style="left:356px;top:2px;height:6px"></div><div class="k" style="left:356px;top:64px;height:6px"></div><div class="a" style="left:0;top:0;width:2px;height:70px;background:rgba(0,0,0,.38)"></div></div>
<div class="c" style="left:1558px;top:992px;width:476px;height:70px"><div class="a" style="left:0;top:0;width:100%;height:34px;background:#c4958d;border-top:2px solid #7a5853;border-bottom:2px solid #7a5853"></div><div class="a" style="left:0;top:34px;width:100%;height:36px;background:#9697b5"></div><svg width="476" height="36" style="left:0;top:34px"><use href="#gl" x="-1546" fill="rgba(20,40,90,.22)"/></svg><svg width="476.0" height="36" style="left:0;top:34px"><use href="#wo" x="0.00"/><use href="#wo" x="118.00"/><use href="#wo" x="238.00"/><use href="#wo" x="358.00"/></svg><div class="n" style="color:#241614"><span style="letter-spacing:0.25px">OS_SHE_100_</span><span style="letter-spacing:1.56px">vocal_ambience_blessing_Am</span></div><div class="k" style="left:118px;top:2px;height:6px"></div><div class="k" style="left:118px;top:64px;height:6px"></div><div class="k" style="left:238px;top:2px;height:6px"></div><div class="k" style="left:238px;top:64px;height:6px"></div><div class="k" style="left:358px;top:2px;height:6px"></div><div class="k" style="left:358px;top:64px;height:6px"></div><div class="a" style="left:0;top:0;width:2px;height:70px;background:rgba(0,0,0,.38)"></div></div>
<div class="c" style="left:2034px;top:992px;width:238px;height:70px"><div class="a" style="left:0;top:0;width:100%;height:34px;background:#c4958d;border-top:2px solid #7a5853;border-bottom:2px solid #7a5853"></div><div class="a" style="left:0;top:34px;width:100%;height:36px;background:#9697b5"></div><svg width="238" height="36" style="left:0;top:34px"><use href="#gl" x="-2022" fill="rgba(20,40,90,.22)"/></svg><svg width="238.0" height="36" style="left:0;top:34px"><use href="#wo" x="0.00"/><use href="#wo" x="120.00"/></svg><div class="n" style="color:#241614"><span style="letter-spacing:0.25px">OS_SHE_100_</span><span style="letter-spacing:1.56px">vocal_ambience_blessing_Am</span></div><div class="k" style="left:120px;top:2px;height:6px"></div><div class="k" style="left:120px;top:64px;height:6px"></div><div class="a" style="left:0;top:0;width:2px;height:70px;background:rgba(0,0,0,.38)"></div></div>
<div class="c" style="left:2272px;top:992px;width:10px;height:70px"><div class="a" style="left:0;top:0;width:100%;height:23.5px;background:repeating-linear-gradient(135deg,#1b1b1b 0,#1b1b1b 4.75px,transparent 4.75px,transparent 8.485px)"></div><div class="a" style="left:0;top:23.5px;width:100%;height:10.5px;background:repeating-linear-gradient(135deg,#1b1b1b 0,#1b1b1b 4.75px,transparent 4.75px,transparent 8.485px)"></div><div class="a" style="left:0;top:23.5px;width:100%;height:10.5px;background:linear-gradient(rgba(25,30,45,.05),rgba(25,30,45,.5))"></div><div class="a" style="left:0;top:34px;width:100%;height:36px;background:#9697b5"></div><svg width="10" height="36" style="left:0;top:34px"><use href="#gl" x="-2260" fill="rgba(20,40,90,.22)"/></svg></div>
<div class="c" style="left:10px;top:1140px;width:342px;height:34px;background:#ee4b42;border-top:2px solid #7c2823;border-bottom:2px solid #7c2823"><div class="a" style="left:0;top:-2px;width:100%;height:34px"><div class="n" style="color:#3a0b0b"><span style="letter-spacing:0.6px">SS_DA_120_</span><span style="letter-spacing:1.66px">drum_loop_afro_house_jungle_fire</span></div><div class="k" style="left:120px;top:2px;height:6px"></div><div class="k" style="left:120px;top:26px;height:6px"></div><div class="k" style="left:238px;top:2px;height:6px"></div><div class="k" style="left:238px;top:26px;height:6px"></div><div class="a" style="right:0;top:2px;width:9px;height:30px;background:linear-gradient(to left,rgba(0,0,0,.17) 0,rgba(0,0,0,.17) 3.5px,rgba(0,0,0,0) 8.5px)"></div><div class="a" style="left:2px;top:2px;width:5px;height:30px;background:linear-gradient(to right,rgba(0,0,0,.13) 0,rgba(0,0,0,0) 5px)"></div></div></div>
<div class="c" style="left:368px;top:1140px;width:208px;height:34px;background:#ee4b42;border-top:2px solid #7c2823;border-bottom:2px solid #7c2823"><div class="a" style="left:0;top:-2px;width:100%;height:34px"><div class="n" style="color:#3a0b0b"><span style="letter-spacing:0.6px">SS_DA_120_</span><span style="letter-spacing:1.66px">drum_loop_afro_house_jungle_fire</span></div><div class="k" style="left:118px;top:2px;height:6px"></div><div class="k" style="left:118px;top:26px;height:6px"></div><div class="a" style="left:0;top:0;width:2px;height:34px;background:rgba(0,0,0,.38)"></div><div class="a" style="right:0;top:2px;width:9px;height:30px;background:linear-gradient(to left,rgba(0,0,0,.17) 0,rgba(0,0,0,.17) 3.5px,rgba(0,0,0,0) 8.5px)"></div><div class="a" style="left:2px;top:2px;width:5px;height:30px;background:linear-gradient(to right,rgba(0,0,0,.13) 0,rgba(0,0,0,0) 5px)"></div></div></div>
<div class="c" style="left:576px;top:1140px;width:30px;height:34px;background:#6a6a6a;border-top:2px solid #4c4c4c;border-bottom:2px solid #4c4c4c"><div class="a" style="left:0;top:-2px;width:100%;height:34px"><div class="n" style="color:#3a3a3a"><span style="letter-spacing:0.6px">SS_DA_120_</span><span style="letter-spacing:1.66px">drum_loop_afro_house_jungle_fire</span></div><div class="a" style="left:0;top:0;width:2px;height:34px;background:rgba(0,0,0,.38)"></div></div></div>
<div class="c" style="left:606px;top:1140px;width:476px;height:34px;background:#ee4b42;border-top:2px solid #7c2823;border-bottom:2px solid #7c2823"><div class="a" style="left:0;top:-2px;width:100%;height:34px"><div class="n" style="color:#3a0b0b"><span style="letter-spacing:0.6px">SS_DA_120_</span><span style="letter-spacing:1.66px">drum_loop_afro_house_jungle_fire</span></div><div class="k" style="left:118px;top:2px;height:6px"></div><div class="k" style="left:118px;top:26px;height:6px"></div><div class="k" style="left:238px;top:2px;height:6px"></div><div class="k" style="left:238px;top:26px;height:6px"></div><div class="k" style="left:356px;top:2px;height:6px"></div><div class="k" style="left:356px;top:26px;height:6px"></div><div class="a" style="left:0;top:0;width:2px;height:34px;background:rgba(0,0,0,.38)"></div><div class="a" style="right:0;top:2px;width:9px;height:30px;background:linear-gradient(to left,rgba(0,0,0,.17) 0,rgba(0,0,0,.17) 3.5px,rgba(0,0,0,0) 8.5px)"></div><div class="a" style="left:2px;top:2px;width:5px;height:30px;background:linear-gradient(to right,rgba(0,0,0,.13) 0,rgba(0,0,0,0) 5px)"></div></div></div>
<div class="c" style="left:1558px;top:1140px;width:446px;height:34px;background:#ee4b42;border-top:2px solid #7c2823;border-bottom:2px solid #7c2823"><div class="a" style="left:0;top:-2px;width:100%;height:34px"><div class="n" style="color:#3a0b0b"><span style="letter-spacing:0.6px">SS_DA_120_</span><span style="letter-spacing:1.66px">drum_loop_afro_house_jungle_fire</span></div><div class="k" style="left:118px;top:2px;height:6px"></div><div class="k" style="left:118px;top:26px;height:6px"></div><div class="k" style="left:238px;top:2px;height:6px"></div><div class="k" style="left:238px;top:26px;height:6px"></div><div class="k" style="left:358px;top:2px;height:6px"></div><div class="k" style="left:358px;top:26px;height:6px"></div><div class="a" style="left:0;top:0;width:2px;height:34px;background:rgba(0,0,0,.38)"></div><div class="a" style="right:0;top:2px;width:9px;height:30px;background:linear-gradient(to left,rgba(0,0,0,.17) 0,rgba(0,0,0,.17) 3.5px,rgba(0,0,0,0) 8.5px)"></div><div class="a" style="left:2px;top:2px;width:5px;height:30px;background:linear-gradient(to right,rgba(0,0,0,.13) 0,rgba(0,0,0,0) 5px)"></div></div></div>
<div class="c" style="left:2034px;top:1140px;width:224px;height:34px;background:#ee4b42;border-top:2px solid #7c2823;border-bottom:2px solid #7c2823"><div class="a" style="left:0;top:-2px;width:100%;height:34px"><div class="n" style="color:#3a0b0b"><span style="letter-spacing:0.6px">SS_DA_120_</span><span style="letter-spacing:1.66px">drum_loop_afro_house_jungle_fire</span></div><div class="k" style="left:120px;top:2px;height:6px"></div><div class="k" style="left:120px;top:26px;height:6px"></div><div class="a" style="left:0;top:0;width:2px;height:34px;background:rgba(0,0,0,.38)"></div><div class="a" style="right:0;top:2px;width:9px;height:30px;background:linear-gradient(to left,rgba(0,0,0,.17) 0,rgba(0,0,0,.17) 3.5px,rgba(0,0,0,0) 8.5px)"></div><div class="a" style="left:2px;top:2px;width:5px;height:30px;background:linear-gradient(to right,rgba(0,0,0,.13) 0,rgba(0,0,0,0) 5px)"></div></div></div>
<div class="c" style="left:2272px;top:1140px;width:120px;height:34px;background:#ee4b42;border-top:2px solid #7c2823;border-bottom:2px solid #7c2823"><div class="a" style="left:0;top:-2px;width:100%;height:34px"><div class="n" style="color:#3a0b0b"><span style="letter-spacing:0.6px">SS_DA_120_</span><span style="letter-spacing:1.66px">drum_loop_afro_house_jungle_fire</span></div><div class="a" style="left:0;top:0;width:2px;height:34px;background:rgba(0,0,0,.38)"></div><div class="a" style="right:0;top:2px;width:9px;height:30px;background:linear-gradient(to left,rgba(0,0,0,.17) 0,rgba(0,0,0,.17) 3.5px,rgba(0,0,0,0) 8.5px)"></div><div class="a" style="left:2px;top:2px;width:5px;height:30px;background:linear-gradient(to right,rgba(0,0,0,.13) 0,rgba(0,0,0,0) 5px)"></div></div></div>
<div class="c" style="left:70px;top:1178px;width:282px;height:34px;background:#ee4b42;border-top:2px solid #7c2823;border-bottom:2px solid #7c2823"><div class="a" style="left:0;top:-2px;width:100%;height:34px"><div class="n" style="color:#3a0b0b"><span style="letter-spacing:-0.13px">RARE_PBP4</span><span style="letter-spacing:1.5px">_75_brushes_feel</span></div><div class="k" style="left:60px;top:2px;height:6px"></div><div class="k" style="left:60px;top:26px;height:6px"></div><div class="k" style="left:118px;top:2px;height:6px"></div><div class="k" style="left:118px;top:26px;height:6px"></div><div class="k" style="left:178px;top:2px;height:6px"></div><div class="k" style="left:178px;top:26px;height:6px"></div><div class="k" style="left:238px;top:2px;height:6px"></div><div class="k" style="left:238px;top:26px;height:6px"></div><div class="a" style="left:0;top:0;width:2px;height:34px;background:rgba(0,0,0,.38)"></div><div class="a" style="right:0;top:2px;width:9px;height:30px;background:linear-gradient(to left,rgba(0,0,0,.17) 0,rgba(0,0,0,.17) 3.5px,rgba(0,0,0,0) 8.5px)"></div><div class="a" style="left:2px;top:2px;width:5px;height:30px;background:linear-gradient(to right,rgba(0,0,0,.13) 0,rgba(0,0,0,0) 5px)"></div></div></div>
<div class="c" style="left:368px;top:1178px;width:208px;height:34px;background:#ee4b42;border-top:2px solid #7c2823;border-bottom:2px solid #7c2823"><div class="a" style="left:0;top:-2px;width:100%;height:34px"><div class="n" style="color:#3a0b0b"><span style="letter-spacing:-0.13px">RARE_PBP4</span><span style="letter-spacing:1.5px">_75_brushes_feel</span></div><div class="k" style="left:60px;top:2px;height:6px"></div><div class="k" style="left:60px;top:26px;height:6px"></div><div class="k" style="left:118px;top:2px;height:6px"></div><div class="k" style="left:118px;top:26px;height:6px"></div><div class="k" style="left:178px;top:2px;height:6px"></div><div class="k" style="left:178px;top:26px;height:6px"></div><div class="a" style="left:0;top:0;width:2px;height:34px;background:rgba(0,0,0,.38)"></div><div class="a" style="right:0;top:2px;width:9px;height:30px;background:linear-gradient(to left,rgba(0,0,0,.17) 0,rgba(0,0,0,.17) 3.5px,rgba(0,0,0,0) 8.5px)"></div><div class="a" style="left:2px;top:2px;width:5px;height:30px;background:linear-gradient(to right,rgba(0,0,0,.13) 0,rgba(0,0,0,0) 5px)"></div></div></div>
<div class="c" style="left:576px;top:1178px;width:30px;height:34px;background:#6a6a6a;border-top:2px solid #4c4c4c;border-bottom:2px solid #4c4c4c"><div class="a" style="left:0;top:-2px;width:100%;height:34px"><div class="n" style="color:#3a3a3a"><span style="letter-spacing:-0.13px">RARE_PBP4</span><span style="letter-spacing:1.5px">_75_brushes_feel</span></div><div class="a" style="left:0;top:0;width:2px;height:34px;background:rgba(0,0,0,.38)"></div></div></div>
<div class="c" style="left:606px;top:1178px;width:118px;height:34px;background:#ee4b42;border-top:2px solid #7c2823;border-bottom:2px solid #7c2823"><div class="a" style="left:0;top:-2px;width:100%;height:34px"><div class="n" style="color:#3a0b0b"><span style="letter-spacing:-0.13px">RARE_PBP4</span><span style="letter-spacing:1.5px">_75_brushes_feel</span></div><div class="k" style="left:60px;top:2px;height:6px"></div><div class="k" style="left:60px;top:26px;height:6px"></div><div class="a" style="left:0;top:0;width:2px;height:34px;background:rgba(0,0,0,.38)"></div><div class="a" style="right:0;top:2px;width:9px;height:30px;background:linear-gradient(to left,rgba(0,0,0,.17) 0,rgba(0,0,0,.17) 3.5px,rgba(0,0,0,0) 8.5px)"></div><div class="a" style="left:2px;top:2px;width:5px;height:30px;background:linear-gradient(to right,rgba(0,0,0,.13) 0,rgba(0,0,0,0) 5px)"></div></div></div>
<div class="c" style="left:724px;top:1178px;width:358px;height:34px;background:#ee4b42;border-top:2px solid #7c2823;border-bottom:2px solid #7c2823"><div class="a" style="left:0;top:-2px;width:100%;height:34px"><div class="n" style="color:#3a0b0b"><span style="letter-spacing:-0.13px">RARE_PBP4</span><span style="letter-spacing:1.5px">_75_brushes_feel</span></div><div class="k" style="left:60px;top:2px;height:6px"></div><div class="k" style="left:60px;top:26px;height:6px"></div><div class="k" style="left:120px;top:2px;height:6px"></div><div class="k" style="left:120px;top:26px;height:6px"></div><div class="k" style="left:180px;top:2px;height:6px"></div><div class="k" style="left:180px;top:26px;height:6px"></div><div class="k" style="left:238px;top:2px;height:6px"></div><div class="k" style="left:238px;top:26px;height:6px"></div><div class="k" style="left:298px;top:2px;height:6px"></div><div class="k" style="left:298px;top:26px;height:6px"></div><div class="a" style="left:0;top:0;width:2px;height:34px;background:rgba(0,0,0,.38)"></div><div class="a" style="right:0;top:2px;width:9px;height:30px;background:linear-gradient(to left,rgba(0,0,0,.17) 0,rgba(0,0,0,.17) 3.5px,rgba(0,0,0,0) 8.5px)"></div><div class="a" style="left:2px;top:2px;width:5px;height:30px;background:linear-gradient(to right,rgba(0,0,0,.13) 0,rgba(0,0,0,0) 5px)"></div></div></div>
<div class="c" style="left:1320px;top:1178px;width:118px;height:34px;background:#ee4b42;border-top:2px solid #7c2823;border-bottom:2px solid #7c2823"><div class="a" style="left:0;top:-2px;width:100%;height:34px"><div class="n" style="color:#3a0b0b"><span style="letter-spacing:-0.13px">RARE_PBP4</span><span style="letter-spacing:1.5px">_75_brushes_feel</span></div><div class="k" style="left:60px;top:2px;height:6px"></div><div class="k" style="left:60px;top:26px;height:6px"></div><div class="a" style="left:0;top:0;width:2px;height:34px;background:rgba(0,0,0,.38)"></div><div class="a" style="right:0;top:2px;width:9px;height:30px;background:linear-gradient(to left,rgba(0,0,0,.17) 0,rgba(0,0,0,.17) 3.5px,rgba(0,0,0,0) 8.5px)"></div><div class="a" style="left:2px;top:2px;width:5px;height:30px;background:linear-gradient(to right,rgba(0,0,0,.13) 0,rgba(0,0,0,0) 5px)"></div></div></div>
<div class="c" style="left:1438px;top:1178px;width:60px;height:34px;background:#ee4b42;border-top:2px solid #7c2823;border-bottom:2px solid #7c2823"><div class="a" style="left:0;top:-2px;width:100%;height:34px"><div class="n" style="color:#3a0b0b"><span style="letter-spacing:-0.13px">RARE_PBP4</span><span style="letter-spacing:1.5px">_75_brushes_feel</span></div><div class="a" style="left:0;top:0;width:2px;height:34px;background:rgba(0,0,0,.38)"></div><div class="a" style="right:0;top:2px;width:9px;height:30px;background:linear-gradient(to left,rgba(0,0,0,.17) 0,rgba(0,0,0,.17) 3.5px,rgba(0,0,0,0) 8.5px)"></div><div class="a" style="left:2px;top:2px;width:5px;height:30px;background:linear-gradient(to right,rgba(0,0,0,.13) 0,rgba(0,0,0,0) 5px)"></div></div></div>
<div class="c" style="left:1558px;top:1178px;width:118px;height:34px;background:#ee4b42;border-top:2px solid #7c2823;border-bottom:2px solid #7c2823"><div class="a" style="left:0;top:-2px;width:100%;height:34px"><div class="n" style="color:#3a0b0b"><span style="letter-spacing:-0.13px">RARE_PBP4</span><span style="letter-spacing:1.5px">_75_brushes_feel</span></div><div class="k" style="left:60px;top:2px;height:6px"></div><div class="k" style="left:60px;top:26px;height:6px"></div><div class="a" style="left:0;top:0;width:2px;height:34px;background:rgba(0,0,0,.38)"></div><div class="a" style="right:0;top:2px;width:9px;height:30px;background:linear-gradient(to left,rgba(0,0,0,.17) 0,rgba(0,0,0,.17) 3.5px,rgba(0,0,0,0) 8.5px)"></div><div class="a" style="left:2px;top:2px;width:5px;height:30px;background:linear-gradient(to right,rgba(0,0,0,.13) 0,rgba(0,0,0,0) 5px)"></div></div></div>
<div class="c" style="left:1676px;top:1178px;width:358px;height:34px;background:#ee4b42;border-top:2px solid #7c2823;border-bottom:2px solid #7c2823"><div class="a" style="left:0;top:-2px;width:100%;height:34px"><div class="n" style="color:#3a0b0b"><span style="letter-spacing:-0.13px">RARE_PBP4</span><span style="letter-spacing:1.5px">_75_brushes_feel</span></div><div class="k" style="left:60px;top:2px;height:6px"></div><div class="k" style="left:60px;top:26px;height:6px"></div><div class="k" style="left:120px;top:2px;height:6px"></div><div class="k" style="left:120px;top:26px;height:6px"></div><div class="k" style="left:180px;top:2px;height:6px"></div><div class="k" style="left:180px;top:26px;height:6px"></div><div class="k" style="left:240px;top:2px;height:6px"></div><div class="k" style="left:240px;top:26px;height:6px"></div><div class="k" style="left:298px;top:2px;height:6px"></div><div class="k" style="left:298px;top:26px;height:6px"></div><div class="a" style="left:0;top:0;width:2px;height:34px;background:rgba(0,0,0,.38)"></div><div class="a" style="right:0;top:2px;width:9px;height:30px;background:linear-gradient(to left,rgba(0,0,0,.17) 0,rgba(0,0,0,.17) 3.5px,rgba(0,0,0,0) 8.5px)"></div><div class="a" style="left:2px;top:2px;width:5px;height:30px;background:linear-gradient(to right,rgba(0,0,0,.13) 0,rgba(0,0,0,0) 5px)"></div></div></div>
<div class="c" style="left:2034px;top:1178px;width:120px;height:34px;background:#ee4b42;border-top:2px solid #7c2823;border-bottom:2px solid #7c2823"><div class="a" style="left:0;top:-2px;width:100%;height:34px"><div class="n" style="color:#3a0b0b"><span style="letter-spacing:-0.13px">RARE_PBP4</span><span style="letter-spacing:1.5px">_75_brushes_feel</span></div><div class="k" style="left:60px;top:2px;height:6px"></div><div class="k" style="left:60px;top:26px;height:6px"></div><div class="a" style="left:0;top:0;width:2px;height:34px;background:rgba(0,0,0,.38)"></div><div class="a" style="right:0;top:2px;width:9px;height:30px;background:linear-gradient(to left,rgba(0,0,0,.17) 0,rgba(0,0,0,.17) 3.5px,rgba(0,0,0,0) 8.5px)"></div><div class="a" style="left:2px;top:2px;width:5px;height:30px;background:linear-gradient(to right,rgba(0,0,0,.13) 0,rgba(0,0,0,0) 5px)"></div></div></div>
<div class="c" style="left:2154px;top:1178px;width:238px;height:34px;background:#ee4b42;border-top:2px solid #7c2823;border-bottom:2px solid #7c2823"><div class="a" style="left:0;top:-2px;width:100%;height:34px"><div class="n" style="color:#3a0b0b"><span style="letter-spacing:-0.13px">RARE_PBP4</span><span style="letter-spacing:1.5px">_75_brushes_feel</span></div><div class="k" style="left:58px;top:2px;height:6px"></div><div class="k" style="left:58px;top:26px;height:6px"></div><div class="k" style="left:118px;top:2px;height:6px"></div><div class="k" style="left:118px;top:26px;height:6px"></div><div class="k" style="left:178px;top:2px;height:6px"></div><div class="k" style="left:178px;top:26px;height:6px"></div><div class="a" style="left:0;top:0;width:2px;height:34px;background:rgba(0,0,0,.38)"></div><div class="a" style="right:0;top:2px;width:9px;height:30px;background:linear-gradient(to left,rgba(0,0,0,.17) 0,rgba(0,0,0,.17) 3.5px,rgba(0,0,0,0) 8.5px)"></div><div class="a" style="left:2px;top:2px;width:5px;height:30px;background:linear-gradient(to right,rgba(0,0,0,.13) 0,rgba(0,0,0,0) 5px)"></div></div></div>
<div class="c" style="left:12px;top:1216px;width:14px;height:34px;background:#ee4b42;border-top:2px solid #7c2823;border-bottom:2px solid #7c2823"><div class="a" style="left:0;top:-2px;width:100%;height:34px"><div class="n" style="color:#3a0b0b"><span style="letter-spacing:0.6px">T_TSJF_</span></div><div class="a" style="right:0;top:2px;width:9px;height:30px;background:linear-gradient(to left,rgba(0,0,0,.17) 0,rgba(0,0,0,.17) 3.5px,rgba(0,0,0,0) 8.5px)"></div><div class="a" style="left:2px;top:2px;width:5px;height:30px;background:linear-gradient(to right,rgba(0,0,0,.13) 0,rgba(0,0,0,0) 5px)"></div></div></div>
<div class="c" style="left:26px;top:1216px;width:6px;height:34px;background:#ee4b42;border-top:2px solid #7c2823;border-bottom:2px solid #7c2823"><div class="a" style="left:0;top:-2px;width:100%;height:34px"><div class="n" style="color:#3a0b0b"><span style="letter-spacing:0.6px">T_TSJF_</span></div><div class="a" style="left:0;top:0;width:2px;height:34px;background:rgba(0,0,0,.38)"></div></div></div>
<div class="c" style="left:32px;top:1216px;width:8px;height:34px;background:#ee4b42;border-top:2px solid #7c2823;border-bottom:2px solid #7c2823"><div class="a" style="left:0;top:-2px;width:100%;height:34px"><div class="n" style="color:#3a0b0b"><span style="letter-spacing:0.6px">T_TSJF_</span></div><div class="k" style="left:8px;top:2px;height:6px"></div><div class="k" style="left:8px;top:26px;height:6px"></div><div class="a" style="left:0;top:0;width:2px;height:34px;background:rgba(0,0,0,.38)"></div></div></div>
<div class="c" style="left:42px;top:1216px;width:12px;height:34px;background:#ee4b42;border-top:2px solid #7c2823;border-bottom:2px solid #7c2823"><div class="a" style="left:0;top:-2px;width:100%;height:34px"><div class="n" style="color:#3a0b0b"><span style="letter-spacing:0.6px">T_TSJF_</span></div><div class="a" style="left:0;top:0;width:2px;height:34px;background:rgba(0,0,0,.38)"></div><div class="a" style="right:0;top:2px;width:9px;height:30px;background:linear-gradient(to left,rgba(0,0,0,.17) 0,rgba(0,0,0,.17) 3.5px,rgba(0,0,0,0) 8.5px)"></div><div class="a" style="left:2px;top:2px;width:5px;height:30px;background:linear-gradient(to right,rgba(0,0,0,.13) 0,rgba(0,0,0,0) 5px)"></div></div></div>
<div class="c" style="left:56px;top:1216px;width:14px;height:34px;background:#ee4b42;border-top:2px solid #7c2823;border-bottom:2px solid #7c2823"><div class="a" style="left:0;top:-2px;width:100%;height:34px"><div class="n" style="color:#3a0b0b"><span style="letter-spacing:0.6px">T_TSJF_</span></div><div class="k" style="left:14px;top:2px;height:6px"></div><div class="k" style="left:14px;top:26px;height:6px"></div><div class="a" style="left:0;top:0;width:2px;height:34px;background:rgba(0,0,0,.38)"></div><div class="a" style="right:0;top:2px;width:9px;height:30px;background:linear-gradient(to left,rgba(0,0,0,.17) 0,rgba(0,0,0,.17) 3.5px,rgba(0,0,0,0) 8.5px)"></div><div class="a" style="left:2px;top:2px;width:5px;height:30px;background:linear-gradient(to right,rgba(0,0,0,.13) 0,rgba(0,0,0,0) 5px)"></div></div></div>
<div class="c" style="left:72px;top:1216px;width:28px;height:34px;background:#ee4b42;border-top:2px solid #7c2823;border-bottom:2px solid #7c2823"><div class="a" style="left:0;top:-2px;width:100%;height:34px"><div class="n" style="color:#3a0b0b"><span style="letter-spacing:0.6px">T_TSJF_</span></div><div class="k" style="left:12px;top:2px;height:6px"></div><div class="k" style="left:12px;top:26px;height:6px"></div><div class="k" style="left:28px;top:2px;height:6px"></div><div class="k" style="left:28px;top:26px;height:6px"></div><div class="a" style="left:0;top:0;width:2px;height:34px;background:rgba(0,0,0,.38)"></div><div class="a" style="right:0;top:2px;width:9px;height:30px;background:linear-gradient(to left,rgba(0,0,0,.17) 0,rgba(0,0,0,.17) 3.5px,rgba(0,0,0,0) 8.5px)"></div><div class="a" style="left:2px;top:2px;width:5px;height:30px;background:linear-gradient(to right,rgba(0,0,0,.13) 0,rgba(0,0,0,0) 5px)"></div></div></div>
<div class="c" style="left:102px;top:1216px;width:28px;height:34px;background:#ee4b42;border-top:2px solid #7c2823;border-bottom:2px solid #7c2823"><div class="a" style="left:0;top:-2px;width:100%;height:34px"><div class="n" style="color:#3a0b0b"><span style="letter-spacing:0.6px">T_TSJF_</span></div><div class="k" style="left:12px;top:2px;height:6px"></div><div class="k" style="left:12px;top:26px;height:6px"></div><div class="a" style="left:0;top:0;width:2px;height:34px;background:rgba(0,0,0,.38)"></div><div class="a" style="right:0;top:2px;width:9px;height:30px;background:linear-gradient(to left,rgba(0,0,0,.17) 0,rgba(0,0,0,.17) 3.5px,rgba(0,0,0,0) 8.5px)"></div><div class="a" style="left:2px;top:2px;width:5px;height:30px;background:linear-gradient(to right,rgba(0,0,0,.13) 0,rgba(0,0,0,0) 5px)"></div></div></div>
<div class="c" style="left:130px;top:1216px;width:88px;height:34px;background:#ee4b42;border-top:2px solid #7c2823;border-bottom:2px solid #7c2823"><div class="a" style="left:0;top:-2px;width:100%;height:34px"><div class="n" style="color:#3a0b0b"><span style="letter-spacing:0.6px">T_TSJF_</span></div><div class="k" style="left:14px;top:2px;height:6px"></div><div class="k" style="left:14px;top:26px;height:6px"></div><div class="k" style="left:30px;top:2px;height:6px"></div><div class="k" style="left:30px;top:26px;height:6px"></div><div class="k" style="left:44px;top:2px;height:6px"></div><div class="k" style="left:44px;top:26px;height:6px"></div><div class="k" style="left:58px;top:2px;height:6px"></div><div class="k" style="left:58px;top:26px;height:6px"></div><div class="k" style="left:74px;top:2px;height:6px"></div><div class="k" style="left:74px;top:26px;height:6px"></div><div class="a" style="left:0;top:0;width:2px;height:34px;background:rgba(0,0,0,.38)"></div><div class="a" style="right:0;top:2px;width:9px;height:30px;background:linear-gradient(to left,rgba(0,0,0,.17) 0,rgba(0,0,0,.17) 3.5px,rgba(0,0,0,0) 8.5px)"></div><div class="a" style="left:2px;top:2px;width:5px;height:30px;background:linear-gradient(to right,rgba(0,0,0,.13) 0,rgba(0,0,0,0) 5px)"></div></div></div>
<div class="c" style="left:218px;top:1216px;width:30px;height:34px;background:#ee4b42;border-top:2px solid #7c2823;border-bottom:2px solid #7c2823"><div class="a" style="left:0;top:-2px;width:100%;height:34px"><div class="n" style="color:#3a0b0b"><span style="letter-spacing:0.6px">T_TSJF_</span></div><div class="a" style="left:0;top:0;width:2px;height:34px;background:rgba(0,0,0,.38)"></div><div class="a" style="right:0;top:2px;width:9px;height:30px;background:linear-gradient(to left,rgba(0,0,0,.17) 0,rgba(0,0,0,.17) 3.5px,rgba(0,0,0,0) 8.5px)"></div><div class="a" style="left:2px;top:2px;width:5px;height:30px;background:linear-gradient(to right,rgba(0,0,0,.13) 0,rgba(0,0,0,0) 5px)"></div></div></div>
<div class="c" style="left:248px;top:1216px;width:90px;height:34px;background:#ee4b42;border-top:2px solid #7c2823;border-bottom:2px solid #7c2823"><div class="a" style="left:0;top:-2px;width:100%;height:34px"><div class="n" style="color:#3a0b0b"><span style="letter-spacing:0.6px">T_TSJF_</span></div><div class="k" style="left:16px;top:2px;height:6px"></div><div class="k" style="left:16px;top:26px;height:6px"></div><div class="k" style="left:30px;top:2px;height:6px"></div><div class="k" style="left:30px;top:26px;height:6px"></div><div class="k" style="left:46px;top:2px;height:6px"></div><div class="k" style="left:46px;top:26px;height:6px"></div><div class="k" style="left:60px;top:2px;height:6px"></div><div class="k" style="left:60px;top:26px;height:6px"></div><div class="k" style="left:74px;top:2px;height:6px"></div><div class="k" style="left:74px;top:26px;height:6px"></div><div class="a" style="left:0;top:0;width:2px;height:34px;background:rgba(0,0,0,.38)"></div><div class="a" style="right:0;top:2px;width:9px;height:30px;background:linear-gradient(to left,rgba(0,0,0,.17) 0,rgba(0,0,0,.17) 3.5px,rgba(0,0,0,0) 8.5px)"></div><div class="a" style="left:2px;top:2px;width:5px;height:30px;background:linear-gradient(to right,rgba(0,0,0,.13) 0,rgba(0,0,0,0) 5px)"></div></div></div>
<div class="c" style="left:338px;top:1216px;width:30px;height:34px;background:#ee4b42;border-top:2px solid #7c2823;border-bottom:2px solid #7c2823"><div class="a" style="left:0;top:-2px;width:100%;height:34px"><div class="n" style="color:#3a0b0b"><span style="letter-spacing:0.6px">T_TSJF_</span></div><div class="a" style="left:0;top:0;width:2px;height:34px;background:rgba(0,0,0,.38)"></div><div class="a" style="right:0;top:2px;width:9px;height:30px;background:linear-gradient(to left,rgba(0,0,0,.17) 0,rgba(0,0,0,.17) 3.5px,rgba(0,0,0,0) 8.5px)"></div><div class="a" style="left:2px;top:2px;width:5px;height:30px;background:linear-gradient(to right,rgba(0,0,0,.13) 0,rgba(0,0,0,0) 5px)"></div></div></div>
<div class="c" style="left:368px;top:1216px;width:88px;height:34px;background:#ee4b42;border-top:2px solid #7c2823;border-bottom:2px solid #7c2823"><div class="a" style="left:0;top:-2px;width:100%;height:34px"><div class="n" style="color:#3a0b0b"><span style="letter-spacing:0.6px">T_TSJF_</span></div><div class="k" style="left:14px;top:2px;height:6px"></div><div class="k" style="left:14px;top:26px;height:6px"></div><div class="k" style="left:30px;top:2px;height:6px"></div><div class="k" style="left:30px;top:26px;height:6px"></div><div class="k" style="left:44px;top:2px;height:6px"></div><div class="k" style="left:44px;top:26px;height:6px"></div><div class="k" style="left:60px;top:2px;height:6px"></div><div class="k" style="left:60px;top:26px;height:6px"></div><div class="k" style="left:74px;top:2px;height:6px"></div><div class="k" style="left:74px;top:26px;height:6px"></div><div class="a" style="left:0;top:0;width:2px;height:34px;background:rgba(0,0,0,.38)"></div><div class="a" style="right:0;top:2px;width:9px;height:30px;background:linear-gradient(to left,rgba(0,0,0,.17) 0,rgba(0,0,0,.17) 3.5px,rgba(0,0,0,0) 8.5px)"></div><div class="a" style="left:2px;top:2px;width:5px;height:30px;background:linear-gradient(to right,rgba(0,0,0,.13) 0,rgba(0,0,0,0) 5px)"></div></div></div>
<div class="c" style="left:456px;top:1216px;width:30px;height:34px;background:#ee4b42;border-top:2px solid #7c2823;border-bottom:2px solid #7c2823"><div class="a" style="left:0;top:-2px;width:100%;height:34px"><div class="n" style="color:#3a0b0b"><span style="letter-spacing:0.6px">T_TSJF_</span></div><div class="a" style="left:0;top:0;width:2px;height:34px;background:rgba(0,0,0,.38)"></div><div class="a" style="right:0;top:2px;width:9px;height:30px;background:linear-gradient(to left,rgba(0,0,0,.17) 0,rgba(0,0,0,.17) 3.5px,rgba(0,0,0,0) 8.5px)"></div><div class="a" style="left:2px;top:2px;width:5px;height:30px;background:linear-gradient(to right,rgba(0,0,0,.13) 0,rgba(0,0,0,0) 5px)"></div></div></div>
<div class="c" style="left:486px;top:1216px;width:90px;height:34px;background:#ee4b42;border-top:2px solid #7c2823;border-bottom:2px solid #7c2823"><div class="a" style="left:0;top:-2px;width:100%;height:34px"><div class="n" style="color:#3a0b0b"><span style="letter-spacing:0.6px">T_TSJF_</span></div><div class="k" style="left:16px;top:2px;height:6px"></div><div class="k" style="left:16px;top:26px;height:6px"></div><div class="k" style="left:30px;top:2px;height:6px"></div><div class="k" style="left:30px;top:26px;height:6px"></div><div class="k" style="left:46px;top:2px;height:6px"></div><div class="k" style="left:46px;top:26px;height:6px"></div><div class="k" style="left:60px;top:2px;height:6px"></div><div class="k" style="left:60px;top:26px;height:6px"></div><div class="k" style="left:74px;top:2px;height:6px"></div><div class="k" style="left:74px;top:26px;height:6px"></div><div class="a" style="left:0;top:0;width:2px;height:34px;background:rgba(0,0,0,.38)"></div><div class="a" style="right:0;top:2px;width:9px;height:30px;background:linear-gradient(to left,rgba(0,0,0,.17) 0,rgba(0,0,0,.17) 3.5px,rgba(0,0,0,0) 8.5px)"></div><div class="a" style="left:2px;top:2px;width:5px;height:30px;background:linear-gradient(to right,rgba(0,0,0,.13) 0,rgba(0,0,0,0) 5px)"></div></div></div>
<div class="c" style="left:576px;top:1216px;width:30px;height:34px;background:#6a6a6a;border-top:2px solid #4c4c4c;border-bottom:2px solid #4c4c4c"><div class="a" style="left:0;top:-2px;width:100%;height:34px"><div class="n" style="color:#3a3a3a"><span style="letter-spacing:0.6px">T_TSJF_</span></div><div class="a" style="left:0;top:0;width:2px;height:34px;background:rgba(0,0,0,.38)"></div></div></div>
<div class="c" style="left:606px;top:1216px;width:88px;height:34px;background:#ee4b42;border-top:2px solid #7c2823;border-bottom:2px solid #7c2823"><div class="a" style="left:0;top:-2px;width:100%;height:34px"><div class="n" style="color:#3a0b0b"><span style="letter-spacing:0.6px">T_TSJF_</span></div><div class="k" style="left:14px;top:2px;height:6px"></div><div class="k" style="left:14px;top:26px;height:6px"></div><div class="k" style="left:30px;top:2px;height:6px"></div><div class="k" style="left:30px;top:26px;height:6px"></div><div class="k" style="left:44px;top:2px;height:6px"></div><div class="k" style="left:44px;top:26px;height:6px"></div><div class="k" style="left:60px;top:2px;height:6px"></div><div class="k" style="left:60px;top:26px;height:6px"></div><div class="k" style="left:74px;top:2px;height:6px"></div><div class="k" style="left:74px;top:26px;height:6px"></div><div class="a" style="left:0;top:0;width:2px;height:34px;background:rgba(0,0,0,.38)"></div><div class="a" style="right:0;top:2px;width:9px;height:30px;background:linear-gradient(to left,rgba(0,0,0,.17) 0,rgba(0,0,0,.17) 3.5px,rgba(0,0,0,0) 8.5px)"></div><div class="a" style="left:2px;top:2px;width:5px;height:30px;background:linear-gradient(to right,rgba(0,0,0,.13) 0,rgba(0,0,0,0) 5px)"></div></div></div>
<div class="c" style="left:694px;top:1216px;width:24px;height:34px;background:#ee4b42;border-top:2px solid #7c2823;border-bottom:2px solid #7c2823"><div class="a" style="left:0;top:-2px;width:100%;height:34px"><div class="n" style="color:#3a0b0b"><span style="letter-spacing:0.6px">T_TSJF_</span></div><div class="a" style="left:0;top:0;width:2px;height:34px;background:rgba(0,0,0,.38)"></div><div class="a" style="right:0;top:2px;width:9px;height:30px;background:linear-gradient(to left,rgba(0,0,0,.17) 0,rgba(0,0,0,.17) 3.5px,rgba(0,0,0,0) 8.5px)"></div><div class="a" style="left:2px;top:2px;width:5px;height:30px;background:linear-gradient(to right,rgba(0,0,0,.13) 0,rgba(0,0,0,0) 5px)"></div></div></div>
<div class="c" style="left:718px;top:1216px;width:6px;height:34px;background:#ee4b42;border-top:2px solid #7c2823;border-bottom:2px solid #7c2823"><div class="a" style="left:0;top:-2px;width:100%;height:34px"><div class="n" style="color:#3a0b0b"><span style="letter-spacing:0.6px">T_TSJF_</span></div><div class="a" style="left:0;top:0;width:2px;height:34px;background:rgba(0,0,0,.38)"></div></div></div>
<div class="c" style="left:724px;top:1216px;width:90px;height:34px;background:#ee4b42;border-top:2px solid #7c2823;border-bottom:2px solid #7c2823"><div class="a" style="left:0;top:-2px;width:100%;height:34px"><div class="n" style="color:#3a0b0b"><span style="letter-spacing:0.6px">T_TSJF_</span></div><div class="k" style="left:16px;top:2px;height:6px"></div><div class="k" style="left:16px;top:26px;height:6px"></div><div class="k" style="left:30px;top:2px;height:6px"></div><div class="k" style="left:30px;top:26px;height:6px"></div><div class="k" style="left:46px;top:2px;height:6px"></div><div class="k" style="left:46px;top:26px;height:6px"></div><div class="k" style="left:60px;top:2px;height:6px"></div><div class="k" style="left:60px;top:26px;height:6px"></div><div class="k" style="left:76px;top:2px;height:6px"></div><div class="k" style="left:76px;top:26px;height:6px"></div><div class="a" style="left:0;top:0;width:2px;height:34px;background:rgba(0,0,0,.38)"></div><div class="a" style="right:0;top:2px;width:9px;height:30px;background:linear-gradient(to left,rgba(0,0,0,.17) 0,rgba(0,0,0,.17) 3.5px,rgba(0,0,0,0) 8.5px)"></div><div class="a" style="left:2px;top:2px;width:5px;height:30px;background:linear-gradient(to right,rgba(0,0,0,.13) 0,rgba(0,0,0,0) 5px)"></div></div></div>
<div class="c" style="left:814px;top:1216px;width:30px;height:34px;background:#ee4b42;border-top:2px solid #7c2823;border-bottom:2px solid #7c2823"><div class="a" style="left:0;top:-2px;width:100%;height:34px"><div class="n" style="color:#3a0b0b"><span style="letter-spacing:0.6px">T_TSJF_</span></div><div class="a" style="left:0;top:0;width:2px;height:34px;background:rgba(0,0,0,.38)"></div><div class="a" style="right:0;top:2px;width:9px;height:30px;background:linear-gradient(to left,rgba(0,0,0,.17) 0,rgba(0,0,0,.17) 3.5px,rgba(0,0,0,0) 8.5px)"></div><div class="a" style="left:2px;top:2px;width:5px;height:30px;background:linear-gradient(to right,rgba(0,0,0,.13) 0,rgba(0,0,0,0) 5px)"></div></div></div>
<div class="c" style="left:844px;top:1216px;width:88px;height:34px;background:#ee4b42;border-top:2px solid #7c2823;border-bottom:2px solid #7c2823"><div class="a" style="left:0;top:-2px;width:100%;height:34px"><div class="n" style="color:#3a0b0b"><span style="letter-spacing:0.6px">T_TSJF_</span></div><div class="k" style="left:14px;top:2px;height:6px"></div><div class="k" style="left:14px;top:26px;height:6px"></div><div class="k" style="left:30px;top:2px;height:6px"></div><div class="k" style="left:30px;top:26px;height:6px"></div><div class="k" style="left:44px;top:2px;height:6px"></div><div class="k" style="left:44px;top:26px;height:6px"></div><div class="k" style="left:60px;top:2px;height:6px"></div><div class="k" style="left:60px;top:26px;height:6px"></div><div class="k" style="left:74px;top:2px;height:6px"></div><div class="k" style="left:74px;top:26px;height:6px"></div><div class="a" style="left:0;top:0;width:2px;height:34px;background:rgba(0,0,0,.38)"></div><div class="a" style="right:0;top:2px;width:9px;height:30px;background:linear-gradient(to left,rgba(0,0,0,.17) 0,rgba(0,0,0,.17) 3.5px,rgba(0,0,0,0) 8.5px)"></div><div class="a" style="left:2px;top:2px;width:5px;height:30px;background:linear-gradient(to right,rgba(0,0,0,.13) 0,rgba(0,0,0,0) 5px)"></div></div></div>
<div class="c" style="left:932px;top:1216px;width:30px;height:34px;background:#ee4b42;border-top:2px solid #7c2823;border-bottom:2px solid #7c2823"><div class="a" style="left:0;top:-2px;width:100%;height:34px"><div class="n" style="color:#3a0b0b"><span style="letter-spacing:0.6px">T_TSJF_</span></div><div class="a" style="left:0;top:0;width:2px;height:34px;background:rgba(0,0,0,.38)"></div><div class="a" style="right:0;top:2px;width:9px;height:30px;background:linear-gradient(to left,rgba(0,0,0,.17) 0,rgba(0,0,0,.17) 3.5px,rgba(0,0,0,0) 8.5px)"></div><div class="a" style="left:2px;top:2px;width:5px;height:30px;background:linear-gradient(to right,rgba(0,0,0,.13) 0,rgba(0,0,0,0) 5px)"></div></div></div>
<div class="c" style="left:962px;top:1216px;width:90px;height:34px;background:#ee4b42;border-top:2px solid #7c2823;border-bottom:2px solid #7c2823"><div class="a" style="left:0;top:-2px;width:100%;height:34px"><div class="n" style="color:#3a0b0b"><span style="letter-spacing:0.6px">T_TSJF_</span></div><div class="k" style="left:16px;top:2px;height:6px"></div><div class="k" style="left:16px;top:26px;height:6px"></div><div class="k" style="left:30px;top:2px;height:6px"></div><div class="k" style="left:30px;top:26px;height:6px"></div><div class="k" style="left:46px;top:2px;height:6px"></div><div class="k" style="left:46px;top:26px;height:6px"></div><div class="k" style="left:60px;top:2px;height:6px"></div><div class="k" style="left:60px;top:26px;height:6px"></div><div class="k" style="left:76px;top:2px;height:6px"></div><div class="k" style="left:76px;top:26px;height:6px"></div><div class="a" style="left:0;top:0;width:2px;height:34px;background:rgba(0,0,0,.38)"></div><div class="a" style="right:0;top:2px;width:9px;height:30px;background:linear-gradient(to left,rgba(0,0,0,.17) 0,rgba(0,0,0,.17) 3.5px,rgba(0,0,0,0) 8.5px)"></div><div class="a" style="left:2px;top:2px;width:5px;height:30px;background:linear-gradient(to right,rgba(0,0,0,.13) 0,rgba(0,0,0,0) 5px)"></div></div></div>
<div class="c" style="left:1052px;top:1216px;width:30px;height:34px;background:#ee4b42;border-top:2px solid #7c2823;border-bottom:2px solid #7c2823"><div class="a" style="left:0;top:-2px;width:100%;height:34px"><div class="n" style="color:#3a0b0b"><span style="letter-spacing:0.6px">T_TSJF_</span></div><div class="a" style="left:0;top:0;width:2px;height:34px;background:rgba(0,0,0,.38)"></div><div class="a" style="right:0;top:2px;width:9px;height:30px;background:linear-gradient(to left,rgba(0,0,0,.17) 0,rgba(0,0,0,.17) 3.5px,rgba(0,0,0,0) 8.5px)"></div><div class="a" style="left:2px;top:2px;width:5px;height:30px;background:linear-gradient(to right,rgba(0,0,0,.13) 0,rgba(0,0,0,0) 5px)"></div></div></div>
<div class="c" style="left:1320px;top:1216px;width:90px;height:34px;background:#ee4b42;border-top:2px solid #7c2823;border-bottom:2px solid #7c2823"><div class="a" style="left:0;top:-2px;width:100%;height:34px"><div class="n" style="color:#3a0b0b"><span style="letter-spacing:0.6px">T_TSJF_</span></div><div class="k" style="left:14px;top:2px;height:6px"></div><div class="k" style="left:14px;top:26px;height:6px"></div><div class="k" style="left:30px;top:2px;height:6px"></div><div class="k" style="left:30px;top:26px;height:6px"></div><div class="k" style="left:44px;top:2px;height:6px"></div><div class="k" style="left:44px;top:26px;height:6px"></div><div class="k" style="left:60px;top:2px;height:6px"></div><div class="k" style="left:60px;top:26px;height:6px"></div><div class="k" style="left:74px;top:2px;height:6px"></div><div class="k" style="left:74px;top:26px;height:6px"></div><div class="a" style="left:0;top:0;width:2px;height:34px;background:rgba(0,0,0,.38)"></div><div class="a" style="right:0;top:2px;width:9px;height:30px;background:linear-gradient(to left,rgba(0,0,0,.17) 0,rgba(0,0,0,.17) 3.5px,rgba(0,0,0,0) 8.5px)"></div><div class="a" style="left:2px;top:2px;width:5px;height:30px;background:linear-gradient(to right,rgba(0,0,0,.13) 0,rgba(0,0,0,0) 5px)"></div></div></div>
<div class="c" style="left:1410px;top:1216px;width:22px;height:34px;background:#ee4b42;border-top:2px solid #7c2823;border-bottom:2px solid #7c2823"><div class="a" style="left:0;top:-2px;width:100%;height:34px"><div class="n" style="color:#3a0b0b"><span style="letter-spacing:0.6px">T_TSJF_</span></div><div class="a" style="left:0;top:0;width:2px;height:34px;background:rgba(0,0,0,.38)"></div><div class="a" style="right:0;top:2px;width:9px;height:30px;background:linear-gradient(to left,rgba(0,0,0,.17) 0,rgba(0,0,0,.17) 3.5px,rgba(0,0,0,0) 8.5px)"></div><div class="a" style="left:2px;top:2px;width:5px;height:30px;background:linear-gradient(to right,rgba(0,0,0,.13) 0,rgba(0,0,0,0) 5px)"></div></div></div>
<div class="c" style="left:1432px;top:1216px;width:6px;height:34px;background:#ee4b42;border-top:2px solid #7c2823;border-bottom:2px solid #7c2823"><div class="a" style="left:0;top:-2px;width:100%;height:34px"><div class="n" style="color:#3a0b0b"><span style="letter-spacing:0.6px">T_TSJF_</span></div><div class="a" style="left:0;top:0;width:2px;height:34px;background:rgba(0,0,0,.38)"></div></div></div>
<div class="c" style="left:1438px;top:1216px;width:60px;height:34px;background:#ee4b42;border-top:2px solid #7c2823;border-bottom:2px solid #7c2823"><div class="a" style="left:0;top:-2px;width:100%;height:34px"><div class="n" style="color:#3a0b0b"><span style="letter-spacing:0.6px">T_TSJF_</span></div><div class="k" style="left:16px;top:2px;height:6px"></div><div class="k" style="left:16px;top:26px;height:6px"></div><div class="k" style="left:30px;top:2px;height:6px"></div><div class="k" style="left:30px;top:26px;height:6px"></div><div class="k" style="left:46px;top:2px;height:6px"></div><div class="k" style="left:46px;top:26px;height:6px"></div><div class="a" style="left:0;top:0;width:2px;height:34px;background:rgba(0,0,0,.38)"></div><div class="a" style="right:0;top:2px;width:9px;height:30px;background:linear-gradient(to left,rgba(0,0,0,.17) 0,rgba(0,0,0,.17) 3.5px,rgba(0,0,0,0) 8.5px)"></div><div class="a" style="left:2px;top:2px;width:5px;height:30px;background:linear-gradient(to right,rgba(0,0,0,.13) 0,rgba(0,0,0,0) 5px)"></div></div></div>
<div class="c" style="left:1558px;top:1216px;width:90px;height:34px;background:#ee4b42;border-top:2px solid #7c2823;border-bottom:2px solid #7c2823"><div class="a" style="left:0;top:-2px;width:100%;height:34px"><div class="n" style="color:#3a0b0b"><span style="letter-spacing:0.6px">T_TSJF_</span></div><div class="k" style="left:14px;top:2px;height:6px"></div><div class="k" style="left:14px;top:26px;height:6px"></div><div class="k" style="left:30px;top:2px;height:6px"></div><div class="k" style="left:30px;top:26px;height:6px"></div><div class="k" style="left:44px;top:2px;height:6px"></div><div class="k" style="left:44px;top:26px;height:6px"></div><div class="k" style="left:60px;top:2px;height:6px"></div><div class="k" style="left:60px;top:26px;height:6px"></div><div class="k" style="left:74px;top:2px;height:6px"></div><div class="k" style="left:74px;top:26px;height:6px"></div><div class="a" style="left:0;top:0;width:2px;height:34px;background:rgba(0,0,0,.38)"></div><div class="a" style="right:0;top:2px;width:9px;height:30px;background:linear-gradient(to left,rgba(0,0,0,.17) 0,rgba(0,0,0,.17) 3.5px,rgba(0,0,0,0) 8.5px)"></div><div class="a" style="left:2px;top:2px;width:5px;height:30px;background:linear-gradient(to right,rgba(0,0,0,.13) 0,rgba(0,0,0,0) 5px)"></div></div></div>
<div class="c" style="left:1648px;top:1216px;width:22px;height:34px;background:#ee4b42;border-top:2px solid #7c2823;border-bottom:2px solid #7c2823"><div class="a" style="left:0;top:-2px;width:100%;height:34px"><div class="n" style="color:#3a0b0b"><span style="letter-spacing:0.6px">T_TSJF_</span></div><div class="a" style="left:0;top:0;width:2px;height:34px;background:rgba(0,0,0,.38)"></div><div class="a" style="right:0;top:2px;width:9px;height:30px;background:linear-gradient(to left,rgba(0,0,0,.17) 0,rgba(0,0,0,.17) 3.5px,rgba(0,0,0,0) 8.5px)"></div><div class="a" style="left:2px;top:2px;width:5px;height:30px;background:linear-gradient(to right,rgba(0,0,0,.13) 0,rgba(0,0,0,0) 5px)"></div></div></div>
<div class="c" style="left:1670px;top:1216px;width:6px;height:34px;background:#ee4b42;border-top:2px solid #7c2823;border-bottom:2px solid #7c2823"><div class="a" style="left:0;top:-2px;width:100%;height:34px"><div class="n" style="color:#3a0b0b"><span style="letter-spacing:0.6px">T_TSJF_</span></div><div class="a" style="left:0;top:0;width:2px;height:34px;background:rgba(0,0,0,.38)"></div></div></div>
<div class="c" style="left:1676px;top:1216px;width:90px;height:34px;background:#ee4b42;border-top:2px solid #7c2823;border-bottom:2px solid #7c2823"><div class="a" style="left:0;top:-2px;width:100%;height:34px"><div class="n" style="color:#3a0b0b"><span style="letter-spacing:0.6px">T_TSJF_</span></div><div class="k" style="left:16px;top:2px;height:6px"></div><div class="k" style="left:16px;top:26px;height:6px"></div><div class="k" style="left:30px;top:2px;height:6px"></div><div class="k" style="left:30px;top:26px;height:6px"></div><div class="k" style="left:46px;top:2px;height:6px"></div><div class="k" style="left:46px;top:26px;height:6px"></div><div class="k" style="left:60px;top:2px;height:6px"></div><div class="k" style="left:60px;top:26px;height:6px"></div><div class="k" style="left:76px;top:2px;height:6px"></div><div class="k" style="left:76px;top:26px;height:6px"></div><div class="a" style="left:0;top:0;width:2px;height:34px;background:rgba(0,0,0,.38)"></div><div class="a" style="right:0;top:2px;width:9px;height:30px;background:linear-gradient(to left,rgba(0,0,0,.17) 0,rgba(0,0,0,.17) 3.5px,rgba(0,0,0,0) 8.5px)"></div><div class="a" style="left:2px;top:2px;width:5px;height:30px;background:linear-gradient(to right,rgba(0,0,0,.13) 0,rgba(0,0,0,0) 5px)"></div></div></div>
<div class="c" style="left:1766px;top:1216px;width:30px;height:34px;background:#ee4b42;border-top:2px solid #7c2823;border-bottom:2px solid #7c2823"><div class="a" style="left:0;top:-2px;width:100%;height:34px"><div class="n" style="color:#3a0b0b"><span style="letter-spacing:0.6px">T_TSJF_</span></div><div class="a" style="left:0;top:0;width:2px;height:34px;background:rgba(0,0,0,.38)"></div><div class="a" style="right:0;top:2px;width:9px;height:30px;background:linear-gradient(to left,rgba(0,0,0,.17) 0,rgba(0,0,0,.17) 3.5px,rgba(0,0,0,0) 8.5px)"></div><div class="a" style="left:2px;top:2px;width:5px;height:30px;background:linear-gradient(to right,rgba(0,0,0,.13) 0,rgba(0,0,0,0) 5px)"></div></div></div>
<div class="c" style="left:1796px;top:1216px;width:90px;height:34px;background:#ee4b42;border-top:2px solid #7c2823;border-bottom:2px solid #7c2823"><div class="a" style="left:0;top:-2px;width:100%;height:34px"><div class="n" style="color:#3a0b0b"><span style="letter-spacing:0.6px">T_TSJF_</span></div><div class="k" style="left:14px;top:2px;height:6px"></div><div class="k" style="left:14px;top:26px;height:6px"></div><div class="k" style="left:30px;top:2px;height:6px"></div><div class="k" style="left:30px;top:26px;height:6px"></div><div class="k" style="left:44px;top:2px;height:6px"></div><div class="k" style="left:44px;top:26px;height:6px"></div><div class="k" style="left:60px;top:2px;height:6px"></div><div class="k" style="left:60px;top:26px;height:6px"></div><div class="k" style="left:74px;top:2px;height:6px"></div><div class="k" style="left:74px;top:26px;height:6px"></div><div class="a" style="left:0;top:0;width:2px;height:34px;background:rgba(0,0,0,.38)"></div><div class="a" style="right:0;top:2px;width:9px;height:30px;background:linear-gradient(to left,rgba(0,0,0,.17) 0,rgba(0,0,0,.17) 3.5px,rgba(0,0,0,0) 8.5px)"></div><div class="a" style="left:2px;top:2px;width:5px;height:30px;background:linear-gradient(to right,rgba(0,0,0,.13) 0,rgba(0,0,0,0) 5px)"></div></div></div>
<div class="c" style="left:1886px;top:1216px;width:30px;height:34px;background:#ee4b42;border-top:2px solid #7c2823;border-bottom:2px solid #7c2823"><div class="a" style="left:0;top:-2px;width:100%;height:34px"><div class="n" style="color:#3a0b0b"><span style="letter-spacing:0.6px">T_TSJF_</span></div><div class="a" style="left:0;top:0;width:2px;height:34px;background:rgba(0,0,0,.38)"></div><div class="a" style="right:0;top:2px;width:9px;height:30px;background:linear-gradient(to left,rgba(0,0,0,.17) 0,rgba(0,0,0,.17) 3.5px,rgba(0,0,0,0) 8.5px)"></div><div class="a" style="left:2px;top:2px;width:5px;height:30px;background:linear-gradient(to right,rgba(0,0,0,.13) 0,rgba(0,0,0,0) 5px)"></div></div></div>
<div class="c" style="left:1916px;top:1216px;width:88px;height:34px;background:#ee4b42;border-top:2px solid #7c2823;border-bottom:2px solid #7c2823"><div class="a" style="left:0;top:-2px;width:100%;height:34px"><div class="n" style="color:#3a0b0b"><span style="letter-spacing:0.6px">T_TSJF_</span></div><div class="k" style="left:14px;top:2px;height:6px"></div><div class="k" style="left:14px;top:26px;height:6px"></div><div class="k" style="left:28px;top:2px;height:6px"></div><div class="k" style="left:28px;top:26px;height:6px"></div><div class="k" style="left:44px;top:2px;height:6px"></div><div class="k" style="left:44px;top:26px;height:6px"></div><div class="k" style="left:58px;top:2px;height:6px"></div><div class="k" style="left:58px;top:26px;height:6px"></div><div class="k" style="left:74px;top:2px;height:6px"></div><div class="k" style="left:74px;top:26px;height:6px"></div><div class="a" style="left:0;top:0;width:2px;height:34px;background:rgba(0,0,0,.38)"></div><div class="a" style="right:0;top:2px;width:9px;height:30px;background:linear-gradient(to left,rgba(0,0,0,.17) 0,rgba(0,0,0,.17) 3.5px,rgba(0,0,0,0) 8.5px)"></div><div class="a" style="left:2px;top:2px;width:5px;height:30px;background:linear-gradient(to right,rgba(0,0,0,.13) 0,rgba(0,0,0,0) 5px)"></div></div></div>
<div class="c" style="left:2004px;top:1216px;width:30px;height:34px;background:#ee4b42;border-top:2px solid #7c2823;border-bottom:2px solid #7c2823"><div class="a" style="left:0;top:-2px;width:100%;height:34px"><div class="n" style="color:#3a0b0b"><span style="letter-spacing:0.6px">T_TSJF_</span></div><div class="a" style="left:0;top:0;width:2px;height:34px;background:rgba(0,0,0,.38)"></div><div class="a" style="right:0;top:2px;width:9px;height:30px;background:linear-gradient(to left,rgba(0,0,0,.17) 0,rgba(0,0,0,.17) 3.5px,rgba(0,0,0,0) 8.5px)"></div><div class="a" style="left:2px;top:2px;width:5px;height:30px;background:linear-gradient(to right,rgba(0,0,0,.13) 0,rgba(0,0,0,0) 5px)"></div></div></div>
<div class="c" style="left:2034px;top:1216px;width:90px;height:34px;background:#ee4b42;border-top:2px solid #7c2823;border-bottom:2px solid #7c2823"><div class="a" style="left:0;top:-2px;width:100%;height:34px"><div class="n" style="color:#3a0b0b"><span style="letter-spacing:0.6px">T_TSJF_</span></div><div class="k" style="left:14px;top:2px;height:6px"></div><div class="k" style="left:14px;top:26px;height:6px"></div><div class="k" style="left:30px;top:2px;height:6px"></div><div class="k" style="left:30px;top:26px;height:6px"></div><div class="k" style="left:44px;top:2px;height:6px"></div><div class="k" style="left:44px;top:26px;height:6px"></div><div class="k" style="left:60px;top:2px;height:6px"></div><div class="k" style="left:60px;top:26px;height:6px"></div><div class="k" style="left:74px;top:2px;height:6px"></div><div class="k" style="left:74px;top:26px;height:6px"></div><div class="a" style="left:0;top:0;width:2px;height:34px;background:rgba(0,0,0,.38)"></div><div class="a" style="right:0;top:2px;width:9px;height:30px;background:linear-gradient(to left,rgba(0,0,0,.17) 0,rgba(0,0,0,.17) 3.5px,rgba(0,0,0,0) 8.5px)"></div><div class="a" style="left:2px;top:2px;width:5px;height:30px;background:linear-gradient(to right,rgba(0,0,0,.13) 0,rgba(0,0,0,0) 5px)"></div></div></div>
<div class="c" style="left:2124px;top:1216px;width:22px;height:34px;background:#ee4b42;border-top:2px solid #7c2823;border-bottom:2px solid #7c2823"><div class="a" style="left:0;top:-2px;width:100%;height:34px"><div class="n" style="color:#3a0b0b"><span style="letter-spacing:0.6px">T_TSJF_</span></div><div class="a" style="left:0;top:0;width:2px;height:34px;background:rgba(0,0,0,.38)"></div><div class="a" style="right:0;top:2px;width:9px;height:30px;background:linear-gradient(to left,rgba(0,0,0,.17) 0,rgba(0,0,0,.17) 3.5px,rgba(0,0,0,0) 8.5px)"></div><div class="a" style="left:2px;top:2px;width:5px;height:30px;background:linear-gradient(to right,rgba(0,0,0,.13) 0,rgba(0,0,0,0) 5px)"></div></div></div>
<div class="c" style="left:2146px;top:1216px;width:8px;height:34px;background:#ee4b42;border-top:2px solid #7c2823;border-bottom:2px solid #7c2823"><div class="a" style="left:0;top:-2px;width:100%;height:34px"><div class="n" style="color:#3a0b0b"><span style="letter-spacing:0.6px">T_TSJF_</span></div><div class="a" style="left:0;top:0;width:2px;height:34px;background:rgba(0,0,0,.38)"></div></div></div>
<div class="c" style="left:2154px;top:1216px;width:88px;height:34px;background:#ee4b42;border-top:2px solid #7c2823;border-bottom:2px solid #7c2823"><div class="a" style="left:0;top:-2px;width:100%;height:34px"><div class="n" style="color:#3a0b0b"><span style="letter-spacing:0.6px">T_TSJF_</span></div><div class="k" style="left:14px;top:2px;height:6px"></div><div class="k" style="left:14px;top:26px;height:6px"></div><div class="k" style="left:28px;top:2px;height:6px"></div><div class="k" style="left:28px;top:26px;height:6px"></div><div class="k" style="left:44px;top:2px;height:6px"></div><div class="k" style="left:44px;top:26px;height:6px"></div><div class="k" style="left:58px;top:2px;height:6px"></div><div class="k" style="left:58px;top:26px;height:6px"></div><div class="k" style="left:74px;top:2px;height:6px"></div><div class="k" style="left:74px;top:26px;height:6px"></div><div class="a" style="left:0;top:0;width:2px;height:34px;background:rgba(0,0,0,.38)"></div><div class="a" style="right:0;top:2px;width:9px;height:30px;background:linear-gradient(to left,rgba(0,0,0,.17) 0,rgba(0,0,0,.17) 3.5px,rgba(0,0,0,0) 8.5px)"></div><div class="a" style="left:2px;top:2px;width:5px;height:30px;background:linear-gradient(to right,rgba(0,0,0,.13) 0,rgba(0,0,0,0) 5px)"></div></div></div>
<div class="c" style="left:2242px;top:1216px;width:30px;height:34px;background:#ee4b42;border-top:2px solid #7c2823;border-bottom:2px solid #7c2823"><div class="a" style="left:0;top:-2px;width:100%;height:34px"><div class="n" style="color:#3a0b0b"><span style="letter-spacing:0.6px">T_TSJF_</span></div><div class="a" style="left:0;top:0;width:2px;height:34px;background:rgba(0,0,0,.38)"></div><div class="a" style="right:0;top:2px;width:9px;height:30px;background:linear-gradient(to left,rgba(0,0,0,.17) 0,rgba(0,0,0,.17) 3.5px,rgba(0,0,0,0) 8.5px)"></div><div class="a" style="left:2px;top:2px;width:5px;height:30px;background:linear-gradient(to right,rgba(0,0,0,.13) 0,rgba(0,0,0,0) 5px)"></div></div></div>
<div class="c" style="left:2272px;top:1216px;width:60px;height:34px;background:#ee4b42;border-top:2px solid #7c2823;border-bottom:2px solid #7c2823"><div class="a" style="left:0;top:-2px;width:100%;height:34px"><div class="n" style="color:#3a0b0b"><span style="letter-spacing:0.6px">T_TSJF_</span></div><div class="k" style="left:16px;top:2px;height:6px"></div><div class="k" style="left:16px;top:26px;height:6px"></div><div class="k" style="left:30px;top:2px;height:6px"></div><div class="k" style="left:30px;top:26px;height:6px"></div><div class="k" style="left:44px;top:2px;height:6px"></div><div class="k" style="left:44px;top:26px;height:6px"></div><div class="a" style="left:0;top:0;width:2px;height:34px;background:rgba(0,0,0,.38)"></div><div class="a" style="right:0;top:2px;width:9px;height:30px;background:linear-gradient(to left,rgba(0,0,0,.17) 0,rgba(0,0,0,.17) 3.5px,rgba(0,0,0,0) 8.5px)"></div><div class="a" style="left:2px;top:2px;width:5px;height:30px;background:linear-gradient(to right,rgba(0,0,0,.13) 0,rgba(0,0,0,0) 5px)"></div></div></div>
<div class="c" style="left:2332px;top:1216px;width:60px;height:34px;background:#ee4b42;border-top:2px solid #7c2823;border-bottom:2px solid #7c2823"><div class="a" style="left:0;top:-2px;width:100%;height:34px"><div class="n" style="color:#3a0b0b"><span style="letter-spacing:0.6px">T_TSJF_</span></div><div class="k" style="left:14px;top:2px;height:6px"></div><div class="k" style="left:14px;top:26px;height:6px"></div><div class="k" style="left:30px;top:2px;height:6px"></div><div class="k" style="left:30px;top:26px;height:6px"></div><div class="k" style="left:44px;top:2px;height:6px"></div><div class="k" style="left:44px;top:26px;height:6px"></div><div class="a" style="left:0;top:0;width:2px;height:34px;background:rgba(0,0,0,.38)"></div><div class="a" style="right:0;top:2px;width:9px;height:30px;background:linear-gradient(to left,rgba(0,0,0,.17) 0,rgba(0,0,0,.17) 3.5px,rgba(0,0,0,0) 8.5px)"></div><div class="a" style="left:2px;top:2px;width:5px;height:30px;background:linear-gradient(to right,rgba(0,0,0,.13) 0,rgba(0,0,0,0) 5px)"></div></div></div>
<div class="c" style="left:606px;top:1254px;width:60px;height:34px;background:#ee4b42;border-top:2px solid #7c2823;border-bottom:2px solid #7c2823"><div class="a" style="left:0;top:-2px;width:100%;height:34px"><div class="n" style="color:#3a0b0b"><span style="letter-spacing:0.3px">DS_MK</span></div><div class="a" style="left:0;top:0;width:2px;height:34px;background:rgba(0,0,0,.38)"></div><div class="a" style="right:0;top:2px;width:9px;height:30px;background:linear-gradient(to left,rgba(0,0,0,.17) 0,rgba(0,0,0,.17) 3.5px,rgba(0,0,0,0) 8.5px)"></div><div class="a" style="left:2px;top:2px;width:5px;height:30px;background:linear-gradient(to right,rgba(0,0,0,.13) 0,rgba(0,0,0,0) 5px)"></div></div></div>
<div class="c" style="left:1558px;top:1254px;width:60px;height:34px;background:#ee4b42;border-top:2px solid #7c2823;border-bottom:2px solid #7c2823"><div class="a" style="left:0;top:-2px;width:100%;height:34px"><div class="n" style="color:#3a0b0b"><span style="letter-spacing:0.3px">DS_MK</span></div><div class="a" style="left:0;top:0;width:2px;height:34px;background:rgba(0,0,0,.38)"></div><div class="a" style="right:0;top:2px;width:9px;height:30px;background:linear-gradient(to left,rgba(0,0,0,.17) 0,rgba(0,0,0,.17) 3.5px,rgba(0,0,0,0) 8.5px)"></div><div class="a" style="left:2px;top:2px;width:5px;height:30px;background:linear-gradient(to right,rgba(0,0,0,.13) 0,rgba(0,0,0,0) 5px)"></div></div></div>
<div class="c" style="left:606px;top:1292px;width:60px;height:34px;background:#ee4b42;border-top:2px solid #7c2823;border-bottom:2px solid #7c2823"><div class="a" style="left:0;top:-2px;width:100%;height:34px"><div class="n" style="color:#3a0b0b"><span style="letter-spacing:0.5px">ZEN_C</span></div><div class="a" style="left:0;top:0;width:2px;height:34px;background:rgba(0,0,0,.38)"></div><div class="a" style="right:0;top:2px;width:9px;height:30px;background:linear-gradient(to left,rgba(0,0,0,.17) 0,rgba(0,0,0,.17) 3.5px,rgba(0,0,0,0) 8.5px)"></div><div class="a" style="left:2px;top:2px;width:5px;height:30px;background:linear-gradient(to right,rgba(0,0,0,.13) 0,rgba(0,0,0,0) 5px)"></div></div></div>
<div class="c" style="left:1558px;top:1292px;width:60px;height:34px;background:#ee4b42;border-top:2px solid #7c2823;border-bottom:2px solid #7c2823"><div class="a" style="left:0;top:-2px;width:100%;height:34px"><div class="n" style="color:#3a0b0b"><span style="letter-spacing:0.5px">ZEN_C</span></div><div class="a" style="left:0;top:0;width:2px;height:34px;background:rgba(0,0,0,.38)"></div><div class="a" style="right:0;top:2px;width:9px;height:30px;background:linear-gradient(to left,rgba(0,0,0,.17) 0,rgba(0,0,0,.17) 3.5px,rgba(0,0,0,0) 8.5px)"></div><div class="a" style="left:2px;top:2px;width:5px;height:30px;background:linear-gradient(to right,rgba(0,0,0,.13) 0,rgba(0,0,0,0) 5px)"></div></div></div>
<div class="c" style="left:2004px;top:1292px;width:30px;height:34px;background:#ee4b42;border-top:2px solid #7c2823;border-bottom:2px solid #7c2823"><div class="a" style="left:0;top:-2px;width:100%;height:34px"><div class="n" style="color:#3a0b0b"><span style="letter-spacing:0.5px">ZEN_C</span></div><div class="a" style="left:0;top:0;width:2px;height:34px;background:rgba(0,0,0,.38)"></div><div class="a" style="right:0;top:2px;width:9px;height:30px;background:linear-gradient(to left,rgba(0,0,0,.17) 0,rgba(0,0,0,.17) 3.5px,rgba(0,0,0,0) 8.5px)"></div><div class="a" style="left:2px;top:2px;width:5px;height:30px;background:linear-gradient(to right,rgba(0,0,0,.13) 0,rgba(0,0,0,0) 5px)"></div></div></div>
<div class="c" style="left:2034px;top:1292px;width:60px;height:34px;background:#ee4b42;border-top:2px solid #7c2823;border-bottom:2px solid #7c2823"><div class="a" style="left:0;top:-2px;width:100%;height:34px"><div class="n" style="color:#3a0b0b"><span style="letter-spacing:0.5px">ZEN_C</span></div><div class="a" style="left:0;top:0;width:2px;height:34px;background:rgba(0,0,0,.38)"></div><div class="a" style="right:0;top:2px;width:9px;height:30px;background:linear-gradient(to left,rgba(0,0,0,.17) 0,rgba(0,0,0,.17) 3.5px,rgba(0,0,0,0) 8.5px)"></div><div class="a" style="left:2px;top:2px;width:5px;height:30px;background:linear-gradient(to right,rgba(0,0,0,.13) 0,rgba(0,0,0,0) 5px)"></div></div></div>
<div class="c" style="left:1544px;top:1330px;width:14px;height:34px;background:#ee4b42;border-top:2px solid #7c2823;border-bottom:2px solid #7c2823"><div class="a" style="left:0;top:-2px;width:100%;height:34px"><div class="n" style="color:#3a0b0b"><span style="letter-spacing:0.5px">ZEN_C</span></div><div class="a" style="left:0;top:0;width:2px;height:34px;background:rgba(0,0,0,.38)"></div><div class="a" style="right:0;top:2px;width:9px;height:30px;background:linear-gradient(to left,rgba(0,0,0,.17) 0,rgba(0,0,0,.17) 3.5px,rgba(0,0,0,0) 8.5px)"></div><div class="a" style="left:2px;top:2px;width:5px;height:30px;background:linear-gradient(to right,rgba(0,0,0,.13) 0,rgba(0,0,0,0) 5px)"></div></div></div>
<svg width="2400" height="1488" style="left:12px;top:0" fill="rgba(0,0,0,.16)"><rect x="682" y="658" width="30" height="4"/><rect x="1636" y="658" width="18" height="4"/><rect x="1654" y="658" width="4" height="4"/><rect x="1658" y="658" width="4" height="4"/><rect x="1662" y="658" width="4" height="4"/><rect x="356" y="664.5" width="118" height="4"/><rect x="474" y="664.5" width="120" height="4"/><rect x="1316" y="664.5" width="12" height="4"/><rect x="1346" y="664.5" width="12" height="4"/><rect x="1376" y="664.5" width="12" height="4"/><rect x="1404" y="664.5" width="14" height="4"/><rect x="1426" y="664.5" width="120" height="4"/><rect x="1784" y="671" width="238" height="4"/><rect x="832" y="677.5" width="12" height="4"/><rect x="860" y="677.5" width="12" height="4"/><rect x="890" y="677.5" width="10" height="4"/><rect x="922" y="677.5" width="40" height="4"/><rect x="980" y="677.5" width="12" height="4"/><rect x="1012" y="677.5" width="28" height="4"/><rect x="1040" y="677.5" width="12" height="4"/><rect x="1784" y="677.5" width="12" height="4"/><rect x="1812" y="677.5" width="12" height="4"/><rect x="1842" y="677.5" width="10" height="4"/><rect x="1874" y="677.5" width="40" height="4"/><rect x="1932" y="677.5" width="12" height="4"/><rect x="1964" y="677.5" width="28" height="4"/><rect x="1992" y="677.5" width="12" height="4"/><rect x="118" y="684" width="238" height="4"/><rect x="356" y="684" width="238" height="4"/><rect x="594" y="684" width="476" height="4"/><rect x="1070" y="684" width="476" height="4"/><rect x="1546" y="684" width="476" height="4"/><rect x="2022" y="684" width="238" height="4"/><rect x="-2" y="1102" width="342" height="3.5"/><rect x="356" y="1102" width="208" height="3.5"/><rect x="594" y="1102" width="476" height="3.5"/><rect x="1546" y="1102" width="446" height="3.5"/><rect x="2022" y="1102" width="224" height="3.5"/><rect x="2260" y="1102" width="120" height="3.5"/><rect x="58" y="1107.4" width="282" height="3.5"/><rect x="356" y="1107.4" width="208" height="3.5"/><rect x="594" y="1107.4" width="118" height="3.5"/><rect x="712" y="1107.4" width="358" height="3.5"/><rect x="1308" y="1107.4" width="118" height="3.5"/><rect x="1426" y="1107.4" width="60" height="3.5"/><rect x="1546" y="1107.4" width="118" height="3.5"/><rect x="1664" y="1107.4" width="358" height="3.5"/><rect x="2022" y="1107.4" width="120" height="3.5"/><rect x="2142" y="1107.4" width="238" height="3.5"/><rect x="0" y="1112.8" width="14" height="3.5"/><rect x="14" y="1112.8" width="6" height="3.5"/><rect x="20" y="1112.8" width="8" height="3.5"/><rect x="30" y="1112.8" width="12" height="3.5"/><rect x="44" y="1112.8" width="14" height="3.5"/><rect x="60" y="1112.8" width="28" height="3.5"/><rect x="90" y="1112.8" width="28" height="3.5"/><rect x="118" y="1112.8" width="88" height="3.5"/><rect x="206" y="1112.8" width="30" height="3.5"/><rect x="236" y="1112.8" width="90" height="3.5"/><rect x="326" y="1112.8" width="30" height="3.5"/><rect x="356" y="1112.8" width="88" height="3.5"/><rect x="444" y="1112.8" width="30" height="3.5"/><rect x="474" y="1112.8" width="90" height="3.5"/><rect x="594" y="1112.8" width="88" height="3.5"/><rect x="682" y="1112.8" width="24" height="3.5"/><rect x="706" y="1112.8" width="6" height="3.5"/><rect x="712" y="1112.8" width="90" height="3.5"/><rect x="802" y="1112.8" width="30" height="3.5"/><rect x="832" y="1112.8" width="88" height="3.5"/><rect x="920" y="1112.8" width="30" height="3.5"/><rect x="950" y="1112.8" width="90" height="3.5"/><rect x="1040" y="1112.8" width="30" height="3.5"/><rect x="1308" y="1112.8" width="90" height="3.5"/><rect x="1398" y="1112.8" width="22" height="3.5"/><rect x="1420" y="1112.8" width="6" height="3.5"/><rect x="1426" y="1112.8" width="60" height="3.5"/><rect x="1546" y="1112.8" width="90" height="3.5"/><rect x="1636" y="1112.8" width="22" height="3.5"/><rect x="1658" y="1112.8" width="6" height="3.5"/><rect x="1664" y="1112.8" width="90" height="3.5"/><rect x="1754" y="1112.8" width="30" height="3.5"/><rect x="1784" y="1112.8" width="90" height="3.5"/><rect x="1874" y="1112.8" width="30" height="3.5"/><rect x="1904" y="1112.8" width="88" height="3.5"/><rect x="1992" y="1112.8" width="30" height="3.5"/><rect x="2022" y="1112.8" width="90" height="3.5"/><rect x="2112" y="1112.8" width="22" height="3.5"/><rect x="2134" y="1112.8" width="8" height="3.5"/><rect x="2142" y="1112.8" width="88" height="3.5"/><rect x="2230" y="1112.8" width="30" height="3.5"/><rect x="2260" y="1112.8" width="60" height="3.5"/><rect x="2320" y="1112.8" width="60" height="3.5"/><rect x="594" y="1118" width="60" height="3.5"/><rect x="1546" y="1118" width="60" height="3.5"/><rect x="594" y="1123.2" width="60" height="3.5"/><rect x="1546" y="1123.2" width="60" height="3.5"/><rect x="1992" y="1123.2" width="30" height="3.5"/><rect x="2022" y="1123.2" width="60" height="3.5"/><rect x="1532" y="1128.4" width="14" height="3.5"/></svg>
<div class="a " style="left:10px;top:42px;width:2px;height:12px;background:#868686;"></div>
<div class="a " style="left:10px;top:42px;width:4px;height:2px;background:#868686;"></div>
<div class="rl" style="left:20.5px;top:32.3px">1</div>
<div class="a " style="left:130px;top:42px;width:2px;height:12px;background:#868686;"></div>
<div class="a " style="left:130px;top:42px;width:4px;height:2px;background:#868686;"></div>
<div class="rl" style="left:140.5px;top:32.3px">9</div>
<div class="a " style="left:248px;top:42px;width:2px;height:12px;background:#868686;"></div>
<div class="a " style="left:248px;top:42px;width:4px;height:2px;background:#868686;"></div>
<div class="rl" style="left:258.5px;top:32.3px">17</div>
<div class="a " style="left:368px;top:42px;width:2px;height:12px;background:#868686;"></div>
<div class="a " style="left:368px;top:42px;width:4px;height:2px;background:#868686;"></div>
<div class="rl" style="left:378.5px;top:32.3px">25</div>
<div class="a " style="left:486px;top:42px;width:2px;height:12px;background:#868686;"></div>
<div class="a " style="left:486px;top:42px;width:4px;height:2px;background:#868686;"></div>
<div class="rl" style="left:496.5px;top:32.3px">33</div>
<div class="a " style="left:606px;top:42px;width:2px;height:12px;background:#868686;"></div>
<div class="a " style="left:606px;top:42px;width:4px;height:2px;background:#868686;"></div>
<div class="rl" style="left:616.5px;top:32.3px">41</div>
<div class="a " style="left:724px;top:42px;width:2px;height:12px;background:#868686;"></div>
<div class="a " style="left:724px;top:42px;width:4px;height:2px;background:#868686;"></div>
<div class="rl" style="left:734.5px;top:32.3px">49</div>
<div class="a " style="left:844px;top:42px;width:2px;height:12px;background:#868686;"></div>
<div class="a " style="left:844px;top:42px;width:4px;height:2px;background:#868686;"></div>
<div class="rl" style="left:854.5px;top:32.3px">57</div>
<div class="a " style="left:962px;top:42px;width:2px;height:12px;background:#868686;"></div>
<div class="a " style="left:962px;top:42px;width:4px;height:2px;background:#868686;"></div>
<div class="rl" style="left:972.5px;top:32.3px">65</div>
<div class="a " style="left:1082px;top:42px;width:2px;height:12px;background:#868686;"></div>
<div class="a " style="left:1082px;top:42px;width:4px;height:2px;background:#868686;"></div>
<div class="rl" style="left:1092.5px;top:32.3px">73</div>
<div class="a " style="left:1200px;top:42px;width:2px;height:12px;background:#868686;"></div>
<div class="a " style="left:1200px;top:42px;width:4px;height:2px;background:#868686;"></div>
<div class="rl" style="left:1210.5px;top:32.3px">81</div>
<div class="a " style="left:1320px;top:42px;width:2px;height:12px;background:#868686;"></div>
<div class="a " style="left:1320px;top:42px;width:4px;height:2px;background:#868686;"></div>
<div class="rl" style="left:1330.5px;top:32.3px">89</div>
<div class="a " style="left:1438px;top:42px;width:2px;height:12px;background:#868686;"></div>
<div class="a " style="left:1438px;top:42px;width:4px;height:2px;background:#868686;"></div>
<div class="rl" style="left:1448.5px;top:32.3px">97</div>
<div class="a " style="left:1558px;top:42px;width:2px;height:12px;background:#868686;"></div>
<div class="a " style="left:1558px;top:42px;width:4px;height:2px;background:#868686;"></div>
<div class="rl" style="left:1568.5px;top:32.3px">105</div>
<div class="a " style="left:1676px;top:42px;width:2px;height:12px;background:#868686;"></div>
<div class="a " style="left:1676px;top:42px;width:4px;height:2px;background:#868686;"></div>
<div class="rl" style="left:1686.5px;top:32.3px">113</div>
<div class="a " style="left:1796px;top:42px;width:2px;height:12px;background:#868686;"></div>
<div class="a " style="left:1796px;top:42px;width:4px;height:2px;background:#868686;"></div>
<div class="rl" style="left:1806.5px;top:32.3px">121</div>
<div class="a " style="left:1916px;top:42px;width:2px;height:12px;background:#868686;"></div>
<div class="a " style="left:1916px;top:42px;width:4px;height:2px;background:#868686;"></div>
<div class="rl" style="left:1926.5px;top:32.3px">129</div>
<div class="a " style="left:2034px;top:42px;width:2px;height:12px;background:#868686;"></div>
<div class="a " style="left:2034px;top:42px;width:4px;height:2px;background:#868686;"></div>
<div class="rl" style="left:2044.5px;top:32.3px">137</div>
<div class="a " style="left:2154px;top:42px;width:2px;height:12px;background:#868686;"></div>
<div class="a " style="left:2154px;top:42px;width:4px;height:2px;background:#868686;"></div>
<div class="rl" style="left:2164.5px;top:32.3px">145</div>
<div class="a " style="left:2272px;top:42px;width:2px;height:12px;background:#868686;"></div>
<div class="a " style="left:2272px;top:42px;width:4px;height:2px;background:#868686;"></div>
<div class="rl" style="left:2282.5px;top:32.3px">153</div>
<div class="a " style="left:2392px;top:42px;width:2px;height:12px;background:#868686;"></div>
<div class="a " style="left:70px;top:52px;width:1.5px;height:2px;background:#868686;"></div>
<div class="a " style="left:188px;top:52px;width:1.5px;height:2px;background:#868686;"></div>
<div class="a " style="left:308px;top:52px;width:1.5px;height:2px;background:#868686;"></div>
<div class="a " style="left:428px;top:52px;width:1.5px;height:2px;background:#868686;"></div>
<div class="a " style="left:546px;top:52px;width:1.5px;height:2px;background:#868686;"></div>
<div class="a " style="left:666px;top:52px;width:1.5px;height:2px;background:#868686;"></div>
<div class="a " style="left:784px;top:52px;width:1.5px;height:2px;background:#868686;"></div>
<div class="a " style="left:904px;top:52px;width:1.5px;height:2px;background:#868686;"></div>
<div class="a " style="left:1022px;top:52px;width:1.5px;height:2px;background:#868686;"></div>
<div class="a " style="left:1142px;top:52px;width:1.5px;height:2px;background:#868686;"></div>
<div class="a " style="left:1260px;top:52px;width:1.5px;height:2px;background:#868686;"></div>
<div class="a " style="left:1380px;top:52px;width:1.5px;height:2px;background:#868686;"></div>
<div class="a " style="left:1498px;top:52px;width:1.5px;height:2px;background:#868686;"></div>
<div class="a " style="left:1618px;top:52px;width:1.5px;height:2px;background:#868686;"></div>
<div class="a " style="left:1736px;top:52px;width:1.5px;height:2px;background:#868686;"></div>
<div class="a " style="left:1856px;top:52px;width:1.5px;height:2px;background:#868686;"></div>
<div class="a " style="left:1974px;top:52px;width:1.5px;height:2px;background:#868686;"></div>
<div class="a " style="left:2094px;top:52px;width:1.5px;height:2px;background:#868686;"></div>
<div class="a " style="left:2212px;top:52px;width:1.5px;height:2px;background:#868686;"></div>
<div class="a " style="left:2332px;top:52px;width:1.5px;height:2px;background:#868686;"></div>
<div class="a " style="left:10px;top:54px;width:2398px;height:22px;background:#5e5e5e;border:2px solid #9b9b9b"></div>
<svg width="24" height="22" style="left:10px;top:54px"><path d="M2.2 2.6 L17 11 L2.2 19.4 Z" fill="#5e5e5e" stroke="#9b9b9b" stroke-width="1.5"/></svg>
<svg width="24" height="22" style="left:2386px;top:54px"><path d="M20.5 2.6 L5 11 L20.5 19.4 Z" fill="#6a6a6a" stroke="#9b9b9b" stroke-width="1.5"/></svg>
<div class="a " style="left:130px;top:76px;width:2px;height:1358px;background:#a3a3a3;"></div>
<svg width="20" height="22" style="left:130px;top:76px"><path d="M1.5 1.4 L16.2 10.8 L1.5 20.4 Z" fill="#5e5e5e" stroke="#a3a3a3" stroke-width="1.5"/></svg>
<div class="ll" style="left:152.5px;top:76px;background:#363636;padding:0 2px">Intro</div>
<div class="a " style="left:368px;top:76px;width:2px;height:1358px;background:#a3a3a3;"></div>
<svg width="20" height="22" style="left:368px;top:76px"><path d="M1.5 1.4 L16.2 10.8 L1.5 20.4 Z" fill="#5e5e5e" stroke="#a3a3a3" stroke-width="1.5"/></svg>
<div class="ll" style="left:390.5px;top:76px;background:#363636;padding:0 2px">Vocal</div>
<div class="a " style="left:576px;top:76px;width:2px;height:1358px;background:#a3a3a3;"></div>
<svg width="20" height="22" style="left:576px;top:76px"><path d="M1.5 1.4 L16.2 10.8 L1.5 20.4 Z" fill="#5e5e5e" stroke="#a3a3a3" stroke-width="1.5"/></svg>
<div class="a " style="left:606px;top:76px;width:2px;height:1358px;background:#a3a3a3;"></div>
<svg width="20" height="22" style="left:606px;top:76px"><path d="M1.5 1.4 L16.2 10.8 L1.5 20.4 Z" fill="#5e5e5e" stroke="#a3a3a3" stroke-width="1.5"/></svg>
<div class="ll" style="left:628.5px;top:76px;background:#363636;padding:0 2px">Drop</div>
<div class="a " style="left:1082px;top:76px;width:2px;height:1358px;background:#a3a3a3;"></div>
<svg width="20" height="22" style="left:1082px;top:76px"><path d="M1.5 1.4 L16.2 10.8 L1.5 20.4 Z" fill="#5e5e5e" stroke="#a3a3a3" stroke-width="1.5"/></svg>
<div class="ll" style="left:1104.5px;top:76px;background:#363636;padding:0 2px">Break</div>
<div class="a " style="left:1498px;top:76px;width:2px;height:1358px;background:#a3a3a3;"></div>
<svg width="20" height="22" style="left:1498px;top:76px"><path d="M1.5 1.4 L16.2 10.8 L1.5 20.4 Z" fill="#5e5e5e" stroke="#a3a3a3" stroke-width="1.5"/></svg>
<div class="ll" style="left:1520.5px;top:76px;background:#363636;padding:0 2px">..</div>
<div class="a " style="left:1558px;top:76px;width:2px;height:1358px;background:#a3a3a3;"></div>
<svg width="20" height="22" style="left:1558px;top:76px"><path d="M1.5 1.4 L16.2 10.8 L1.5 20.4 Z" fill="#5e5e5e" stroke="#a3a3a3" stroke-width="1.5"/></svg>
<div class="ll" style="left:1580.5px;top:76px;background:#363636;padding:0 2px">1</div>
<div class="a " style="left:1796px;top:76px;width:2px;height:1358px;background:#a3a3a3;"></div>
<svg width="20" height="22" style="left:1796px;top:76px"><path d="M1.5 1.4 L16.2 10.8 L1.5 20.4 Z" fill="#5e5e5e" stroke="#a3a3a3" stroke-width="1.5"/></svg>
<div class="ll" style="left:1818.5px;top:76px;background:#363636;padding:0 2px">4</div>
<div class="a " style="left:2004px;top:76px;width:2px;height:1358px;background:#a3a3a3;"></div>
<svg width="20" height="22" style="left:2004px;top:76px"><path d="M1.5 1.4 L16.2 10.8 L1.5 20.4 Z" fill="#5e5e5e" stroke="#a3a3a3" stroke-width="1.5"/></svg>
<div class="a " style="left:2034px;top:76px;width:2px;height:1358px;background:#a3a3a3;"></div>
<svg width="20" height="22" style="left:2034px;top:76px"><path d="M1.5 1.4 L16.2 10.8 L1.5 20.4 Z" fill="#5e5e5e" stroke="#a3a3a3" stroke-width="1.5"/></svg>
<div class="ll" style="left:2056.5px;top:76px;background:#363636;padding:0 2px">Outro</div>
<div class="a " style="left:10px;top:54px;width:2px;height:1380px;background:#9b9b9b;"></div>
<div class="a " style="left:2406px;top:54px;width:2px;height:1380px;background:#a0a0a0;"></div>
<svg width="4" height="22" style="left:2408px;top:76px"><path d="M0 3 L4 6 L4 16 L0 19 Z" fill="#6e6e6e"/><path d="M0 3 L4 6 M0 19 L4 16" stroke="#a3a3a3" stroke-width="1.3"/></svg>
<svg width="10" height="10" style="left:12px;top:89px"><path d="M0 9 L0 1.5 L7 1.5 Z" fill="#4cc4de"/></svg>
<div class="a " style="left:10px;top:1396px;width:2px;height:34px;background:#7fdcf0;"></div>
<div class="a " style="left:10px;top:1434px;width:2px;height:16px;background:#868686;"></div>
<div class="a " style="left:10px;top:1448px;width:4.5px;height:2px;background:#868686;"></div>
<div class="rl" style="left:15.5px;top:1437.7px;letter-spacing:.8px">0:00</div>
<div class="a " style="left:48px;top:1434px;width:2px;height:4px;background:#868686;"></div>
<div class="a " style="left:84px;top:1434px;width:2px;height:4px;background:#868686;"></div>
<div class="a " style="left:122px;top:1434px;width:2px;height:4px;background:#868686;"></div>
<div class="a " style="left:160px;top:1434px;width:2px;height:4px;background:#868686;"></div>
<div class="a " style="left:196px;top:1434px;width:2px;height:4px;background:#868686;"></div>
<div class="a " style="left:234px;top:1434px;width:2px;height:16px;background:#868686;"></div>
<div class="a " style="left:234px;top:1448px;width:4.5px;height:2px;background:#868686;"></div>
<div class="rl" style="left:239.5px;top:1437.7px;letter-spacing:.8px">0:30</div>
<div class="a " style="left:270px;top:1434px;width:2px;height:4px;background:#868686;"></div>
<div class="a " style="left:308px;top:1434px;width:2px;height:4px;background:#868686;"></div>
<div class="a " style="left:346px;top:1434px;width:2px;height:4px;background:#868686;"></div>
<div class="a " style="left:382px;top:1434px;width:2px;height:4px;background:#868686;"></div>
<div class="a " style="left:420px;top:1434px;width:2px;height:4px;background:#868686;"></div>
<div class="a " style="left:456px;top:1434px;width:2px;height:16px;background:#868686;"></div>
<div class="a " style="left:456px;top:1448px;width:4.5px;height:2px;background:#868686;"></div>
<div class="rl" style="left:461.5px;top:1437.7px;letter-spacing:.8px">1:00</div>
<div class="a " style="left:494px;top:1434px;width:2px;height:4px;background:#868686;"></div>
<div class="a " style="left:532px;top:1434px;width:2px;height:4px;background:#868686;"></div>
<div class="a " style="left:568px;top:1434px;width:2px;height:4px;background:#868686;"></div>
<div class="a " style="left:606px;top:1434px;width:2px;height:4px;background:#868686;"></div>
<div class="a " style="left:642px;top:1434px;width:2px;height:4px;background:#868686;"></div>
<div class="a " style="left:680px;top:1434px;width:2px;height:16px;background:#868686;"></div>
<div class="a " style="left:680px;top:1448px;width:4.5px;height:2px;background:#868686;"></div>
<div class="rl" style="left:685.5px;top:1437.7px;letter-spacing:.8px">1:30</div>
<div class="a " style="left:718px;top:1434px;width:2px;height:4px;background:#868686;"></div>
<div class="a " style="left:754px;top:1434px;width:2px;height:4px;background:#868686;"></div>
<div class="a " style="left:792px;top:1434px;width:2px;height:4px;background:#868686;"></div>
<div class="a " style="left:828px;top:1434px;width:2px;height:4px;background:#868686;"></div>
<div class="a " style="left:866px;top:1434px;width:2px;height:4px;background:#868686;"></div>
<div class="a " style="left:904px;top:1434px;width:2px;height:16px;background:#868686;"></div>
<div class="a " style="left:904px;top:1448px;width:4.5px;height:2px;background:#868686;"></div>
<div class="rl" style="left:909.5px;top:1437.7px;letter-spacing:.8px">2:00</div>
<div class="a " style="left:940px;top:1434px;width:2px;height:4px;background:#868686;"></div>
<div class="a " style="left:978px;top:1434px;width:2px;height:4px;background:#868686;"></div>
<div class="a " style="left:1014px;top:1434px;width:2px;height:4px;background:#868686;"></div>
<div class="a " style="left:1052px;top:1434px;width:2px;height:4px;background:#868686;"></div>
<div class="a " style="left:1090px;top:1434px;width:2px;height:4px;background:#868686;"></div>
<div class="a " style="left:1126px;top:1434px;width:2px;height:16px;background:#868686;"></div>
<div class="a " style="left:1126px;top:1448px;width:4.5px;height:2px;background:#868686;"></div>
<div class="rl" style="left:1131.5px;top:1437.7px;letter-spacing:.8px">2:30</div>
<div class="a " style="left:1164px;top:1434px;width:2px;height:4px;background:#868686;"></div>
<div class="a " style="left:1200px;top:1434px;width:2px;height:4px;background:#868686;"></div>
<div class="a " style="left:1238px;top:1434px;width:2px;height:4px;background:#868686;"></div>
<div class="a " style="left:1276px;top:1434px;width:2px;height:4px;background:#868686;"></div>
<div class="a " style="left:1312px;top:1434px;width:2px;height:4px;background:#868686;"></div>
<div class="a " style="left:1350px;top:1434px;width:2px;height:16px;background:#868686;"></div>
<div class="a " style="left:1350px;top:1448px;width:4.5px;height:2px;background:#868686;"></div>
<div class="rl" style="left:1355.5px;top:1437.7px;letter-spacing:.8px">3:00</div>
<div class="a " style="left:1386px;top:1434px;width:2px;height:4px;background:#868686;"></div>
<div class="a " style="left:1424px;top:1434px;width:2px;height:4px;background:#868686;"></div>
<div class="a " style="left:1462px;top:1434px;width:2px;height:4px;background:#868686;"></div>
<div class="a " style="left:1498px;top:1434px;width:2px;height:4px;background:#868686;"></div>
<div class="a " style="left:1536px;top:1434px;width:2px;height:4px;background:#868686;"></div>
<div class="a " style="left:1572px;top:1434px;width:2px;height:16px;background:#868686;"></div>
<div class="a " style="left:1572px;top:1448px;width:4.5px;height:2px;background:#868686;"></div>
<div class="rl" style="left:1577.5px;top:1437.7px;letter-spacing:.8px">3:30</div>
<div class="a " style="left:1610px;top:1434px;width:2px;height:4px;background:#868686;"></div>
<div class="a " style="left:1648px;top:1434px;width:2px;height:4px;background:#868686;"></div>
<div class="a " style="left:1684px;top:1434px;width:2px;height:4px;background:#868686;"></div>
<div class="a " style="left:1722px;top:1434px;width:2px;height:4px;background:#868686;"></div>
<div class="a " style="left:1758px;top:1434px;width:2px;height:4px;background:#868686;"></div>
<div class="a " style="left:1796px;top:1434px;width:2px;height:16px;background:#868686;"></div>
<div class="a " style="left:1796px;top:1448px;width:4.5px;height:2px;background:#868686;"></div>
<div class="rl" style="left:1801.5px;top:1437.7px;letter-spacing:.8px">4:00</div>
<div class="a " style="left:1834px;top:1434px;width:2px;height:4px;background:#868686;"></div>
<div class="a " style="left:1870px;top:1434px;width:2px;height:4px;background:#868686;"></div>
<div class="a " style="left:1908px;top:1434px;width:2px;height:4px;background:#868686;"></div>
<div class="a " style="left:1944px;top:1434px;width:2px;height:4px;background:#868686;"></div>
<div class="a " style="left:1982px;top:1434px;width:2px;height:4px;background:#868686;"></div>
<div class="a " style="left:2020px;top:1434px;width:2px;height:16px;background:#868686;"></div>
<div class="a " style="left:2020px;top:1448px;width:4.5px;height:2px;background:#868686;"></div>
<div class="rl" style="left:2025.5px;top:1437.7px;letter-spacing:.8px">4:30</div>
<div class="a " style="left:2056px;top:1434px;width:2px;height:4px;background:#868686;"></div>
<div class="a " style="left:2094px;top:1434px;width:2px;height:4px;background:#868686;"></div>
<div class="a " style="left:2130px;top:1434px;width:2px;height:4px;background:#868686;"></div>
<div class="a " style="left:2168px;top:1434px;width:2px;height:4px;background:#868686;"></div>
<div class="a " style="left:2206px;top:1434px;width:2px;height:4px;background:#868686;"></div>
<div class="a " style="left:2242px;top:1434px;width:2px;height:16px;background:#868686;"></div>
<div class="a " style="left:2242px;top:1448px;width:4.5px;height:2px;background:#868686;"></div>
<div class="rl" style="left:2247.5px;top:1437.7px;letter-spacing:.8px">5:00</div>
<div class="a " style="left:2280px;top:1434px;width:2px;height:4px;background:#868686;"></div>
<div class="a " style="left:2316px;top:1434px;width:2px;height:4px;background:#868686;"></div>
<div class="a " style="left:2354px;top:1434px;width:2px;height:4px;background:#868686;"></div>
<div class="a " style="left:2392px;top:1434px;width:2px;height:4px;background:#868686;"></div>
<svg width="10" height="12" style="left:10px;top:1434px"><path d="M0 2 L0 10 L8.5 10 Z" fill="#4cc4de"/></svg>
<div class="t" style="left:2351.5px;top:1393.5px;font-size:33px;font-weight:bold;line-height:36px;color:#767676;letter-spacing:3.2px">4/1</div>
<div class="a " style="left:2416px;top:102px;width:196px;height:70px;background:#5a91e2;"></div>
<svg width="30" height="30" style="left:2417.8px;top:104px"><circle cx="15" cy="15" r="11.9" fill="none" stroke="#bebbb6" stroke-width="1.8"/><path d="M8.4 12.3 L21.8 12.3 L15.1 21.9 Z" fill="#bebbb6"/></svg>
<div class="hn" style="left:2453.5px;top:102px;color:#bebbb6">Piano</div>
<div class="a " style="left:2428px;top:150px;width:10.2px;height:1.8px;background:#bebbb6;"></div>
<div class="a " style="left:2428px;top:154px;width:10.2px;height:1.8px;background:#bebbb6;"></div>
<div class="a " style="left:2428px;top:158px;width:10.2px;height:1.8px;background:#bebbb6;"></div>
<div class="a " style="left:2416px;top:176px;width:196px;height:70px;background:#5a91e2;"></div>
<svg width="30" height="30" style="left:2417.8px;top:178px"><circle cx="15" cy="15" r="11.9" fill="none" stroke="#bebbb6" stroke-width="1.8"/><path d="M8.4 12.3 L21.8 12.3 L15.1 21.9 Z" fill="#bebbb6"/></svg>
<div class="hn" style="left:2453.5px;top:176px;color:#bebbb6">Synth Chord</div>
<div class="a " style="left:2416px;top:250px;width:196px;height:70px;background:#5a91e2;"></div>
<svg width="30" height="30" style="left:2417.8px;top:252px"><circle cx="15" cy="15" r="11.9" fill="none" stroke="#bebbb6" stroke-width="1.8"/><path d="M8.4 12.3 L21.8 12.3 L15.1 21.9 Z" fill="#bebbb6"/></svg>
<div class="hn" style="left:2453.5px;top:250px;color:#bebbb6">Reese bass</div>
<div class="a " style="left:2428px;top:298px;width:10.2px;height:1.8px;background:#bebbb6;"></div>
<div class="a " style="left:2428px;top:302px;width:10.2px;height:1.8px;background:#bebbb6;"></div>
<div class="a " style="left:2428px;top:306px;width:10.2px;height:1.8px;background:#bebbb6;"></div>
<div class="a " style="left:2416px;top:324px;width:196px;height:70px;background:#5a91e2;"></div>
<svg width="30" height="30" style="left:2417.8px;top:326px"><circle cx="15" cy="15" r="11.9" fill="none" stroke="#bebbb6" stroke-width="1.8"/><path d="M8.4 12.3 L21.8 12.3 L15.1 21.9 Z" fill="#bebbb6"/></svg>
<div class="hn" style="left:2453.5px;top:324px;color:#bebbb6">Bass</div>
<div class="a " style="left:2416px;top:398px;width:196px;height:34px;background:#5a91e2;"></div>
<svg width="30" height="30" style="left:2417.8px;top:400px"><circle cx="15" cy="15" r="11.9" fill="none" stroke="#bebbb6" stroke-width="1.8"/><path d="M12.2 8.7 L12.2 21.5 L21.6 15.1 Z" fill="#bebbb6"/></svg>
<div class="hn" style="left:2453.5px;top:398px;color:#bebbb6">Arp 02</div>
<div class="a " style="left:2416px;top:436px;width:196px;height:70px;background:#7dfbae;"></div>
<svg width="30" height="30" style="left:2417.8px;top:438px"><circle cx="15" cy="15" r="11.9" fill="none" stroke="#10311f" stroke-width="1.8"/><path d="M8.4 12.3 L21.8 12.3 L15.1 21.9 Z" fill="#10311f"/></svg>
<div class="hu" style="left:2453.5px;top:436px;color:#10311f;letter-spacing:0.8px">Arp 01</div>
<div class="a " style="left:2416px;top:510px;width:196px;height:70px;background:#5a91e2;"></div>
<svg width="30" height="30" style="left:2417.8px;top:512px"><circle cx="15" cy="15" r="11.9" fill="none" stroke="#bebbb6" stroke-width="1.8"/><path d="M8.4 12.3 L21.8 12.3 L15.1 21.9 Z" fill="#bebbb6"/></svg>
<div class="hn" style="left:2453.5px;top:510px;color:#bebbb6">Flute</div>
<div class="a " style="left:2416px;top:584px;width:196px;height:34px;background:#92fee9;"></div>
<svg width="30" height="30" style="left:2417.8px;top:586px"><circle cx="15" cy="15" r="11.9" fill="none" stroke="#12302a" stroke-width="1.8"/><rect x="10.1" y="10.65" width="10.1" height="1.7" fill="#12302a"/><rect x="10.1" y="14.45" width="10.1" height="1.7" fill="#12302a"/><rect x="10.1" y="18.05" width="10.1" height="1.7" fill="#12302a"/></svg>
<div class="hu" style="left:2453.5px;top:584px;color:#12302a;letter-spacing:-0.3px">FX Bus</div>
<div class="a " style="left:2416px;top:622px;width:196px;height:70px;background:#c4958d;"></div>
<svg width="30" height="30" style="left:2417.8px;top:624px"><circle cx="15" cy="15" r="11.9" fill="none" stroke="#241614" stroke-width="1.8"/><rect x="8.5" y="10.15" width="9.2" height="1.7" fill="#241614"/><rect x="12.2" y="13.95" width="9.8" height="1.7" fill="#241614"/><rect x="12.2" y="18.25" width="9.8" height="1.7" fill="#241614"/></svg>
<div class="hu" style="left:2453.5px;top:622px;color:#241614;letter-spacing:0.05px">Vox Bus</div>
<div class="a " style="left:2426px;top:696px;width:186px;height:70px;background:#5a91e2;"></div>
<svg width="30" height="30" style="left:2427.9px;top:698px"><circle cx="15" cy="15" r="11.9" fill="none" stroke="#bebbb6" stroke-width="1.8"/><path d="M8.4 12.3 L21.8 12.3 L15.1 21.9 Z" fill="#bebbb6"/></svg>
<div class="hn" style="left:2461.7px;top:696px;color:#bebbb6">13 STCR2_AH</div>
<div class="a " style="left:2426px;top:770px;width:186px;height:70px;background:#5a91e2;"></div>
<svg width="30" height="30" style="left:2427.9px;top:772px"><circle cx="15" cy="15" r="11.9" fill="none" stroke="#bebbb6" stroke-width="1.8"/><path d="M8.4 12.3 L21.8 12.3 L15.1 21.9 Z" fill="#bebbb6"/></svg>
<div class="hn" style="left:2461.7px;top:770px;color:#bebbb6">14 STCR2_AH</div>
<div class="a " style="left:2426px;top:844px;width:186px;height:70px;background:#5a91e2;"></div>
<svg width="30" height="30" style="left:2427.9px;top:846px"><circle cx="15" cy="15" r="11.9" fill="none" stroke="#bebbb6" stroke-width="1.8"/><path d="M8.4 12.3 L21.8 12.3 L15.1 21.9 Z" fill="#bebbb6"/></svg>
<div class="hn" style="left:2461.7px;top:844px;color:#bebbb6">Vocal Chop</div>
<div class="a " style="left:2426px;top:918px;width:186px;height:70px;background:#5a91e2;"></div>
<svg width="30" height="30" style="left:2427.9px;top:920px"><circle cx="15" cy="15" r="11.9" fill="none" stroke="#bebbb6" stroke-width="1.8"/><path d="M8.4 12.3 L21.8 12.3 L15.1 21.9 Z" fill="#bebbb6"/></svg>
<div class="hn" style="left:2461.7px;top:918px;color:#bebbb6">16 STCR2_AH</div>
<div class="a " style="left:2426px;top:992px;width:186px;height:70px;background:#5a91e2;"></div>
<svg width="30" height="30" style="left:2427.9px;top:994px"><circle cx="15" cy="15" r="11.9" fill="none" stroke="#bebbb6" stroke-width="1.8"/><path d="M8.4 12.3 L21.8 12.3 L15.1 21.9 Z" fill="#bebbb6"/></svg>
<div class="hn" style="left:2461.7px;top:992px;color:#bebbb6">17 OS_SHE_10</div>
<div class="a " style="left:2416px;top:1066px;width:196px;height:70px;background:#ee4b42;"></div>
<svg width="30" height="30" style="left:2417.8px;top:1068px"><circle cx="15" cy="15" r="11.9" fill="none" stroke="#3a0b0b" stroke-width="1.8"/><rect x="8.5" y="10.15" width="9.2" height="1.7" fill="#3a0b0b"/><rect x="12.2" y="13.95" width="9.8" height="1.7" fill="#3a0b0b"/><rect x="12.2" y="18.25" width="9.8" height="1.7" fill="#3a0b0b"/></svg>
<div class="hu" style="left:2453.5px;top:1066px;color:#3a0b0b;letter-spacing:1px">Drum</div>
<div class="a " style="left:2426px;top:1140px;width:186px;height:34px;background:#ee4b42;"></div>
<svg width="30" height="30" style="left:2427.9px;top:1142px"><circle cx="15" cy="15" r="11.9" fill="none" stroke="#3a0b0b" stroke-width="1.8"/><path d="M12.2 8.7 L12.2 21.5 L21.6 15.1 Z" fill="#3a0b0b"/></svg>
<div class="hu" style="left:2461.7px;top:1140px;color:#3a0b0b;letter-spacing:0.8px">Drum Loop</div>
<div class="a " style="left:2426px;top:1178px;width:186px;height:34px;background:#ee4b42;"></div>
<svg width="30" height="30" style="left:2427.9px;top:1180px"><circle cx="15" cy="15" r="11.9" fill="none" stroke="#3a0b0b" stroke-width="1.8"/><path d="M12.2 8.7 L12.2 21.5 L21.6 15.1 Z" fill="#3a0b0b"/></svg>
<div class="hu" style="left:2461.7px;top:1178px;color:#3a0b0b;letter-spacing:0.55px">Perc Loop 01</div>
<div class="a " style="left:2426px;top:1216px;width:186px;height:34px;background:#ee4b42;"></div>
<svg width="30" height="30" style="left:2427.9px;top:1218px"><circle cx="15" cy="15" r="11.9" fill="none" stroke="#3a0b0b" stroke-width="1.8"/><path d="M12.2 8.7 L12.2 21.5 L21.6 15.1 Z" fill="#3a0b0b"/></svg>
<div class="hu" style="left:2461.7px;top:1216px;color:#3a0b0b;letter-spacing:0.7px">Perc loop 02</div>
<div class="a " style="left:2426px;top:1254px;width:186px;height:34px;background:#ee4b42;"></div>
<svg width="30" height="30" style="left:2427.9px;top:1256px"><circle cx="15" cy="15" r="11.9" fill="none" stroke="#3a0b0b" stroke-width="1.8"/><path d="M12.2 8.7 L12.2 21.5 L21.6 15.1 Z" fill="#3a0b0b"/></svg>
<div class="hu" style="left:2461.7px;top:1254px;color:#3a0b0b;letter-spacing:1.25px">Impact clap</div>
<div class="a " style="left:2426px;top:1292px;width:186px;height:34px;background:#ee4b42;"></div>
<svg width="30" height="30" style="left:2427.9px;top:1294px"><circle cx="15" cy="15" r="11.9" fill="none" stroke="#3a0b0b" stroke-width="1.8"/><path d="M12.2 8.7 L12.2 21.5 L21.6 15.1 Z" fill="#3a0b0b"/></svg>
<div class="hu" style="left:2461.7px;top:1292px;color:#3a0b0b;letter-spacing:1.55px">Impact fx</div>
<div class="a " style="left:2426px;top:1330px;width:186px;height:34px;background:#ee4b42;"></div>
<svg width="30" height="30" style="left:2427.9px;top:1332px"><circle cx="15" cy="15" r="11.9" fill="none" stroke="#3a0b0b" stroke-width="1.8"/><path d="M12.2 8.7 L12.2 21.5 L21.6 15.1 Z" fill="#3a0b0b"/></svg>
<div class="hu" style="left:2461.7px;top:1330px;color:#3a0b0b;letter-spacing:0.7px">Crash rev</div>
<div class="a " style="left:2416px;top:1368px;width:196px;height:22px;background:#363636;"></div>
<div class="a " style="left:2416px;top:1396px;width:196px;height:34px;background:#b9e0ec;"></div>
<svg width="30" height="30" style="left:2417.8px;top:1398px"><circle cx="15" cy="15" r="11.9" fill="none" stroke="#000000" stroke-width="1.8"/><path d="M12.2 8.7 L12.2 21.5 L21.6 15.1 Z" fill="#000000"/></svg>
<div class="hu" style="left:2457.7px;top:1396px;color:#000000;letter-spacing:0.7px">Main</div>
<div class="a " style="left:2416px;top:692px;width:8px;height:370px;background:#c4958d;"></div>
<div class="a " style="left:2416px;top:1136px;width:8px;height:228px;background:#ee4b42;"></div>
<div class="a " style="left:2616px;top:102px;width:2px;height:1332px;background:#363636;"></div>
<div class="a " style="left:2616px;top:98px;width:2px;height:4px;background:#222;"></div>
<div class="a" style="left:2422px;top:28px;width:58px;height:26px;border-radius:13px;background:#1e1e1e;border:1.5px solid #191919"></div>
<div class="t" style="left:2434px;top:29.5px;font-size:20px;font-weight:bold;line-height:22px;color:#c9c9c9;letter-spacing:.3px">Set</div>
<div class="a " style="left:2502px;top:28px;width:46px;height:26px;background:#1e1e1e;border:2px solid #181818"></div>
<svg width="20" height="20" style="left:2515px;top:31px"><path d="M5.7 13.7 L14.9 6.4" stroke="#c2c2c2" stroke-width="2.2"/><circle cx="5.7" cy="13.7" r="3.1" fill="#c2c2c2"/><circle cx="14.9" cy="6.4" r="3.1" fill="#c2c2c2"/></svg>
<div class="a " style="left:2556px;top:28px;width:46px;height:26px;background:#dc7350;border:2px solid #181818"></div>
<svg width="20" height="20" style="left:2569px;top:31px"><path d="M6.4 9.5 V7.8 A3.6 3.6 0 0 1 13.6 7.8 V9.5" fill="none" stroke="#050505" stroke-width="2"/><rect x="3" y="8.8" width="14" height="8" fill="#050505"/></svg>
<div class="a" style="left:2422.1px;top:64.2px;width:25.6px;height:25.6px;border-radius:50%;background:#1e1e1e;border:1.5px solid #191919"></div>
<div class="a" style="left:2454.2px;top:64.2px;width:25.6px;height:25.6px;border-radius:50%;background:#1e1e1e;border:1.5px solid #191919"></div>
<svg width="20" height="16" style="left:2424.9px;top:69px"><path d="M2.6 8 L10.2 2.6 L10.2 13.4 Z M10 6.9 H17 V9.1 H10 Z" fill="#7c7c7c"/></svg>
<svg width="20" height="16" style="left:2457px;top:69px"><path d="M17.4 8 L9.8 2.6 L9.8 13.4 Z M10 6.9 H3 V9.1 H10 Z" fill="#c6c6c6"/></svg>
<div class="a " style="left:2416px;top:1442px;width:30px;height:26px;background:#f7b464;border:2px solid #1c1c1c"></div>
<svg width="26" height="22" style="left:2418px;top:1444px"><rect x="4.2" y="7.5" width="1.9" height="7" fill="#0a0a0a"/><rect x="8.1" y="4.5" width="1.9" height="13" fill="#0a0a0a"/><rect x="12" y="2.0" width="1.9" height="18" fill="#0a0a0a"/><rect x="15.9" y="5.5" width="1.9" height="11" fill="#0a0a0a"/><rect x="19.9" y="8.0" width="1.9" height="6" fill="#0a0a0a"/></svg>
<div class="a " style="left:2452px;top:1442px;width:70px;height:26px;background:#212121;border:2px solid #1a1a1a"></div>
<div class="a " style="left:2454px;top:1444px;width:20px;height:22px;background:#2f7287;"></div>
<div class="t" style="left:2460px;top:1444px;font-size:20px;line-height:22px;color:#b4b4b4;letter-spacing:.4px">1.00x</div>
<div class="a " style="left:2544px;top:1442px;width:30px;height:26px;background:#212121;border:2px solid #1a1a1a"></div>
<div class="t" style="left:2551.5px;top:1444px;font-size:20px;line-height:22px;color:#c4c4c4">H</div>
<div class="a " style="left:2580px;top:1442px;width:30px;height:26px;background:#212121;border:2px solid #1a1a1a"></div>
<div class="t" style="left:2585.5px;top:1444px;font-size:20px;line-height:22px;color:#c4c4c4">W</div>
</body></html>
